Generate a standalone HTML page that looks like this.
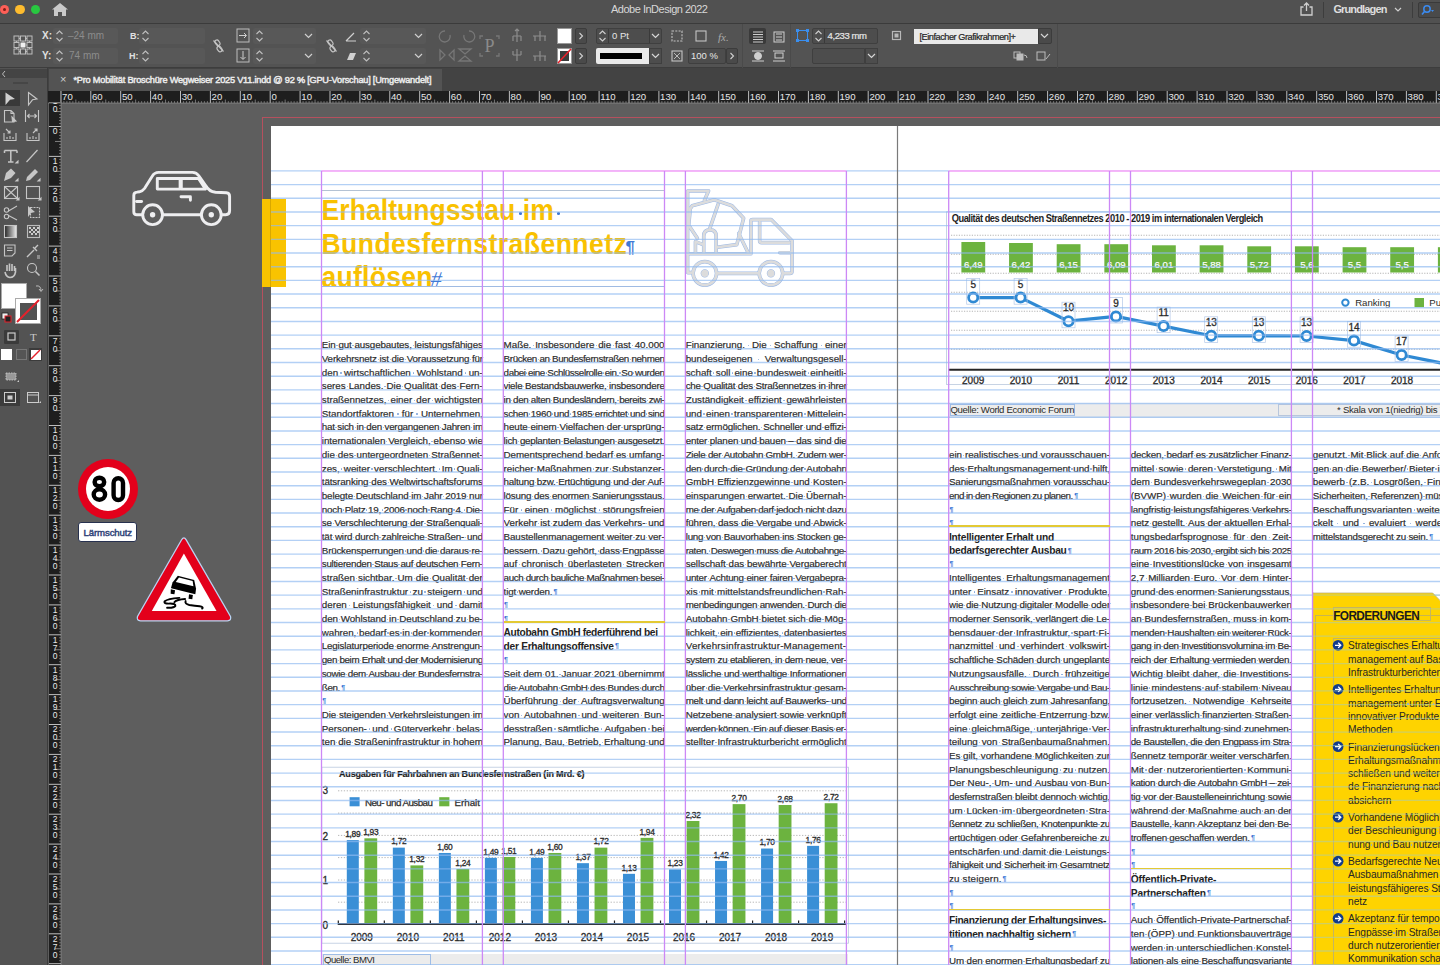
<!DOCTYPE html><html><head><meta charset="utf-8"><style>
*{margin:0;padding:0;box-sizing:border-box}
html,body{width:1440px;height:965px;overflow:hidden;background:#5e5e5e;font-family:"Liberation Sans",sans-serif}
.a{position:absolute}
#title{left:0;top:0;width:1440px;height:24px;background:#515151;border-bottom:1px solid #3b3b3b}
#ctrl{left:0;top:24px;width:1440px;height:44px;background:#535353;border-bottom:1px solid #3d3d3d}
#tabbar{left:48px;top:68px;width:1392px;height:23px;background:#434343}
#tab{left:49px;top:69px;width:393px;height:22px;background:#535353}
#tools{left:0;top:68px;width:48px;height:897px;background:#535353;border-right:1px solid #3c3c3c}
#hrul{left:48px;top:91px;width:1392px;height:12px;background:#1e1e1e}
#vrul{left:49px;top:91px;width:12px;height:874px;background:#1e1e1e}
.rn{position:absolute;color:#e8e8e8;font-size:9px;line-height:10px}
.ui{color:#dcdcdc;font-size:10px}
.page{background:#fff}
.l{position:absolute;white-space:nowrap;text-align:justify;text-align-last:justify;font-size:9.8px;line-height:10px;color:#2a2a2a;-webkit-text-stroke:0.18px #2a2a2a}
.l i,.fd i{position:relative;font-style:normal}.l i::after,.fd i::after{content:"";position:absolute;left:50%;top:5.8px;width:1.3px;height:1.3px;margin-left:-0.65px;background:#86a9dc;border-radius:50%}
.b{font-weight:bold;text-align:left;text-align-last:left;color:#222;font-size:10.2px;-webkit-text-stroke:0}
</style></head><body>
<div class="a page" style="left:271px;top:126px;width:1169px;height:839px"></div>
<div class="a" style="left:262px;top:117px;width:1178px;height:1px;background:#b5505e"></div>
<div class="a" style="left:262px;top:117px;width:1px;height:848px;background:#b5505e"></div>
<div class="l fitj" style="letter-spacing:-0.125px;left:321.8px;top:340.3px;width:161.0px">Ein<i> </i>gut<i> </i>ausgebautes,<i> </i>leistungsfähiges</div>
<div class="l fitj" style="letter-spacing:-0.178px;left:321.8px;top:354.0px;width:161.0px">Verkehrsnetz<i> </i>ist<i> </i>die<i> </i>Voraussetzung<i> </i>für</div>
<div class="l fitj" style="letter-spacing:-0.014px;left:321.8px;top:367.7px;width:161.0px">den<i> </i>wirtschaftlichen<i> </i>Wohlstand<i> </i>un-</div>
<div class="l fitj" style="letter-spacing:-0.013px;left:321.8px;top:381.4px;width:161.0px">seres<i> </i>Landes.<i> </i>Die<i> </i>Qualität<i> </i>des<i> </i>Fern-</div>
<div class="l fitj" style="letter-spacing:-0.013px;left:321.8px;top:395.1px;width:161.0px">straßennetzes,<i> </i>einer<i> </i>der<i> </i>wichtigsten</div>
<div class="l fitj" style="letter-spacing:-0.015px;left:321.8px;top:408.7px;width:161.0px">Standortfaktoren<i> </i>für<i> </i>Unternehmen,</div>
<div class="l fitj" style="letter-spacing:-0.229px;left:321.8px;top:422.4px;width:161.0px">hat<i> </i>sich<i> </i>in<i> </i>den<i> </i>vergangenen<i> </i>Jahren<i> </i>im</div>
<div class="l fitj" style="letter-spacing:-0.051px;left:321.8px;top:436.1px;width:161.0px">internationalen<i> </i>Vergleich,<i> </i>ebenso<i> </i>wie</div>
<div class="l fitj" style="letter-spacing:-0.014px;left:321.8px;top:449.8px;width:161.0px">die<i> </i>des<i> </i>untergeordneten<i> </i>Straßennet-</div>
<div class="l fitj" style="letter-spacing:-0.013px;left:321.8px;top:463.5px;width:161.0px">zes,<i> </i>weiter<i> </i>verschlechtert.<i> </i>Im<i> </i>Quali-</div>
<div class="l fitj" style="letter-spacing:-0.117px;left:321.8px;top:477.2px;width:161.0px">tätsranking<i> </i>des<i> </i>Weltwirtschaftsforums</div>
<div class="l fitj" style="letter-spacing:-0.144px;left:321.8px;top:490.9px;width:161.0px">belegte<i> </i>Deutschland<i> </i>im<i> </i>Jahr<i> </i>2019<i> </i>nur</div>
<div class="l fitj" style="letter-spacing:-0.214px;left:321.8px;top:504.5px;width:161.0px">noch<i> </i>Platz<i> </i>19,<i> </i>2006<i> </i>noch<i> </i>Rang<i> </i>4.<i> </i>Die-</div>
<div class="l fitj" style="letter-spacing:-0.182px;left:321.8px;top:518.2px;width:161.0px">se<i> </i>Verschlechterung<i> </i>der<i> </i>Straßenquali-</div>
<div class="l fitj" style="letter-spacing:-0.150px;left:321.8px;top:531.9px;width:161.0px">tät<i> </i>wird<i> </i>durch<i> </i>zahlreiche<i> </i>Straßen-<i> </i>und</div>
<div class="l fitj" style="letter-spacing:-0.204px;left:321.8px;top:545.6px;width:161.0px">Brückensperrungen<i> </i>und<i> </i>die<i> </i>daraus<i> </i>re-</div>
<div class="l fitj" style="letter-spacing:-0.294px;left:321.8px;top:559.3px;width:161.0px">sultierenden<i> </i>Staus<i> </i>auf<i> </i>deutschen<i> </i>Fern-</div>
<div class="l fitj" style="letter-spacing:-0.013px;left:321.8px;top:573.0px;width:161.0px">straßen<i> </i>sichtbar.<i> </i>Um<i> </i>die<i> </i>Qualität<i> </i>der</div>
<div class="l fitj" style="letter-spacing:-0.014px;left:321.8px;top:586.7px;width:161.0px">Straßeninfrastruktur<i> </i>zu<i> </i>steigern<i> </i>und</div>
<div class="l fitj" style="letter-spacing:-0.014px;left:321.8px;top:600.4px;width:161.0px">deren<i> </i>Leistungsfähigkeit<i> </i>und<i> </i>damit</div>
<div class="l fitj" style="letter-spacing:-0.066px;left:321.8px;top:614.0px;width:161.0px">den<i> </i>Wohlstand<i> </i>in<i> </i>Deutschland<i> </i>zu<i> </i>be-</div>
<div class="l fitj" style="letter-spacing:-0.056px;left:321.8px;top:627.7px;width:161.0px">wahren,<i> </i>bedarf<i> </i>es<i> </i>in<i> </i>der<i> </i>kommenden</div>
<div class="l fitj" style="letter-spacing:-0.187px;left:321.8px;top:641.4px;width:161.0px">Legislaturperiode<i> </i>enorme<i> </i>Anstrengun-</div>
<div class="l fitj" style="letter-spacing:-0.380px;left:321.8px;top:655.1px;width:161.0px">gen<i> </i>beim<i> </i>Erhalt<i> </i>und<i> </i>der<i> </i>Modernisierung</div>
<div class="l fitj" style="letter-spacing:-0.324px;left:321.8px;top:668.8px;width:161.0px">sowie<i> </i>dem<i> </i>Ausbau<i> </i>der<i> </i>Bundesfernstra-</div>
<div class="l fit" style="letter-spacing:-0.370px;left:321.8px;top:682.5px;text-align:left;text-align-last:left">ßen.</div>
<div class="a" style="left:341.3px;top:683.5px;font-size:7px;line-height:7px;color:#3f79d6;font-weight:bold">&#182;</div>
<div class="a" style="left:322.3px;top:697.2px;font-size:7px;line-height:7px;color:#3f79d6;font-weight:bold">&#182;</div>
<div class="l fitj" style="letter-spacing:-0.112px;left:321.8px;top:709.8px;width:161.0px">Die<i> </i>steigenden<i> </i>Verkehrsleistungen<i> </i>im</div>
<div class="l fitj" style="letter-spacing:-0.015px;left:321.8px;top:723.5px;width:161.0px">Personen-<i> </i>und<i> </i>Güterverkehr<i> </i>belas-</div>
<div class="l fitj" style="letter-spacing:-0.036px;left:321.8px;top:737.2px;width:161.0px">ten<i> </i>die<i> </i>Straßeninfrastruktur<i> </i>in<i> </i>hohem</div>
<div class="l fitj" style="letter-spacing:-0.014px;left:503.6px;top:340.3px;width:161.0px">Maße.<i> </i>Insbesondere<i> </i>die<i> </i>fast<i> </i>40.000</div>
<div class="l fitj" style="letter-spacing:-0.380px;left:503.6px;top:354.0px;width:161.0px">Brücken<i> </i>an<i> </i>Bundesfernstraßen<i> </i>nehmen</div>
<div class="l fitj" style="letter-spacing:-0.402px;left:503.6px;top:367.7px;width:161.0px">dabei<i> </i>eine<i> </i>Schlüsselrolle<i> </i>ein.<i> </i>So<i> </i>wurden</div>
<div class="l fitj" style="letter-spacing:-0.278px;left:503.6px;top:381.4px;width:161.0px">viele<i> </i>Bestandsbauwerke,<i> </i>insbesondere</div>
<div class="l fitj" style="letter-spacing:-0.347px;left:503.6px;top:395.1px;width:161.0px">in<i> </i>den<i> </i>alten<i> </i>Bundesländern,<i> </i>bereits<i> </i>zwi-</div>
<div class="l fitj" style="letter-spacing:-0.309px;left:503.6px;top:408.7px;width:161.0px">schen<i> </i>1960<i> </i>und<i> </i>1985<i> </i>errichtet<i> </i>und<i> </i>sind</div>
<div class="l fitj" style="letter-spacing:-0.093px;left:503.6px;top:422.4px;width:161.0px">heute<i> </i>einem<i> </i>Vielfachen<i> </i>der<i> </i>ursprüng-</div>
<div class="l fitj" style="letter-spacing:-0.264px;left:503.6px;top:436.1px;width:161.0px">lich<i> </i>geplanten<i> </i>Belastungen<i> </i>ausgesetzt.</div>
<div class="l fitj" style="letter-spacing:-0.056px;left:503.6px;top:449.8px;width:161.0px">Dementsprechend<i> </i>bedarf<i> </i>es<i> </i>umfang-</div>
<div class="l fitj" style="letter-spacing:-0.014px;left:503.6px;top:463.5px;width:161.0px">reicher<i> </i>Maßnahmen<i> </i>zur<i> </i>Substanzer-</div>
<div class="l fitj" style="letter-spacing:-0.222px;left:503.6px;top:477.2px;width:161.0px">haltung<i> </i>bzw.<i> </i>Ertüchtigung<i> </i>und<i> </i>der<i> </i>Auf-</div>
<div class="l fitj" style="letter-spacing:-0.193px;left:503.6px;top:490.9px;width:161.0px">lösung<i> </i>des<i> </i>enormen<i> </i>Sanierungsstaus.</div>
<div class="l fitj" style="letter-spacing:-0.014px;left:503.6px;top:504.5px;width:161.0px">Für<i> </i>einen<i> </i>möglichst<i> </i>störungsfreien</div>
<div class="l fitj" style="letter-spacing:-0.014px;left:503.6px;top:518.2px;width:161.0px">Verkehr<i> </i>ist<i> </i>zudem<i> </i>das<i> </i>Verkehrs-<i> </i>und</div>
<div class="l fitj" style="letter-spacing:-0.115px;left:503.6px;top:531.9px;width:161.0px">Baustellenmanagement<i> </i>weiter<i> </i>zu<i> </i>ver-</div>
<div class="l fitj" style="letter-spacing:-0.163px;left:503.6px;top:545.6px;width:161.0px">bessern.<i> </i>Dazu<i> </i>gehört,<i> </i>dass<i> </i>Engpässe</div>
<div class="l fitj" style="letter-spacing:-0.014px;left:503.6px;top:559.3px;width:161.0px">auf<i> </i>chronisch<i> </i>überlasteten<i> </i>Strecken</div>
<div class="l fitj" style="letter-spacing:-0.400px;left:503.6px;top:573.0px;width:161.0px">auch<i> </i>durch<i> </i>bauliche<i> </i>Maßnahmen<i> </i>besei-</div>
<div class="l fit" style="letter-spacing:-0.152px;left:503.6px;top:586.7px;text-align:left;text-align-last:left">tigt<i> </i>werden.</div>
<div class="a" style="left:553.6px;top:587.7px;font-size:7px;line-height:7px;color:#3f79d6;font-weight:bold">&#182;</div>
<div class="a" style="left:504.1px;top:601.4px;font-size:7px;line-height:7px;color:#3f79d6;font-weight:bold">&#182;</div>
<div class="a" style="left:504.1px;top:615.0px;font-size:7px;line-height:7px;color:#3f79d6;font-weight:bold">&#182;</div>
<div class="l b fit" style="letter-spacing:-0.336px;left:503.6px;top:628.4px">Autobahn GmbH federführend bei</div>
<div class="l b fit" style="letter-spacing:-0.288px;left:503.6px;top:642.1px">der Erhaltungsoffensive</div>
<div class="a" style="left:614.9px;top:642.4px;font-size:7px;line-height:7px;color:#3f79d6;font-weight:bold">&#182;</div>
<div class="a" style="left:504.1px;top:656.1px;font-size:7px;line-height:7px;color:#3f79d6;font-weight:bold">&#182;</div>
<div class="l fitj" style="letter-spacing:-0.023px;left:503.6px;top:668.8px;width:161.0px">Seit<i> </i>dem<i> </i>01.<i> </i>Januar<i> </i>2021<i> </i>übernimmt</div>
<div class="l fitj" style="letter-spacing:-0.296px;left:503.6px;top:682.5px;width:161.0px">die<i> </i>Autobahn<i> </i>GmbH<i> </i>des<i> </i>Bundes<i> </i>durch</div>
<div class="l fitj" style="letter-spacing:-0.014px;left:503.6px;top:696.2px;width:161.0px">Überführung<i> </i>der<i> </i>Auftragsverwaltung</div>
<div class="l fitj" style="letter-spacing:-0.016px;left:503.6px;top:709.8px;width:161.0px">von<i> </i>Autobahnen<i> </i>und<i> </i>weiteren<i> </i>Bun-</div>
<div class="l fitj" style="letter-spacing:-0.015px;left:503.6px;top:723.5px;width:161.0px">desstraßen<i> </i>sämtliche<i> </i>Aufgaben<i> </i>bei</div>
<div class="l fitj" style="letter-spacing:-0.038px;left:503.6px;top:737.2px;width:161.0px">Planung,<i> </i>Bau,<i> </i>Betrieb,<i> </i>Erhaltung<i> </i>und</div>
<div class="l fitj" style="letter-spacing:-0.014px;left:685.7px;top:340.3px;width:161.0px">Finanzierung.<i> </i>Die<i> </i>Schaffung<i> </i>einer</div>
<div class="l fitj" style="letter-spacing:-0.016px;left:685.7px;top:354.0px;width:161.0px">bundeseigenen<i> </i>Verwaltungsgesell-</div>
<div class="l fitj" style="letter-spacing:-0.012px;left:685.7px;top:367.7px;width:161.0px">schaft<i> </i>soll<i> </i>eine<i> </i>bundesweit<i> </i>einheitli-</div>
<div class="l fitj" style="letter-spacing:-0.244px;left:685.7px;top:381.4px;width:161.0px">che<i> </i>Qualität<i> </i>des<i> </i>Straßennetzes<i> </i>in<i> </i>ihrer</div>
<div class="l fitj" style="letter-spacing:-0.013px;left:685.7px;top:395.1px;width:161.0px">Zuständigkeit<i> </i>effizient<i> </i>gewährleisten</div>
<div class="l fitj" style="letter-spacing:-0.013px;left:685.7px;top:408.7px;width:161.0px">und<i> </i>einen<i> </i>transparenteren<i> </i>Mittelein-</div>
<div class="l fitj" style="letter-spacing:-0.127px;left:685.7px;top:422.4px;width:161.0px">satz<i> </i>ermöglichen.<i> </i>Schneller<i> </i>und<i> </i>effizi-</div>
<div class="l fitj" style="letter-spacing:-0.171px;left:685.7px;top:436.1px;width:161.0px">enter<i> </i>planen<i> </i>und<i> </i>bauen<i> </i>–<i> </i>das<i> </i>sind<i> </i>die</div>
<div class="l fitj" style="letter-spacing:-0.318px;left:685.7px;top:449.8px;width:161.0px">Ziele<i> </i>der<i> </i>Autobahn<i> </i>GmbH.<i> </i>Zudem<i> </i>wer-</div>
<div class="l fitj" style="letter-spacing:-0.195px;left:685.7px;top:463.5px;width:161.0px">den<i> </i>durch<i> </i>die<i> </i>Gründung<i> </i>der<i> </i>Autobahn</div>
<div class="l fitj" style="letter-spacing:-0.014px;left:685.7px;top:477.2px;width:161.0px">GmbH<i> </i>Effizienzgewinne<i> </i>und<i> </i>Kosten-</div>
<div class="l fitj" style="letter-spacing:-0.021px;left:685.7px;top:490.9px;width:161.0px">einsparungen<i> </i>erwartet.<i> </i>Die<i> </i>Übernah-</div>
<div class="l fitj" style="letter-spacing:-0.352px;left:685.7px;top:504.5px;width:161.0px">me<i> </i>der<i> </i>Aufgaben<i> </i>darf<i> </i>jedoch<i> </i>nicht<i> </i>dazu</div>
<div class="l fitj" style="letter-spacing:-0.128px;left:685.7px;top:518.2px;width:161.0px">führen,<i> </i>dass<i> </i>die<i> </i>Vergabe<i> </i>und<i> </i>Abwick-</div>
<div class="l fitj" style="letter-spacing:-0.220px;left:685.7px;top:531.9px;width:161.0px">lung<i> </i>von<i> </i>Bauvorhaben<i> </i>ins<i> </i>Stocken<i> </i>ge-</div>
<div class="l fitj" style="letter-spacing:-0.400px;left:685.7px;top:545.6px;width:161.0px">raten.<i> </i>Deswegen<i> </i>muss<i> </i>die<i> </i>Autobahnge-</div>
<div class="l fitj" style="letter-spacing:-0.082px;left:685.7px;top:559.3px;width:161.0px">sellschaft<i> </i>das<i> </i>bewährte<i> </i>Vergaberecht</div>
<div class="l fitj" style="letter-spacing:-0.236px;left:685.7px;top:573.0px;width:161.0px">unter<i> </i>Achtung<i> </i>einer<i> </i>fairen<i> </i>Vergabepra-</div>
<div class="l fitj" style="letter-spacing:-0.014px;left:685.7px;top:586.7px;width:161.0px">xis<i> </i>mit<i> </i>mittelstandsfreundlichen<i> </i>Rah-</div>
<div class="l fitj" style="letter-spacing:-0.312px;left:685.7px;top:600.4px;width:161.0px">menbedingungen<i> </i>anwenden.<i> </i>Durch<i> </i>die</div>
<div class="l fitj" style="letter-spacing:-0.014px;left:685.7px;top:614.0px;width:161.0px">Autobahn<i> </i>GmbH<i> </i>bietet<i> </i>sich<i> </i>die<i> </i>Mög-</div>
<div class="l fitj" style="letter-spacing:-0.107px;left:685.7px;top:627.7px;width:161.0px">lichkeit,<i> </i>ein<i> </i>effizientes,<i> </i>datenbasiertes</div>
<div class="l fitj" style="letter-spacing:0.194px;left:685.7px;top:641.4px;width:161.0px">Verkehrsinfrastruktur-Management-</div>
<div class="l fitj" style="letter-spacing:-0.286px;left:685.7px;top:655.1px;width:161.0px">system<i> </i>zu<i> </i>etablieren,<i> </i>in<i> </i>dem<i> </i>neue,<i> </i>ver-</div>
<div class="l fitj" style="letter-spacing:-0.229px;left:685.7px;top:668.8px;width:161.0px">lässliche<i> </i>und<i> </i>werthaltige<i> </i>Informationen</div>
<div class="l fitj" style="letter-spacing:-0.093px;left:685.7px;top:682.5px;width:161.0px">über<i> </i>die<i> </i>Verkehrsinfrastruktur<i> </i>gesam-</div>
<div class="l fitj" style="letter-spacing:-0.308px;left:685.7px;top:696.2px;width:161.0px">melt<i> </i>und<i> </i>dann<i> </i>leicht<i> </i>auf<i> </i>Bauwerks-<i> </i>und</div>
<div class="l fitj" style="letter-spacing:-0.067px;left:685.7px;top:709.8px;width:161.0px">Netzebene<i> </i>analysiert<i> </i>sowie<i> </i>verknüpft</div>
<div class="l fitj" style="letter-spacing:-0.343px;left:685.7px;top:723.5px;width:161.0px">werden<i> </i>können.<i> </i>Ein<i> </i>auf<i> </i>dieser<i> </i>Basis<i> </i>er-</div>
<div class="l fitj" style="letter-spacing:-0.018px;left:685.7px;top:737.2px;width:161.0px">stellter<i> </i>Infrastrukturbericht<i> </i>ermöglicht</div>
<div class="l fitj" style="letter-spacing:-0.021px;left:949.0px;top:449.8px;width:161.0px">ein<i> </i>realistisches<i> </i>und<i> </i>vorausschauen-</div>
<div class="l fitj" style="letter-spacing:-0.053px;left:949.0px;top:463.5px;width:161.0px">des<i> </i>Erhaltungsmanagement<i> </i>und<i> </i>hilft,</div>
<div class="l fitj" style="letter-spacing:-0.175px;left:949.0px;top:477.2px;width:161.0px">Sanierungsmaßnahmen<i> </i>vorausschau-</div>
<div class="l fit" style="letter-spacing:-0.493px;left:949.0px;top:490.9px;text-align:left;text-align-last:left">end<i> </i>in<i> </i>den<i> </i>Regionen<i> </i>zu<i> </i>planen.</div>
<div class="a" style="left:1074.2px;top:491.9px;font-size:7px;line-height:7px;color:#3f79d6;font-weight:bold">&#182;</div>
<div class="a" style="left:949.5px;top:505.5px;font-size:7px;line-height:7px;color:#3f79d6;font-weight:bold">&#182;</div>
<div class="a" style="left:949.5px;top:519.2px;font-size:7px;line-height:7px;color:#3f79d6;font-weight:bold">&#182;</div>
<div class="l b fit" style="letter-spacing:-0.246px;left:949.0px;top:532.6px">Intelligenter Erhalt und</div>
<div class="l b fit" style="letter-spacing:-0.238px;left:949.0px;top:546.3px">bedarfsgerechter Ausbau</div>
<div class="a" style="left:1067.8px;top:546.6px;font-size:7px;line-height:7px;color:#3f79d6;font-weight:bold">&#182;</div>
<div class="a" style="left:949.5px;top:560.3px;font-size:7px;line-height:7px;color:#3f79d6;font-weight:bold">&#182;</div>
<div class="l fitj" style="letter-spacing:-0.015px;left:949.0px;top:573.0px;width:161.0px">Intelligentes<i> </i>Erhaltungsmanagement</div>
<div class="l fitj" style="letter-spacing:-0.013px;left:949.0px;top:586.7px;width:161.0px">unter<i> </i>Einsatz<i> </i>innovativer<i> </i>Produkte,</div>
<div class="l fitj" style="letter-spacing:-0.150px;left:949.0px;top:600.4px;width:161.0px">wie<i> </i>die<i> </i>Nutzung<i> </i>digitaler<i> </i>Modelle<i> </i>oder</div>
<div class="l fitj" style="letter-spacing:-0.109px;left:949.0px;top:614.0px;width:161.0px">moderner<i> </i>Sensorik,<i> </i>verlängert<i> </i>die<i> </i>Le-</div>
<div class="l fitj" style="letter-spacing:-0.012px;left:949.0px;top:627.7px;width:161.0px">bensdauer<i> </i>der<i> </i>Infrastruktur,<i> </i>spart<i> </i>Fi-</div>
<div class="l fitj" style="letter-spacing:-0.013px;left:949.0px;top:641.4px;width:161.0px">nanzmittel<i> </i>und<i> </i>verhindert<i> </i>volkswirt-</div>
<div class="l fitj" style="letter-spacing:-0.158px;left:949.0px;top:655.1px;width:161.0px">schaftliche<i> </i>Schäden<i> </i>durch<i> </i>ungeplante</div>
<div class="l fitj" style="letter-spacing:-0.014px;left:949.0px;top:668.8px;width:161.0px">Nutzungsausfälle.<i> </i>Durch<i> </i>frühzeitige</div>
<div class="l fitj" style="letter-spacing:-0.385px;left:949.0px;top:682.5px;width:161.0px">Ausschreibung<i> </i>sowie<i> </i>Vergabe<i> </i>und<i> </i>Bau-</div>
<div class="l fitj" style="letter-spacing:-0.204px;left:949.0px;top:696.2px;width:161.0px">beginn<i> </i>auch<i> </i>gleich<i> </i>zum<i> </i>Jahresanfang,</div>
<div class="l fitj" style="letter-spacing:-0.012px;left:949.0px;top:709.8px;width:161.0px">erfolgt<i> </i>eine<i> </i>zeitliche<i> </i>Entzerrung<i> </i>bzw.</div>
<div class="l fitj" style="letter-spacing:-0.013px;left:949.0px;top:723.5px;width:161.0px">eine<i> </i>gleichmäßige,<i> </i>unterjährige<i> </i>Ver-</div>
<div class="l fitj" style="letter-spacing:-0.016px;left:949.0px;top:737.2px;width:161.0px">teilung<i> </i>von<i> </i>Straßenbaumaßnahmen.</div>
<div class="l fitj" style="letter-spacing:-0.065px;left:949.0px;top:750.9px;width:161.0px">Es<i> </i>gilt,<i> </i>vorhandene<i> </i>Möglichkeiten<i> </i>zur</div>
<div class="l fitj" style="letter-spacing:-0.015px;left:949.0px;top:764.6px;width:161.0px">Planungsbeschleunigung<i> </i>zu<i> </i>nutzen.</div>
<div class="l fitj" style="letter-spacing:-0.014px;left:949.0px;top:778.3px;width:161.0px">Der<i> </i>Neu-,<i> </i>Um-<i> </i>und<i> </i>Ausbau<i> </i>von<i> </i>Bun-</div>
<div class="l fitj" style="letter-spacing:-0.192px;left:949.0px;top:792.0px;width:161.0px">desfernstraßen<i> </i>bleibt<i> </i>dennoch<i> </i>wichtig,</div>
<div class="l fitj" style="letter-spacing:-0.015px;left:949.0px;top:805.6px;width:161.0px">um<i> </i>Lücken<i> </i>im<i> </i>übergeordneten<i> </i>Stra-</div>
<div class="l fitj" style="letter-spacing:-0.316px;left:949.0px;top:819.3px;width:161.0px">ßennetz<i> </i>zu<i> </i>schließen,<i> </i>Knotenpunkte<i> </i>zu</div>
<div class="l fitj" style="letter-spacing:-0.128px;left:949.0px;top:833.0px;width:161.0px">ertüchtigen<i> </i>oder<i> </i>Gefahrenbereiche<i> </i>zu</div>
<div class="l fitj" style="letter-spacing:-0.014px;left:949.0px;top:846.7px;width:161.0px">entschärfen<i> </i>und<i> </i>damit<i> </i>die<i> </i>Leistungs-</div>
<div class="l fitj" style="letter-spacing:-0.264px;left:949.0px;top:860.4px;width:161.0px">fähigkeit<i> </i>und<i> </i>Sicherheit<i> </i>im<i> </i>Gesamtnetz</div>
<div class="l fit" style="letter-spacing:0.175px;left:949.0px;top:874.1px;text-align:left;text-align-last:left">zu<i> </i>steigern.</div>
<div class="a" style="left:1002.6px;top:875.1px;font-size:7px;line-height:7px;color:#3f79d6;font-weight:bold">&#182;</div>
<div class="a" style="left:949.5px;top:888.8px;font-size:7px;line-height:7px;color:#3f79d6;font-weight:bold">&#182;</div>
<div class="a" style="left:949.5px;top:902.4px;font-size:7px;line-height:7px;color:#3f79d6;font-weight:bold">&#182;</div>
<div class="l b fit" style="letter-spacing:-0.321px;left:949.0px;top:915.8px">Finanzierung der Erhaltungsinves-</div>
<div class="l b fit" style="letter-spacing:-0.282px;left:949.0px;top:929.5px">titionen nachhaltig sichern</div>
<div class="a" style="left:1072.3px;top:929.8px;font-size:7px;line-height:7px;color:#3f79d6;font-weight:bold">&#182;</div>
<div class="a" style="left:949.5px;top:943.5px;font-size:7px;line-height:7px;color:#3f79d6;font-weight:bold">&#182;</div>
<div class="l fitj" style="letter-spacing:-0.168px;left:949.0px;top:956.2px;width:161.0px">Um<i> </i>den<i> </i>enormen<i> </i>Erhaltungsbedarf<i> </i>zu</div>
<div class="l fitj" style="letter-spacing:-0.192px;left:1130.8px;top:449.8px;width:161.0px">decken,<i> </i>bedarf<i> </i>es<i> </i>zusätzlicher<i> </i>Finanz-</div>
<div class="l fitj" style="letter-spacing:-0.014px;left:1130.8px;top:463.5px;width:161.0px">mittel<i> </i>sowie<i> </i>deren<i> </i>Verstetigung.<i> </i>Mit</div>
<div class="l fitj" style="letter-spacing:-0.016px;left:1130.8px;top:477.2px;width:161.0px">dem<i> </i>Bundesverkehrswegeplan<i> </i>2030</div>
<div class="l fitj" style="letter-spacing:-0.014px;left:1130.8px;top:490.9px;width:161.0px">(BVWP)<i> </i>wurden<i> </i>die<i> </i>Weichen<i> </i>für<i> </i>ein</div>
<div class="l fitj" style="letter-spacing:-0.195px;left:1130.8px;top:504.5px;width:161.0px">langfristig<i> </i>leistungsfähigeres<i> </i>Verkehrs-</div>
<div class="l fitj" style="letter-spacing:-0.048px;left:1130.8px;top:518.2px;width:161.0px">netz<i> </i>gestellt.<i> </i>Aus<i> </i>der<i> </i>aktuellen<i> </i>Erhal-</div>
<div class="l fitj" style="letter-spacing:-0.014px;left:1130.8px;top:531.9px;width:161.0px">tungsbedarfsprognose<i> </i>für<i> </i>den<i> </i>Zeit-</div>
<div class="l fitj" style="letter-spacing:-0.403px;left:1130.8px;top:545.6px;width:161.0px">raum<i> </i>2016<i> </i>bis<i> </i>2030,<i> </i>ergibt<i> </i>sich<i> </i>bis<i> </i>2025</div>
<div class="l fitj" style="letter-spacing:-0.014px;left:1130.8px;top:559.3px;width:161.0px">eine<i> </i>Investitionslücke<i> </i>von<i> </i>insgesamt</div>
<div class="l fitj" style="letter-spacing:-0.014px;left:1130.8px;top:573.0px;width:161.0px">2,7<i> </i>Milliarden<i> </i>Euro.<i> </i>Vor<i> </i>dem<i> </i>Hinter-</div>
<div class="l fitj" style="letter-spacing:-0.086px;left:1130.8px;top:586.7px;width:161.0px">grund<i> </i>des<i> </i>enormen<i> </i>Sanierungsstaus,</div>
<div class="l fitj" style="letter-spacing:-0.023px;left:1130.8px;top:600.4px;width:161.0px">insbesondere<i> </i>bei<i> </i>Brückenbauwerken</div>
<div class="l fitj" style="letter-spacing:-0.014px;left:1130.8px;top:614.0px;width:161.0px">an<i> </i>Bundesfernstraßen,<i> </i>muss<i> </i>in<i> </i>kom-</div>
<div class="l fitj" style="letter-spacing:-0.249px;left:1130.8px;top:627.7px;width:161.0px">menden<i> </i>Haushalten<i> </i>ein<i> </i>weiterer<i> </i>Rück-</div>
<div class="l fitj" style="letter-spacing:-0.328px;left:1130.8px;top:641.4px;width:161.0px">gang<i> </i>in<i> </i>den<i> </i>Investitionsvolumina<i> </i>im<i> </i>Be-</div>
<div class="l fitj" style="letter-spacing:-0.228px;left:1130.8px;top:655.1px;width:161.0px">reich<i> </i>der<i> </i>Erhaltung<i> </i>vermieden<i> </i>werden.</div>
<div class="l fitj" style="letter-spacing:-0.012px;left:1130.8px;top:668.8px;width:161.0px">Wichtig<i> </i>bleibt<i> </i>daher,<i> </i>die<i> </i>Investitions-</div>
<div class="l fitj" style="letter-spacing:-0.013px;left:1130.8px;top:682.5px;width:161.0px">linie<i> </i>mindestens<i> </i>auf<i> </i>stabilem<i> </i>Niveau</div>
<div class="l fitj" style="letter-spacing:-0.014px;left:1130.8px;top:696.2px;width:161.0px">fortzusetzen.<i> </i>Notwendige<i> </i>Kehrseite</div>
<div class="l fitj" style="letter-spacing:-0.103px;left:1130.8px;top:709.8px;width:161.0px">einer<i> </i>verlässlich<i> </i>finanzierten<i> </i>Straßen-</div>
<div class="l fitj" style="letter-spacing:-0.123px;left:1130.8px;top:723.5px;width:161.0px">infrastrukturerhaltung<i> </i>sind<i> </i>zunehmen-</div>
<div class="l fitj" style="letter-spacing:-0.371px;left:1130.8px;top:737.2px;width:161.0px">de<i> </i>Baustellen,<i> </i>die<i> </i>den<i> </i>Engpass<i> </i>im<i> </i>Stra-</div>
<div class="l fitj" style="letter-spacing:-0.066px;left:1130.8px;top:750.9px;width:161.0px">ßennetz<i> </i>temporär<i> </i>weiter<i> </i>verschärfen.</div>
<div class="l fitj" style="letter-spacing:-0.014px;left:1130.8px;top:764.6px;width:161.0px">Mit<i> </i>der<i> </i>nutzerorientierten<i> </i>Kommuni-</div>
<div class="l fitj" style="letter-spacing:-0.302px;left:1130.8px;top:778.3px;width:161.0px">kation<i> </i>durch<i> </i>die<i> </i>Autobahn<i> </i>GmbH<i> </i>–<i> </i>zei-</div>
<div class="l fitj" style="letter-spacing:-0.188px;left:1130.8px;top:792.0px;width:161.0px">tig<i> </i>vor<i> </i>der<i> </i>Baustelleneinrichtung<i> </i>sowie</div>
<div class="l fitj" style="letter-spacing:-0.026px;left:1130.8px;top:805.6px;width:161.0px">während<i> </i>der<i> </i>Maßnahme<i> </i>auch<i> </i>an<i> </i>der</div>
<div class="l fitj" style="letter-spacing:-0.213px;left:1130.8px;top:819.3px;width:161.0px">Baustelle,<i> </i>kann<i> </i>Akzeptanz<i> </i>bei<i> </i>den<i> </i>Be-</div>
<div class="l fit" style="letter-spacing:-0.274px;left:1130.8px;top:833.0px;text-align:left;text-align-last:left">troffenen<i> </i>geschaffen<i> </i>werden.</div>
<div class="a" style="left:1251.0px;top:834.0px;font-size:7px;line-height:7px;color:#3f79d6;font-weight:bold">&#182;</div>
<div class="a" style="left:1131.3px;top:847.7px;font-size:7px;line-height:7px;color:#3f79d6;font-weight:bold">&#182;</div>
<div class="a" style="left:1131.3px;top:861.4px;font-size:7px;line-height:7px;color:#3f79d6;font-weight:bold">&#182;</div>
<div class="l b fit" style="letter-spacing:-0.156px;left:1130.8px;top:874.8px">Öffentlich-Private-</div>
<div class="l b fit" style="letter-spacing:-0.177px;left:1130.8px;top:888.5px">Partnerschaften</div>
<div class="a" style="left:1206.9px;top:888.8px;font-size:7px;line-height:7px;color:#3f79d6;font-weight:bold">&#182;</div>
<div class="a" style="left:1131.3px;top:902.4px;font-size:7px;line-height:7px;color:#3f79d6;font-weight:bold">&#182;</div>
<div class="l fitj" style="letter-spacing:-0.043px;left:1130.8px;top:915.1px;width:161.0px">Auch<i> </i>Öffentlich-Private-Partnerschaf-</div>
<div class="l fitj" style="letter-spacing:-0.014px;left:1130.8px;top:928.8px;width:161.0px">ten<i> </i>(ÖPP)<i> </i>und<i> </i>Funktionsbauverträge</div>
<div class="l fitj" style="letter-spacing:-0.013px;left:1130.8px;top:942.5px;width:161.0px">werden<i> </i>in<i> </i>unterschiedlichen<i> </i>Konstel-</div>
<div class="l fitj" style="letter-spacing:-0.188px;left:1130.8px;top:956.2px;width:161.0px">lationen<i> </i>als<i> </i>eine<i> </i>Beschaffungsvariante</div>
<div class="l fitj" style="letter-spacing:-0.012px;left:1312.8px;top:449.8px;width:161px">genutzt.<i> </i>Mit<i> </i>Blick<i> </i>auf<i> </i>die<i> </i>Anforderun-</div>
<div class="l fitj" style="letter-spacing:-0.013px;left:1312.8px;top:463.5px;width:161px">gen<i> </i>an<i> </i>die<i> </i>Bewerber/<i> </i>Bieter<i> </i>im<i> </i>Wett-</div>
<div class="l fitj" style="letter-spacing:-0.013px;left:1312.8px;top:477.2px;width:161px">bewerb<i> </i>(z.B.<i> </i>Losgrößen,<i> </i>Finanzielle</div>
<div class="l fitj" style="letter-spacing:-0.172px;left:1312.8px;top:490.9px;width:161px">Sicherheiten,<i> </i>Referenzen)<i> </i>müssen<i> </i>die</div>
<div class="l fitj" style="letter-spacing:-0.014px;left:1312.8px;top:504.5px;width:161px">Beschaffungsvarianten<i> </i>weiter<i> </i>entwi-</div>
<div class="l fitj" style="letter-spacing:-0.016px;left:1312.8px;top:518.2px;width:161px">ckelt<i> </i>und<i> </i>evaluiert<i> </i>werden,<i> </i>um</div>
<div class="l fit" style="letter-spacing:-0.222px;left:1312.8px;top:531.9px;text-align:left;text-align-last:left">mittelstandsgerecht<i> </i>zu<i> </i>sein.</div>
<div class="a" style="left:1429.3px;top:532.9px;font-size:7px;line-height:7px;color:#3f79d6;font-weight:bold">&#182;</div>
<div class="a" style="left:262px;top:198.5px;width:23.5px;height:88px;background:#f9c300"></div>
<div class="a" style="left:270px;top:198.5px;width:1px;height:88px;background:#d9a800"></div>
<div class="a fit" style="letter-spacing:0.070px;left:321.5px;top:195.9px;font-size:26.5px;line-height:30px;font-weight:bold;color:#f9c100;white-space:nowrap;transform-origin:0 24.2px;transform:scaleY(1.1)">Erhaltungsstau im</div>
<div class="a fit" style="letter-spacing:0.462px;left:321.5px;top:229.5px;font-size:26.5px;line-height:30px;font-weight:bold;color:#f9c100;white-space:nowrap;transform-origin:0 24.2px;transform:scaleY(1.1)">Bundesfernstraßennetz</div>
<div class="a fit" style="letter-spacing:0.290px;left:321.5px;top:263.2px;font-size:26.5px;line-height:30px;font-weight:bold;color:#f9c100;white-space:nowrap;transform-origin:0 24.2px;transform:scaleY(1.1)">auflösen</div>
<div class="a" style="left:625.5px;top:238.5px;font-size:17px;line-height:17px;color:#3f79d6;font-weight:bold">&#182;</div>
<div class="a" style="left:430.5px;top:268.5px;font-size:20px;line-height:20px;color:#3f79d6;transform:skewX(-8deg)">#</div>
<div class="a" style="left:519px;top:212px;width:2.5px;height:2.5px;border-radius:50%;background:#3f79d6"></div>
<div class="a" style="left:557px;top:212px;width:2.5px;height:2.5px;border-radius:50%;background:#3f79d6"></div>
<div class="a" style="left:321.8px;top:189.6px;width:343px;height:0.8px;background:#b4c2d4"></div>
<div class="a" style="left:321.8px;top:285.9px;width:343px;height:0.8px;background:#9fbbe3"></div>
<svg class="a" style="left:128px;top:166px" width="108" height="66" viewBox="128 166 108 66"><g fill="none" stroke="#eeeef0" stroke-width="2.9" stroke-linecap="round" stroke-linejoin="round">
<path d="M142.4 214.7 H136.8 Q133.8 214.7 133.8 211.7 V195.5 Q133.8 192.3 137 192.1 L139.5 191.8 Q142.5 191.2 144.5 188.5 L152.2 176.2 Q154.4 172.4 158.6 172.4 H192.5 Q196.5 172.4 199 176 L206 186 Q209 191.5 215.5 192.3 L226.4 192.7 Q229.6 193 229.6 196.2 V210.8 Q229.6 214.7 225.8 214.7 H221.2"/>
<path d="M162.8 214.7 H201.2"/>
<circle cx="152.6" cy="214.7" r="9.9"/><circle cx="211.3" cy="214.7" r="9.9"/>
<path d="M157.3 178.5 H180.1 V189.1 H157.3 Z"/><path d="M181.3 178.5 H198.5 L205.5 189.1 H181.3 Z"/>
<path d="M181 196.8 H190.4 V200.2"/><path d="M136.5 201.5 H141.6"/>
</g><circle cx="152.6" cy="214.7" r="2.7" fill="#eeeef0"/><circle cx="211.3" cy="214.7" r="2.7" fill="#eeeef0"/></svg>
<div class="a" style="left:78px;top:459px;width:60px;height:60px;border-radius:50%;background:#e3001b"></div>
<div class="a" style="left:85.7px;top:466.7px;width:44.6px;height:44.6px;border-radius:50%;background:#fff"></div>
<svg class="a" style="left:86px;top:470px" width="44" height="38"><g fill="none" stroke="#000" stroke-width="4.4"><ellipse cx="13.4" cy="12" rx="4.8" ry="4.3"/><ellipse cx="13.4" cy="24.5" rx="5.7" ry="5.2"/><rect x="27.6" y="8.2" width="9.4" height="21.8" rx="4.7"/></g></svg>
<div class="a" style="left:78.2px;top:522.2px;width:59px;height:20px;background:#fff;border:1.9px solid #27314f;border-radius:3px"></div>
<div class="a fit" style="letter-spacing:-0.122px;left:83.6px;top:526.8px;font-size:9.6px;line-height:11px;color:#2f4277;-webkit-text-stroke:0.45px #2f4277;white-space:nowrap">Lärmschutz</div>
<svg class="a" style="left:134px;top:534px" width="100" height="92" viewBox="134 534 100 92">
<path d="M183.9 537.8 Q185 537.8 186.2 539.8 L230.5 616.5 Q231.6 620.8 227.5 620.8 H140.5 Q136.3 620.8 137.5 616.5 L181.6 539.8 Q182.8 537.8 183.9 537.8 Z" fill="#e3001b" stroke="#b9d3f2" stroke-width="1.3"/>
<path d="M183.9 553.5 L216.5 611 H151.8 Z" fill="#fff"/>
</svg>
<svg class="a" style="left:150px;top:560px" width="70" height="55" viewBox="0 0 1228 965">
<path d="M372 480 L395 395 L488 275 L775 350 L808 505 L795 600 L372 495 Z" fill="#000"/>
<path d="M452 385 L508 305 L748 368 L762 462 Z" fill="#fff"/>
<path d="M365 515 L440 530 L428 600 L362 590 Z" fill="#000"/>
<path d="M685 600 L752 612 L742 690 L676 678 Z" fill="#000"/>
<g fill="none" stroke="#000" stroke-width="34" stroke-linecap="round">
<path d="M515 665 Q310 680 258 725 Q235 765 330 765 Q455 760 445 805 Q420 845 300 838"/>
<path d="M615 685 Q470 695 428 738"/>
<path d="M625 720 Q605 770 690 790 Q790 805 870 812 Q945 825 915 852"/>
</g></svg>
<svg class="a" style="left:680px;top:185px" width="120" height="105" viewBox="0 0 1103 965"><g fill="none" stroke-linecap="round" stroke-linejoin="round">
<g stroke="#9bb8e6" stroke-width="33">
<path d="M225 140 L262 55 H70 V805 H105"/>
<path d="M95 215 L112 190 L315 135 L478 190 L585 305 L522 548 L342 572"/>
<path d="M95 215 L80 370 L160 490"/>
<path d="M350 178 L272 405"/>
<path d="M540 445 L625 620"/>
<path d="M218 625 V470 Q218 412 277 412 Q332 412 332 470 V625"/>
<path d="M142 625 V520 L205 545"/>
<path d="M70 632 H652 V332 Q652 318 668 318 H838 L1030 512 V792 Q1030 812 1010 812 H952"/>
<path d="M732 340 V515 Q732 530 750 530 H1005"/>
<path d="M918 622 H1028"/>
<path d="M342 812 H722"/>
<circle cx="228" cy="812" r="108"/><circle cx="836" cy="812" r="108"/>
<circle cx="228" cy="812" r="22" fill="#dcdcdc"/><circle cx="836" cy="812" r="22" fill="#dcdcdc"/>
</g><g stroke="#dcdcdc" stroke-width="24">
<path d="M225 140 L262 55 H70 V805 H105"/>
<path d="M95 215 L112 190 L315 135 L478 190 L585 305 L522 548 L342 572"/>
<path d="M95 215 L80 370 L160 490"/>
<path d="M350 178 L272 405"/>
<path d="M540 445 L625 620"/>
<path d="M218 625 V470 Q218 412 277 412 Q332 412 332 470 V625"/>
<path d="M142 625 V520 L205 545"/>
<path d="M70 632 H652 V332 Q652 318 668 318 H838 L1030 512 V792 Q1030 812 1010 812 H952"/>
<path d="M732 340 V515 Q732 530 750 530 H1005"/>
<path d="M918 622 H1028"/>
<path d="M342 812 H722"/>
<circle cx="228" cy="812" r="108"/><circle cx="836" cy="812" r="108"/>
<circle cx="228" cy="812" r="22" fill="#dcdcdc"/><circle cx="836" cy="812" r="22" fill="#dcdcdc"/>
</g></g></svg>
<svg class="a" style="left:0;top:0" width="1440" height="965">
<rect x="321.8" y="767.2" width="526.6" height="176" fill="none" stroke="#b9c9de" stroke-width="0.8"/>
<line x1="338" x2="846" y1="790.8" y2="790.8" stroke="#b8b8b8" stroke-width="1" stroke-dasharray="1.3 1.6"/>
<line x1="338" x2="846" y1="813.1" y2="813.1" stroke="#b8b8b8" stroke-width="1" stroke-dasharray="1.3 1.6"/>
<line x1="338" x2="846" y1="835.4" y2="835.4" stroke="#b8b8b8" stroke-width="1" stroke-dasharray="1.3 1.6"/>
<line x1="338" x2="846" y1="857.6" y2="857.6" stroke="#b8b8b8" stroke-width="1" stroke-dasharray="1.3 1.6"/>
<line x1="338" x2="846" y1="880.0" y2="880.0" stroke="#b8b8b8" stroke-width="1" stroke-dasharray="1.3 1.6"/>
<line x1="338" x2="846" y1="902.2" y2="902.2" stroke="#b8b8b8" stroke-width="1" stroke-dasharray="1.3 1.6"/>
<rect x="346.80" y="840.08" width="12" height="83.92" fill="#3a8fd6"/>
<rect x="364.40" y="838.31" width="12.8" height="85.69" fill="#6cb33f"/>
<text x="352.80" y="836.88" font-family=""Liberation Sans", sans-serif" font-size="8.4" letter-spacing="-0.3" fill="#2a2a2a" stroke="#2a2a2a" stroke-width="0.3" text-anchor="middle">1,89</text>
<text x="370.80" y="835.11" font-family=""Liberation Sans", sans-serif" font-size="8.4" letter-spacing="-0.3" fill="#2a2a2a" stroke="#2a2a2a" stroke-width="0.3" text-anchor="middle">1,93</text>
<text x="361.80" y="940.6" font-family=""Liberation Sans", sans-serif" font-size="10" fill="#2a2a2a" stroke="#2a2a2a" stroke-width="0.3" text-anchor="middle">2009</text>
<rect x="392.83" y="847.63" width="12" height="76.37" fill="#3a8fd6"/>
<rect x="410.43" y="865.39" width="12.8" height="58.61" fill="#6cb33f"/>
<text x="398.83" y="844.43" font-family=""Liberation Sans", sans-serif" font-size="8.4" letter-spacing="-0.3" fill="#2a2a2a" stroke="#2a2a2a" stroke-width="0.3" text-anchor="middle">1,72</text>
<text x="416.83" y="862.19" font-family=""Liberation Sans", sans-serif" font-size="8.4" letter-spacing="-0.3" fill="#2a2a2a" stroke="#2a2a2a" stroke-width="0.3" text-anchor="middle">1,32</text>
<text x="407.83" y="940.6" font-family=""Liberation Sans", sans-serif" font-size="10" fill="#2a2a2a" stroke="#2a2a2a" stroke-width="0.3" text-anchor="middle">2010</text>
<rect x="438.86" y="852.96" width="12" height="71.04" fill="#3a8fd6"/>
<rect x="456.46" y="868.94" width="12.8" height="55.06" fill="#6cb33f"/>
<text x="444.86" y="849.76" font-family=""Liberation Sans", sans-serif" font-size="8.4" letter-spacing="-0.3" fill="#2a2a2a" stroke="#2a2a2a" stroke-width="0.3" text-anchor="middle">1,60</text>
<text x="462.86" y="865.74" font-family=""Liberation Sans", sans-serif" font-size="8.4" letter-spacing="-0.3" fill="#2a2a2a" stroke="#2a2a2a" stroke-width="0.3" text-anchor="middle">1,24</text>
<text x="453.86" y="940.6" font-family=""Liberation Sans", sans-serif" font-size="10" fill="#2a2a2a" stroke="#2a2a2a" stroke-width="0.3" text-anchor="middle">2011</text>
<rect x="484.89" y="857.84" width="12" height="66.16" fill="#3a8fd6"/>
<rect x="502.49" y="856.96" width="12.8" height="67.04" fill="#6cb33f"/>
<text x="490.89" y="854.64" font-family=""Liberation Sans", sans-serif" font-size="8.4" letter-spacing="-0.3" fill="#2a2a2a" stroke="#2a2a2a" stroke-width="0.3" text-anchor="middle">1,49</text>
<text x="508.89" y="853.76" font-family=""Liberation Sans", sans-serif" font-size="8.4" letter-spacing="-0.3" fill="#2a2a2a" stroke="#2a2a2a" stroke-width="0.3" text-anchor="middle">1,51</text>
<text x="499.89" y="940.6" font-family=""Liberation Sans", sans-serif" font-size="10" fill="#2a2a2a" stroke="#2a2a2a" stroke-width="0.3" text-anchor="middle">2012</text>
<rect x="530.92" y="857.84" width="12" height="66.16" fill="#3a8fd6"/>
<rect x="548.52" y="852.96" width="12.8" height="71.04" fill="#6cb33f"/>
<text x="536.92" y="854.64" font-family=""Liberation Sans", sans-serif" font-size="8.4" letter-spacing="-0.3" fill="#2a2a2a" stroke="#2a2a2a" stroke-width="0.3" text-anchor="middle">1,49</text>
<text x="554.92" y="849.76" font-family=""Liberation Sans", sans-serif" font-size="8.4" letter-spacing="-0.3" fill="#2a2a2a" stroke="#2a2a2a" stroke-width="0.3" text-anchor="middle">1,60</text>
<text x="545.92" y="940.6" font-family=""Liberation Sans", sans-serif" font-size="10" fill="#2a2a2a" stroke="#2a2a2a" stroke-width="0.3" text-anchor="middle">2013</text>
<rect x="576.95" y="863.17" width="12" height="60.83" fill="#3a8fd6"/>
<rect x="594.55" y="847.63" width="12.8" height="76.37" fill="#6cb33f"/>
<text x="582.95" y="859.97" font-family=""Liberation Sans", sans-serif" font-size="8.4" letter-spacing="-0.3" fill="#2a2a2a" stroke="#2a2a2a" stroke-width="0.3" text-anchor="middle">1,37</text>
<text x="600.95" y="844.43" font-family=""Liberation Sans", sans-serif" font-size="8.4" letter-spacing="-0.3" fill="#2a2a2a" stroke="#2a2a2a" stroke-width="0.3" text-anchor="middle">1,72</text>
<text x="591.95" y="940.6" font-family=""Liberation Sans", sans-serif" font-size="10" fill="#2a2a2a" stroke="#2a2a2a" stroke-width="0.3" text-anchor="middle">2014</text>
<rect x="622.98" y="873.83" width="12" height="50.17" fill="#3a8fd6"/>
<rect x="640.58" y="837.86" width="12.8" height="86.14" fill="#6cb33f"/>
<text x="628.98" y="870.63" font-family=""Liberation Sans", sans-serif" font-size="8.4" letter-spacing="-0.3" fill="#2a2a2a" stroke="#2a2a2a" stroke-width="0.3" text-anchor="middle">1,13</text>
<text x="646.98" y="834.66" font-family=""Liberation Sans", sans-serif" font-size="8.4" letter-spacing="-0.3" fill="#2a2a2a" stroke="#2a2a2a" stroke-width="0.3" text-anchor="middle">1,94</text>
<text x="637.98" y="940.6" font-family=""Liberation Sans", sans-serif" font-size="10" fill="#2a2a2a" stroke="#2a2a2a" stroke-width="0.3" text-anchor="middle">2015</text>
<rect x="669.01" y="869.39" width="12" height="54.61" fill="#3a8fd6"/>
<rect x="686.61" y="820.99" width="12.8" height="103.01" fill="#6cb33f"/>
<text x="675.01" y="866.19" font-family=""Liberation Sans", sans-serif" font-size="8.4" letter-spacing="-0.3" fill="#2a2a2a" stroke="#2a2a2a" stroke-width="0.3" text-anchor="middle">1,23</text>
<text x="693.01" y="817.79" font-family=""Liberation Sans", sans-serif" font-size="8.4" letter-spacing="-0.3" fill="#2a2a2a" stroke="#2a2a2a" stroke-width="0.3" text-anchor="middle">2,32</text>
<text x="684.01" y="940.6" font-family=""Liberation Sans", sans-serif" font-size="10" fill="#2a2a2a" stroke="#2a2a2a" stroke-width="0.3" text-anchor="middle">2016</text>
<rect x="715.04" y="860.95" width="12" height="63.05" fill="#3a8fd6"/>
<rect x="732.64" y="804.12" width="12.8" height="119.88" fill="#6cb33f"/>
<text x="721.04" y="857.75" font-family=""Liberation Sans", sans-serif" font-size="8.4" letter-spacing="-0.3" fill="#2a2a2a" stroke="#2a2a2a" stroke-width="0.3" text-anchor="middle">1,42</text>
<text x="739.04" y="800.92" font-family=""Liberation Sans", sans-serif" font-size="8.4" letter-spacing="-0.3" fill="#2a2a2a" stroke="#2a2a2a" stroke-width="0.3" text-anchor="middle">2,70</text>
<text x="730.04" y="940.6" font-family=""Liberation Sans", sans-serif" font-size="10" fill="#2a2a2a" stroke="#2a2a2a" stroke-width="0.3" text-anchor="middle">2017</text>
<rect x="761.07" y="848.52" width="12" height="75.48" fill="#3a8fd6"/>
<rect x="778.67" y="805.01" width="12.8" height="118.99" fill="#6cb33f"/>
<text x="767.07" y="845.32" font-family=""Liberation Sans", sans-serif" font-size="8.4" letter-spacing="-0.3" fill="#2a2a2a" stroke="#2a2a2a" stroke-width="0.3" text-anchor="middle">1,70</text>
<text x="785.07" y="801.81" font-family=""Liberation Sans", sans-serif" font-size="8.4" letter-spacing="-0.3" fill="#2a2a2a" stroke="#2a2a2a" stroke-width="0.3" text-anchor="middle">2,68</text>
<text x="776.07" y="940.6" font-family=""Liberation Sans", sans-serif" font-size="10" fill="#2a2a2a" stroke="#2a2a2a" stroke-width="0.3" text-anchor="middle">2018</text>
<rect x="807.10" y="845.86" width="12" height="78.14" fill="#3a8fd6"/>
<rect x="824.70" y="803.23" width="12.8" height="120.77" fill="#6cb33f"/>
<text x="813.10" y="842.66" font-family=""Liberation Sans", sans-serif" font-size="8.4" letter-spacing="-0.3" fill="#2a2a2a" stroke="#2a2a2a" stroke-width="0.3" text-anchor="middle">1,76</text>
<text x="831.10" y="800.03" font-family=""Liberation Sans", sans-serif" font-size="8.4" letter-spacing="-0.3" fill="#2a2a2a" stroke="#2a2a2a" stroke-width="0.3" text-anchor="middle">2,72</text>
<text x="822.10" y="940.6" font-family=""Liberation Sans", sans-serif" font-size="10" fill="#2a2a2a" stroke="#2a2a2a" stroke-width="0.3" text-anchor="middle">2019</text>
<line x1="338.3" x2="846.5" y1="924" y2="924" stroke="#1e1e1e" stroke-width="2"/>
<line x1="338.30" x2="338.30" y1="920.5" y2="925" stroke="#1e1e1e" stroke-width="1.2"/>
<line x1="384.33" x2="384.33" y1="920.5" y2="925" stroke="#1e1e1e" stroke-width="1.2"/>
<line x1="430.36" x2="430.36" y1="920.5" y2="925" stroke="#1e1e1e" stroke-width="1.2"/>
<line x1="476.39" x2="476.39" y1="920.5" y2="925" stroke="#1e1e1e" stroke-width="1.2"/>
<line x1="522.42" x2="522.42" y1="920.5" y2="925" stroke="#1e1e1e" stroke-width="1.2"/>
<line x1="568.45" x2="568.45" y1="920.5" y2="925" stroke="#1e1e1e" stroke-width="1.2"/>
<line x1="614.48" x2="614.48" y1="920.5" y2="925" stroke="#1e1e1e" stroke-width="1.2"/>
<line x1="660.51" x2="660.51" y1="920.5" y2="925" stroke="#1e1e1e" stroke-width="1.2"/>
<line x1="706.54" x2="706.54" y1="920.5" y2="925" stroke="#1e1e1e" stroke-width="1.2"/>
<line x1="752.57" x2="752.57" y1="920.5" y2="925" stroke="#1e1e1e" stroke-width="1.2"/>
<line x1="798.60" x2="798.60" y1="920.5" y2="925" stroke="#1e1e1e" stroke-width="1.2"/>
<line x1="844.63" x2="844.63" y1="920.5" y2="925" stroke="#1e1e1e" stroke-width="1.2"/>
<text x="322.4" y="794" font-family=""Liberation Sans", sans-serif" font-size="10" fill="#2a2a2a" stroke="#2a2a2a" stroke-width="0.3">3</text>
<text x="322.4" y="839.7" font-family=""Liberation Sans", sans-serif" font-size="10" fill="#2a2a2a" stroke="#2a2a2a" stroke-width="0.3">2</text>
<text x="322.4" y="884.3" font-family=""Liberation Sans", sans-serif" font-size="10" fill="#2a2a2a" stroke="#2a2a2a" stroke-width="0.3">1</text>
<text x="322.4" y="929" font-family=""Liberation Sans", sans-serif" font-size="10" fill="#2a2a2a" stroke="#2a2a2a" stroke-width="0.3">0</text>
<rect x="349.6" y="797.2" width="10" height="9.1" fill="#3a8fd6"/>
<rect x="439.2" y="797.2" width="10.2" height="9.1" fill="#6cb33f"/>
</svg>
<div class="a fit" style="letter-spacing:-0.551px;left:364.9px;top:797.5px;font-size:9.8px;line-height:10px;color:#2a2a2a;-webkit-text-stroke:0.25px #2a2a2a;white-space:nowrap">Neu- und Ausbau</div>
<div class="a fit" style="letter-spacing:-0.019px;left:454.5px;top:797.5px;font-size:9.8px;line-height:10px;color:#2a2a2a;-webkit-text-stroke:0.25px #2a2a2a;white-space:nowrap">Erhalt</div>
<div class="a fit" style="letter-spacing:-0.182px;left:339px;top:768.5px;font-size:9px;line-height:10px;font-weight:bold;color:#1e1e1e;-webkit-text-stroke:0.2px #1e1e1e;white-space:nowrap;transform-origin:0 8px;transform:scaleY(1.1)">Ausgaben für Fahrbahnen an Bundesfernstraßen (in Mrd. €)</div>
<div class="a" style="left:321.8px;top:953.6px;width:526.6px;height:12px;background:#ececec"></div>
<div class="a" style="left:323.4px;top:953.8px;width:107.3px;height:12px;border:0.8px solid #9fbde6"></div>
<div class="a fit" style="letter-spacing:-0.503px;left:324px;top:955px;font-size:9.6px;line-height:10px;color:#2a2a2a;white-space:nowrap">Quelle: BMVI</div>
<svg class="a" style="left:0;top:0" width="1440" height="965">
<rect x="946.5" y="211.8" width="520" height="172.6" fill="none" stroke="#b9c9de" stroke-width="0.8"/>
<line x1="951" x2="1440" y1="235.3" y2="235.3" stroke="#b5b5b5" stroke-width="1.1" stroke-dasharray="1.2 1.4"/>
<line x1="951" x2="1440" y1="254.3" y2="254.3" stroke="#b5b5b5" stroke-width="1.1" stroke-dasharray="1.2 1.4"/>
<line x1="951" x2="1440" y1="273.3" y2="273.3" stroke="#b5b5b5" stroke-width="1.1" stroke-dasharray="1.2 1.4"/>
<line x1="951" x2="1440" y1="292.3" y2="292.3" stroke="#b5b5b5" stroke-width="1.1" stroke-dasharray="1.2 1.4"/>
<line x1="951" x2="1440" y1="311.3" y2="311.3" stroke="#b5b5b5" stroke-width="1.1" stroke-dasharray="1.2 1.4"/>
<line x1="951" x2="1440" y1="330.3" y2="330.3" stroke="#b5b5b5" stroke-width="1.1" stroke-dasharray="1.2 1.4"/>
<line x1="951" x2="1440" y1="349.3" y2="349.3" stroke="#b5b5b5" stroke-width="1.1" stroke-dasharray="1.2 1.4"/>
<rect x="961.40" y="242.0" width="23.8" height="30.5" fill="#6cb33f"/>
<text x="973.30" y="268.4" font-family=""Liberation Sans", sans-serif" font-size="9.6" fill="#fff" stroke="#fff" stroke-width="0.2" text-anchor="middle">6,49</text>
<rect x="1009.05" y="243.0" width="23.8" height="29.5" fill="#6cb33f"/>
<text x="1020.95" y="268.4" font-family=""Liberation Sans", sans-serif" font-size="9.6" fill="#fff" stroke="#fff" stroke-width="0.2" text-anchor="middle">6,42</text>
<rect x="1056.70" y="244.2" width="23.8" height="28.3" fill="#6cb33f"/>
<text x="1068.60" y="268.4" font-family=""Liberation Sans", sans-serif" font-size="9.6" fill="#fff" stroke="#fff" stroke-width="0.2" text-anchor="middle">6,15</text>
<rect x="1104.35" y="244.2" width="23.8" height="28.3" fill="#6cb33f"/>
<text x="1116.25" y="268.4" font-family=""Liberation Sans", sans-serif" font-size="9.6" fill="#fff" stroke="#fff" stroke-width="0.2" text-anchor="middle">6,09</text>
<rect x="1152.00" y="245.3" width="23.8" height="27.2" fill="#6cb33f"/>
<text x="1163.90" y="268.4" font-family=""Liberation Sans", sans-serif" font-size="9.6" fill="#fff" stroke="#fff" stroke-width="0.2" text-anchor="middle">6,01</text>
<rect x="1199.65" y="245.3" width="23.8" height="27.2" fill="#6cb33f"/>
<text x="1211.55" y="268.4" font-family=""Liberation Sans", sans-serif" font-size="9.6" fill="#fff" stroke="#fff" stroke-width="0.2" text-anchor="middle">5,88</text>
<rect x="1247.30" y="246.3" width="23.8" height="26.2" fill="#6cb33f"/>
<text x="1259.20" y="268.4" font-family=""Liberation Sans", sans-serif" font-size="9.6" fill="#fff" stroke="#fff" stroke-width="0.2" text-anchor="middle">5,72</text>
<rect x="1294.95" y="246.3" width="23.8" height="26.2" fill="#6cb33f"/>
<text x="1306.85" y="268.4" font-family=""Liberation Sans", sans-serif" font-size="9.6" fill="#fff" stroke="#fff" stroke-width="0.2" text-anchor="middle">5,6</text>
<rect x="1342.60" y="247.2" width="23.8" height="25.3" fill="#6cb33f"/>
<text x="1354.50" y="268.4" font-family=""Liberation Sans", sans-serif" font-size="9.6" fill="#fff" stroke="#fff" stroke-width="0.2" text-anchor="middle">5,5</text>
<rect x="1390.25" y="247.2" width="23.8" height="25.3" fill="#6cb33f"/>
<text x="1402.15" y="268.4" font-family=""Liberation Sans", sans-serif" font-size="9.6" fill="#fff" stroke="#fff" stroke-width="0.2" text-anchor="middle">5,5</text>
<rect x="1437.90" y="247.2" width="23.8" height="25.3" fill="#6cb33f"/>
<text x="1449.80" y="268.4" font-family=""Liberation Sans", sans-serif" font-size="9.6" fill="#fff" stroke="#fff" stroke-width="0.2" text-anchor="middle">5,5</text>
<path d="M973.2 297.6 L1020.6 297.6 L1068.5 321.2 L1116.0 316.4 L1163.6 326.1 L1211.2 335.8 L1258.8 335.8 L1306.6 336.0 L1354.0 340.6 L1401.6 355.0 L1449.2 364.6" fill="none" stroke="#2f89d3" stroke-width="3.2" stroke-linejoin="round"/>
<circle cx="973.2" cy="297.6" r="4.6" fill="#fff" stroke="#2f89d3" stroke-width="2.8"/>
<rect x="966.7" y="278.6" width="13" height="25.6" fill="none" stroke="#b3c8e8" stroke-width="0.7"/>
<text x="973.2" y="287.7" font-family=""Liberation Sans", sans-serif" font-size="10" fill="#2a2a2a" stroke="#2a2a2a" stroke-width="0.3" text-anchor="middle">5</text>
<circle cx="1020.6" cy="297.6" r="4.6" fill="#fff" stroke="#2f89d3" stroke-width="2.8"/>
<rect x="1014.1" y="278.6" width="13" height="25.6" fill="none" stroke="#b3c8e8" stroke-width="0.7"/>
<text x="1020.6" y="287.7" font-family=""Liberation Sans", sans-serif" font-size="10" fill="#2a2a2a" stroke="#2a2a2a" stroke-width="0.3" text-anchor="middle">5</text>
<circle cx="1068.5" cy="321.2" r="4.6" fill="#fff" stroke="#2f89d3" stroke-width="2.8"/>
<rect x="1062.0" y="302.2" width="13" height="25.6" fill="none" stroke="#b3c8e8" stroke-width="0.7"/>
<text x="1068.5" y="311.3" font-family=""Liberation Sans", sans-serif" font-size="10" fill="#2a2a2a" stroke="#2a2a2a" stroke-width="0.3" text-anchor="middle">10</text>
<circle cx="1116.0" cy="316.4" r="4.6" fill="#fff" stroke="#2f89d3" stroke-width="2.8"/>
<rect x="1109.5" y="297.4" width="13" height="25.6" fill="none" stroke="#b3c8e8" stroke-width="0.7"/>
<text x="1116.0" y="306.5" font-family=""Liberation Sans", sans-serif" font-size="10" fill="#2a2a2a" stroke="#2a2a2a" stroke-width="0.3" text-anchor="middle">9</text>
<circle cx="1163.6" cy="326.1" r="4.6" fill="#fff" stroke="#2f89d3" stroke-width="2.8"/>
<rect x="1157.1" y="307.1" width="13" height="25.6" fill="none" stroke="#b3c8e8" stroke-width="0.7"/>
<text x="1163.6" y="316.2" font-family=""Liberation Sans", sans-serif" font-size="10" fill="#2a2a2a" stroke="#2a2a2a" stroke-width="0.3" text-anchor="middle">11</text>
<circle cx="1211.2" cy="335.8" r="4.6" fill="#fff" stroke="#2f89d3" stroke-width="2.8"/>
<rect x="1204.7" y="316.8" width="13" height="25.6" fill="none" stroke="#b3c8e8" stroke-width="0.7"/>
<text x="1211.2" y="325.9" font-family=""Liberation Sans", sans-serif" font-size="10" fill="#2a2a2a" stroke="#2a2a2a" stroke-width="0.3" text-anchor="middle">13</text>
<circle cx="1258.8" cy="335.8" r="4.6" fill="#fff" stroke="#2f89d3" stroke-width="2.8"/>
<rect x="1252.3" y="316.8" width="13" height="25.6" fill="none" stroke="#b3c8e8" stroke-width="0.7"/>
<text x="1258.8" y="325.9" font-family=""Liberation Sans", sans-serif" font-size="10" fill="#2a2a2a" stroke="#2a2a2a" stroke-width="0.3" text-anchor="middle">13</text>
<circle cx="1306.6" cy="336.0" r="4.6" fill="#fff" stroke="#2f89d3" stroke-width="2.8"/>
<rect x="1300.1" y="317.0" width="13" height="25.6" fill="none" stroke="#b3c8e8" stroke-width="0.7"/>
<text x="1306.6" y="326.1" font-family=""Liberation Sans", sans-serif" font-size="10" fill="#2a2a2a" stroke="#2a2a2a" stroke-width="0.3" text-anchor="middle">13</text>
<circle cx="1354.0" cy="340.6" r="4.6" fill="#fff" stroke="#2f89d3" stroke-width="2.8"/>
<rect x="1347.5" y="321.6" width="13" height="25.6" fill="none" stroke="#b3c8e8" stroke-width="0.7"/>
<text x="1354.0" y="330.7" font-family=""Liberation Sans", sans-serif" font-size="10" fill="#2a2a2a" stroke="#2a2a2a" stroke-width="0.3" text-anchor="middle">14</text>
<circle cx="1401.6" cy="355.0" r="4.6" fill="#fff" stroke="#2f89d3" stroke-width="2.8"/>
<rect x="1395.1" y="336.0" width="13" height="25.6" fill="none" stroke="#b3c8e8" stroke-width="0.7"/>
<text x="1401.6" y="345.1" font-family=""Liberation Sans", sans-serif" font-size="10" fill="#2a2a2a" stroke="#2a2a2a" stroke-width="0.3" text-anchor="middle">17</text>
<circle cx="1449.2" cy="364.6" r="4.6" fill="#fff" stroke="#2f89d3" stroke-width="2.8"/>
<rect x="1442.7" y="345.6" width="13" height="25.6" fill="none" stroke="#b3c8e8" stroke-width="0.7"/>
<text x="1449.2" y="354.7" font-family=""Liberation Sans", sans-serif" font-size="10" fill="#2a2a2a" stroke="#2a2a2a" stroke-width="0.3" text-anchor="middle">19</text>
<line x1="948" x2="1440" y1="369.8" y2="369.8" stroke="#262626" stroke-width="2"/>
<text x="973.2" y="383.5" font-family=""Liberation Sans", sans-serif" font-size="10" fill="#2a2a2a" stroke="#2a2a2a" stroke-width="0.3" text-anchor="middle">2009</text>
<text x="1020.9" y="383.5" font-family=""Liberation Sans", sans-serif" font-size="10" fill="#2a2a2a" stroke="#2a2a2a" stroke-width="0.3" text-anchor="middle">2010</text>
<text x="1068.5" y="383.5" font-family=""Liberation Sans", sans-serif" font-size="10" fill="#2a2a2a" stroke="#2a2a2a" stroke-width="0.3" text-anchor="middle">2011</text>
<text x="1116.2" y="383.5" font-family=""Liberation Sans", sans-serif" font-size="10" fill="#2a2a2a" stroke="#2a2a2a" stroke-width="0.3" text-anchor="middle">2012</text>
<text x="1163.8" y="383.5" font-family=""Liberation Sans", sans-serif" font-size="10" fill="#2a2a2a" stroke="#2a2a2a" stroke-width="0.3" text-anchor="middle">2013</text>
<text x="1211.5" y="383.5" font-family=""Liberation Sans", sans-serif" font-size="10" fill="#2a2a2a" stroke="#2a2a2a" stroke-width="0.3" text-anchor="middle">2014</text>
<text x="1259.1" y="383.5" font-family=""Liberation Sans", sans-serif" font-size="10" fill="#2a2a2a" stroke="#2a2a2a" stroke-width="0.3" text-anchor="middle">2015</text>
<text x="1306.8" y="383.5" font-family=""Liberation Sans", sans-serif" font-size="10" fill="#2a2a2a" stroke="#2a2a2a" stroke-width="0.3" text-anchor="middle">2016</text>
<text x="1354.4" y="383.5" font-family=""Liberation Sans", sans-serif" font-size="10" fill="#2a2a2a" stroke="#2a2a2a" stroke-width="0.3" text-anchor="middle">2017</text>
<text x="1402.0" y="383.5" font-family=""Liberation Sans", sans-serif" font-size="10" fill="#2a2a2a" stroke="#2a2a2a" stroke-width="0.3" text-anchor="middle">2018</text>
<circle cx="1345.4" cy="302.6" r="3.2" fill="#fff" stroke="#2f89d3" stroke-width="2"/>
<rect x="1414.5" y="298" width="9.5" height="9.1" fill="#6cb33f"/>
</svg>
<div class="a" style="left:1355.2px;top:298px;font-size:9.6px;line-height:10px;color:#2a2a2a;white-space:nowrap">Ranking</div>
<div class="a" style="left:1429.3px;top:298px;font-size:9.6px;line-height:10px;color:#2a2a2a;white-space:nowrap">Pu</div>
<div class="a fit" style="letter-spacing:-0.470px;left:951.7px;top:213.5px;font-size:9.3px;line-height:11px;font-weight:bold;color:#1e1e1e;white-space:nowrap;transform-origin:0 8.6px;transform:scaleY(1.12)">Qualität des deutschen Straßennetzes 2010 - 2019 im internationalen Vergleich</div>
<div class="a" style="left:948.7px;top:403.3px;width:491.3px;height:14.5px;background:#ececec"></div>
<div class="a" style="left:949.7px;top:403.5px;width:125.5px;height:12.5px;border:0.8px solid #9fbde6"></div>
<div class="a" style="left:1277.5px;top:403.5px;width:170px;height:12.5px;border:0.8px solid #b7c6dc"></div>
<div class="a fit" style="letter-spacing:-0.338px;left:950.5px;top:404.5px;font-size:9.6px;line-height:10px;color:#2a2a2a;white-space:nowrap">Quelle: World Economic Forum</div>
<div class="a fit" style="letter-spacing:-0.247px;left:1337px;top:404.5px;font-size:9.6px;line-height:10px;color:#2a2a2a;white-space:nowrap">* Skala von 1(niedrig) bis 7</div>
<svg class="a" style="left:0;top:0" width="1440" height="965"><line x1="271" x2="1440" y1="170.90" y2="170.90" stroke="#8fbaf0" stroke-width="1.4" stroke-opacity="0.68"/><line x1="271" x2="1440" y1="184.59" y2="184.59" stroke="#8fbaf0" stroke-width="1.4" stroke-opacity="0.68"/><line x1="271" x2="1440" y1="198.27" y2="198.27" stroke="#8fbaf0" stroke-width="1.4" stroke-opacity="0.68"/><line x1="271" x2="1440" y1="211.96" y2="211.96" stroke="#8fbaf0" stroke-width="1.4" stroke-opacity="0.68"/><line x1="271" x2="1440" y1="225.64" y2="225.64" stroke="#8fbaf0" stroke-width="1.4" stroke-opacity="0.68"/><line x1="271" x2="1440" y1="239.33" y2="239.33" stroke="#8fbaf0" stroke-width="1.4" stroke-opacity="0.68"/><line x1="271" x2="1440" y1="253.02" y2="253.02" stroke="#8fbaf0" stroke-width="1.4" stroke-opacity="0.68"/><line x1="271" x2="1440" y1="266.70" y2="266.70" stroke="#8fbaf0" stroke-width="1.4" stroke-opacity="0.68"/><line x1="271" x2="1440" y1="280.39" y2="280.39" stroke="#8fbaf0" stroke-width="1.4" stroke-opacity="0.68"/><line x1="271" x2="1440" y1="294.07" y2="294.07" stroke="#8fbaf0" stroke-width="1.4" stroke-opacity="0.68"/><line x1="271" x2="1440" y1="307.76" y2="307.76" stroke="#8fbaf0" stroke-width="1.4" stroke-opacity="0.68"/><line x1="271" x2="1440" y1="321.45" y2="321.45" stroke="#8fbaf0" stroke-width="1.4" stroke-opacity="0.68"/><line x1="271" x2="1440" y1="335.13" y2="335.13" stroke="#8fbaf0" stroke-width="1.4" stroke-opacity="0.68"/><line x1="271" x2="1440" y1="348.82" y2="348.82" stroke="#8fbaf0" stroke-width="1.4" stroke-opacity="0.68"/><line x1="271" x2="1440" y1="362.50" y2="362.50" stroke="#8fbaf0" stroke-width="1.4" stroke-opacity="0.68"/><line x1="271" x2="1440" y1="376.19" y2="376.19" stroke="#8fbaf0" stroke-width="1.4" stroke-opacity="0.68"/><line x1="271" x2="1440" y1="389.88" y2="389.88" stroke="#8fbaf0" stroke-width="1.4" stroke-opacity="0.68"/><line x1="271" x2="1440" y1="403.56" y2="403.56" stroke="#8fbaf0" stroke-width="1.4" stroke-opacity="0.68"/><line x1="271" x2="1440" y1="417.25" y2="417.25" stroke="#8fbaf0" stroke-width="1.4" stroke-opacity="0.68"/><line x1="271" x2="1440" y1="430.93" y2="430.93" stroke="#8fbaf0" stroke-width="1.4" stroke-opacity="0.68"/><line x1="271" x2="1440" y1="444.62" y2="444.62" stroke="#8fbaf0" stroke-width="1.4" stroke-opacity="0.68"/><line x1="271" x2="1440" y1="458.31" y2="458.31" stroke="#8fbaf0" stroke-width="1.4" stroke-opacity="0.68"/><line x1="271" x2="1440" y1="471.99" y2="471.99" stroke="#8fbaf0" stroke-width="1.4" stroke-opacity="0.68"/><line x1="271" x2="1440" y1="485.68" y2="485.68" stroke="#8fbaf0" stroke-width="1.4" stroke-opacity="0.68"/><line x1="271" x2="1440" y1="499.36" y2="499.36" stroke="#8fbaf0" stroke-width="1.4" stroke-opacity="0.68"/><line x1="271" x2="1440" y1="513.05" y2="513.05" stroke="#8fbaf0" stroke-width="1.4" stroke-opacity="0.68"/><line x1="271" x2="1440" y1="526.74" y2="526.74" stroke="#8fbaf0" stroke-width="1.4" stroke-opacity="0.68"/><line x1="271" x2="1440" y1="540.42" y2="540.42" stroke="#8fbaf0" stroke-width="1.4" stroke-opacity="0.68"/><line x1="271" x2="1440" y1="554.11" y2="554.11" stroke="#8fbaf0" stroke-width="1.4" stroke-opacity="0.68"/><line x1="271" x2="1440" y1="567.79" y2="567.79" stroke="#8fbaf0" stroke-width="1.4" stroke-opacity="0.68"/><line x1="271" x2="1440" y1="581.48" y2="581.48" stroke="#8fbaf0" stroke-width="1.4" stroke-opacity="0.68"/><line x1="271" x2="1440" y1="595.17" y2="595.17" stroke="#8fbaf0" stroke-width="1.4" stroke-opacity="0.68"/><line x1="271" x2="1440" y1="608.85" y2="608.85" stroke="#8fbaf0" stroke-width="1.4" stroke-opacity="0.68"/><line x1="271" x2="1440" y1="622.54" y2="622.54" stroke="#8fbaf0" stroke-width="1.4" stroke-opacity="0.68"/><line x1="271" x2="1440" y1="636.22" y2="636.22" stroke="#8fbaf0" stroke-width="1.4" stroke-opacity="0.68"/><line x1="271" x2="1440" y1="649.91" y2="649.91" stroke="#8fbaf0" stroke-width="1.4" stroke-opacity="0.68"/><line x1="271" x2="1440" y1="663.60" y2="663.60" stroke="#8fbaf0" stroke-width="1.4" stroke-opacity="0.68"/><line x1="271" x2="1440" y1="677.28" y2="677.28" stroke="#8fbaf0" stroke-width="1.4" stroke-opacity="0.68"/><line x1="271" x2="1440" y1="690.97" y2="690.97" stroke="#8fbaf0" stroke-width="1.4" stroke-opacity="0.68"/><line x1="271" x2="1440" y1="704.65" y2="704.65" stroke="#8fbaf0" stroke-width="1.4" stroke-opacity="0.68"/><line x1="271" x2="1440" y1="718.34" y2="718.34" stroke="#8fbaf0" stroke-width="1.4" stroke-opacity="0.68"/><line x1="271" x2="1440" y1="732.03" y2="732.03" stroke="#8fbaf0" stroke-width="1.4" stroke-opacity="0.68"/><line x1="271" x2="1440" y1="745.71" y2="745.71" stroke="#8fbaf0" stroke-width="1.4" stroke-opacity="0.68"/><line x1="271" x2="1440" y1="759.40" y2="759.40" stroke="#8fbaf0" stroke-width="1.4" stroke-opacity="0.68"/><line x1="271" x2="1440" y1="773.08" y2="773.08" stroke="#8fbaf0" stroke-width="1.4" stroke-opacity="0.68"/><line x1="271" x2="1440" y1="786.77" y2="786.77" stroke="#8fbaf0" stroke-width="1.4" stroke-opacity="0.68"/><line x1="271" x2="1440" y1="800.46" y2="800.46" stroke="#8fbaf0" stroke-width="1.4" stroke-opacity="0.68"/><line x1="271" x2="1440" y1="814.14" y2="814.14" stroke="#8fbaf0" stroke-width="1.4" stroke-opacity="0.68"/><line x1="271" x2="1440" y1="827.83" y2="827.83" stroke="#8fbaf0" stroke-width="1.4" stroke-opacity="0.68"/><line x1="271" x2="1440" y1="841.51" y2="841.51" stroke="#8fbaf0" stroke-width="1.4" stroke-opacity="0.68"/><line x1="271" x2="1440" y1="855.20" y2="855.20" stroke="#8fbaf0" stroke-width="1.4" stroke-opacity="0.68"/><line x1="271" x2="1440" y1="868.89" y2="868.89" stroke="#8fbaf0" stroke-width="1.4" stroke-opacity="0.68"/><line x1="271" x2="1440" y1="882.57" y2="882.57" stroke="#8fbaf0" stroke-width="1.4" stroke-opacity="0.68"/><line x1="271" x2="1440" y1="896.26" y2="896.26" stroke="#8fbaf0" stroke-width="1.4" stroke-opacity="0.68"/><line x1="271" x2="1440" y1="909.94" y2="909.94" stroke="#8fbaf0" stroke-width="1.4" stroke-opacity="0.68"/><line x1="271" x2="1440" y1="923.63" y2="923.63" stroke="#8fbaf0" stroke-width="1.4" stroke-opacity="0.68"/><line x1="271" x2="1440" y1="937.32" y2="937.32" stroke="#8fbaf0" stroke-width="1.4" stroke-opacity="0.68"/><line x1="271" x2="1440" y1="951.00" y2="951.00" stroke="#8fbaf0" stroke-width="1.4" stroke-opacity="0.68"/><line x1="271" x2="1440" y1="964.69" y2="964.69" stroke="#8fbaf0" stroke-width="1.4" stroke-opacity="0.68"/><line x1="321.5" x2="846.4" y1="170.90" y2="170.90" stroke="#ffa6f8" stroke-width="1.5"/><line x1="948.7" x2="1440" y1="170.90" y2="170.90" stroke="#ffa6f8" stroke-width="1.5"/><line x1="321.5" x2="321.5" y1="170.90" y2="965" stroke="#cc88f6" stroke-width="1.3"/><line x1="482.4" x2="482.4" y1="170.90" y2="965" stroke="#cc88f6" stroke-width="1.3"/><line x1="503.3" x2="503.3" y1="170.90" y2="965" stroke="#cc88f6" stroke-width="1.3"/><line x1="664.5" x2="664.5" y1="170.90" y2="965" stroke="#cc88f6" stroke-width="1.3"/><line x1="685.4" x2="685.4" y1="170.90" y2="965" stroke="#cc88f6" stroke-width="1.3"/><line x1="846.4" x2="846.4" y1="170.90" y2="965" stroke="#cc88f6" stroke-width="1.3"/><line x1="948.7" x2="948.7" y1="170.90" y2="965" stroke="#cc88f6" stroke-width="1.3"/><line x1="1109.5" x2="1109.5" y1="170.90" y2="965" stroke="#cc88f6" stroke-width="1.3"/><line x1="1130.5" x2="1130.5" y1="170.90" y2="965" stroke="#cc88f6" stroke-width="1.3"/><line x1="1291.4" x2="1291.4" y1="170.90" y2="965" stroke="#cc88f6" stroke-width="1.3"/><line x1="1312.5" x2="1312.5" y1="170.90" y2="965" stroke="#cc88f6" stroke-width="1.3"/><line x1="897.5" x2="897.5" y1="126" y2="965" stroke="#7a7a7a" stroke-width="1.2"/></svg>
<div class="a" style="left:503.6px;top:621.1px;width:161.0px;height:1.8px;background:#e3c934"></div><div class="a" style="left:949.0px;top:525.3px;width:161.0px;height:1.8px;background:#e3c934"></div><div class="a" style="left:949.0px;top:908.5px;width:161.0px;height:1.8px;background:#e3c934"></div><div class="a" style="left:1130.8px;top:867.5px;width:161.0px;height:1.8px;background:#e3c934"></div>
<svg class="a" style="left:1312px;top:592px" width="128" height="373"><path d="M0.4 1 H120.7 L128 8.5 V373 H0.4 Z" fill="#fed300"/><path d="M0.4 1 H120.7 L128 8.5" fill="none" stroke="#b8b18a" stroke-width="0.8"/></svg>
<div class="a" style="left:1315px;top:615px;width:130px;height:350px;border:0.8px solid #c9b550"></div>
<div class="a fit" style="letter-spacing:-0.592px;left:1333.2px;top:610px;font-size:11.8px;line-height:13px;font-weight:bold;color:#1a1a1a;white-space:nowrap;transform-origin:0 10.5px;transform:scaleY(1.1)">FORDERUNGEN</div>
<div class="a" style="left:1333px;top:607px;width:98px;height:14px;border:0.8px solid #c4b560"></div>
<div class="a" style="left:1333px;top:638px;width:120px;height:330px;border:0.8px solid #c4b560"></div>
<div class="a fd" style="left:1348.1px;top:640.2px;font-size:10.2px;line-height:11px;color:#262626;white-space:nowrap;letter-spacing:-0.1px">Strategisches<i> </i>Erhaltungs-</div>
<div class="a fd" style="left:1348.1px;top:653.5px;font-size:10.2px;line-height:11px;color:#262626;white-space:nowrap;letter-spacing:-0.1px">management<i> </i>auf<i> </i>Basis<i> </i>von</div>
<div class="a fd" style="left:1348.1px;top:666.8px;font-size:10.2px;line-height:11px;color:#262626;white-space:nowrap;letter-spacing:-0.1px">Infrastrukturberichten</div>
<div class="a fd" style="left:1348.1px;top:684.2px;font-size:10.2px;line-height:11px;color:#262626;white-space:nowrap;letter-spacing:-0.1px">Intelligentes<i> </i>Erhaltungs-</div>
<div class="a fd" style="left:1348.1px;top:697.5px;font-size:10.2px;line-height:11px;color:#262626;white-space:nowrap;letter-spacing:-0.1px">management<i> </i>unter<i> </i>Einsatz</div>
<div class="a fd" style="left:1348.1px;top:710.8px;font-size:10.2px;line-height:11px;color:#262626;white-space:nowrap;letter-spacing:-0.1px">innovativer<i> </i>Produkte<i> </i>und</div>
<div class="a fd" style="left:1348.1px;top:724.1px;font-size:10.2px;line-height:11px;color:#262626;white-space:nowrap;letter-spacing:-0.1px">Methoden</div>
<div class="a fd" style="left:1348.1px;top:741.5px;font-size:10.2px;line-height:11px;color:#262626;white-space:nowrap;letter-spacing:-0.1px">Finanzierungslücken<i> </i>bei</div>
<div class="a fd" style="left:1348.1px;top:754.8px;font-size:10.2px;line-height:11px;color:#262626;white-space:nowrap;letter-spacing:-0.1px">Erhaltungsmaßnahmen</div>
<div class="a fd" style="left:1348.1px;top:768.1px;font-size:10.2px;line-height:11px;color:#262626;white-space:nowrap;letter-spacing:-0.1px">schließen<i> </i>und<i> </i>weitere</div>
<div class="a fd" style="left:1348.1px;top:781.4px;font-size:10.2px;line-height:11px;color:#262626;white-space:nowrap;letter-spacing:-0.1px">de<i> </i>Finanzierung<i> </i>nachhaltig</div>
<div class="a fd" style="left:1348.1px;top:794.7px;font-size:10.2px;line-height:11px;color:#262626;white-space:nowrap;letter-spacing:-0.1px">absichern</div>
<div class="a fd" style="left:1348.1px;top:812.1px;font-size:10.2px;line-height:11px;color:#262626;white-space:nowrap;letter-spacing:-0.1px">Vorhandene<i> </i>Möglichkeiten</div>
<div class="a fd" style="left:1348.1px;top:825.4px;font-size:10.2px;line-height:11px;color:#262626;white-space:nowrap;letter-spacing:-0.1px">der<i> </i>Beschleunigung<i> </i>bei<i> </i>Pla-</div>
<div class="a fd" style="left:1348.1px;top:838.7px;font-size:10.2px;line-height:11px;color:#262626;white-space:nowrap;letter-spacing:-0.1px">nung<i> </i>und<i> </i>Bau<i> </i>nutzen</div>
<div class="a fd" style="left:1348.1px;top:856.1px;font-size:10.2px;line-height:11px;color:#262626;white-space:nowrap;letter-spacing:-0.1px">Bedarfsgerechte<i> </i>Neu-<i> </i>und</div>
<div class="a fd" style="left:1348.1px;top:869.4px;font-size:10.2px;line-height:11px;color:#262626;white-space:nowrap;letter-spacing:-0.1px">Ausbaumaßnahmen<i> </i>für<i> </i>ein</div>
<div class="a fd" style="left:1348.1px;top:882.7px;font-size:10.2px;line-height:11px;color:#262626;white-space:nowrap;letter-spacing:-0.1px">leistungsfähigeres<i> </i>Straßen-</div>
<div class="a fd" style="left:1348.1px;top:896.0px;font-size:10.2px;line-height:11px;color:#262626;white-space:nowrap;letter-spacing:-0.1px">netz</div>
<div class="a fd" style="left:1348.1px;top:913.4px;font-size:10.2px;line-height:11px;color:#262626;white-space:nowrap;letter-spacing:-0.1px">Akzeptanz<i> </i>für<i> </i>temporäre</div>
<div class="a fd" style="left:1348.1px;top:926.7px;font-size:10.2px;line-height:11px;color:#262626;white-space:nowrap;letter-spacing:-0.1px">Engpässe<i> </i>im<i> </i>Straßennetz</div>
<div class="a fd" style="left:1348.1px;top:940.0px;font-size:10.2px;line-height:11px;color:#262626;white-space:nowrap;letter-spacing:-0.1px">durch<i> </i>nutzerorientierte</div>
<div class="a fd" style="left:1348.1px;top:953.3px;font-size:10.2px;line-height:11px;color:#262626;white-space:nowrap;letter-spacing:-0.1px">Kommunikation<i> </i>schaffen</div>
<svg class="a" style="left:1330px;top:630px" width="20" height="335"><circle cx="8.1" cy="15.3" r="5.4" fill="#123c8c"/><path d="M5 15.3 H10.5 M8.2 12.7 L10.8 15.3 L8.2 17.9" fill="none" stroke="#fff" stroke-width="1.3"/><circle cx="8.1" cy="59.3" r="5.4" fill="#123c8c"/><path d="M5 59.3 H10.5 M8.2 56.7 L10.8 59.3 L8.2 61.9" fill="none" stroke="#fff" stroke-width="1.3"/><circle cx="8.1" cy="116.6" r="5.4" fill="#123c8c"/><path d="M5 116.6 H10.5 M8.2 114.0 L10.8 116.6 L8.2 119.2" fill="none" stroke="#fff" stroke-width="1.3"/><circle cx="8.1" cy="187.2" r="5.4" fill="#123c8c"/><path d="M5 187.2 H10.5 M8.2 184.6 L10.8 187.2 L8.2 189.8" fill="none" stroke="#fff" stroke-width="1.3"/><circle cx="8.1" cy="231.2" r="5.4" fill="#123c8c"/><path d="M5 231.2 H10.5 M8.2 228.6 L10.8 231.2 L8.2 233.8" fill="none" stroke="#fff" stroke-width="1.3"/><circle cx="8.1" cy="288.5" r="5.4" fill="#123c8c"/><path d="M5 288.5 H10.5 M8.2 285.9 L10.8 288.5 L8.2 291.1" fill="none" stroke="#fff" stroke-width="1.3"/></svg>
<svg class="a" style="left:1312px;top:592px" width="128" height="373"><line x1="0" x2="128" y1="3.17" y2="3.17" stroke="#a9cdb5" stroke-width="1.3" opacity="0.55"/><line x1="0" x2="128" y1="16.85" y2="16.85" stroke="#a9cdb5" stroke-width="1.3" opacity="0.55"/><line x1="0" x2="128" y1="30.54" y2="30.54" stroke="#a9cdb5" stroke-width="1.3" opacity="0.55"/><line x1="0" x2="128" y1="44.22" y2="44.22" stroke="#a9cdb5" stroke-width="1.3" opacity="0.55"/><line x1="0" x2="128" y1="57.91" y2="57.91" stroke="#a9cdb5" stroke-width="1.3" opacity="0.55"/><line x1="0" x2="128" y1="71.60" y2="71.60" stroke="#a9cdb5" stroke-width="1.3" opacity="0.55"/><line x1="0" x2="128" y1="85.28" y2="85.28" stroke="#a9cdb5" stroke-width="1.3" opacity="0.55"/><line x1="0" x2="128" y1="98.97" y2="98.97" stroke="#a9cdb5" stroke-width="1.3" opacity="0.55"/><line x1="0" x2="128" y1="112.65" y2="112.65" stroke="#a9cdb5" stroke-width="1.3" opacity="0.55"/><line x1="0" x2="128" y1="126.34" y2="126.34" stroke="#a9cdb5" stroke-width="1.3" opacity="0.55"/><line x1="0" x2="128" y1="140.03" y2="140.03" stroke="#a9cdb5" stroke-width="1.3" opacity="0.55"/><line x1="0" x2="128" y1="153.71" y2="153.71" stroke="#a9cdb5" stroke-width="1.3" opacity="0.55"/><line x1="0" x2="128" y1="167.40" y2="167.40" stroke="#a9cdb5" stroke-width="1.3" opacity="0.55"/><line x1="0" x2="128" y1="181.08" y2="181.08" stroke="#a9cdb5" stroke-width="1.3" opacity="0.55"/><line x1="0" x2="128" y1="194.77" y2="194.77" stroke="#a9cdb5" stroke-width="1.3" opacity="0.55"/><line x1="0" x2="128" y1="208.46" y2="208.46" stroke="#a9cdb5" stroke-width="1.3" opacity="0.55"/><line x1="0" x2="128" y1="222.14" y2="222.14" stroke="#a9cdb5" stroke-width="1.3" opacity="0.55"/><line x1="0" x2="128" y1="235.83" y2="235.83" stroke="#a9cdb5" stroke-width="1.3" opacity="0.55"/><line x1="0" x2="128" y1="249.51" y2="249.51" stroke="#a9cdb5" stroke-width="1.3" opacity="0.55"/><line x1="0" x2="128" y1="263.20" y2="263.20" stroke="#a9cdb5" stroke-width="1.3" opacity="0.55"/><line x1="0" x2="128" y1="276.89" y2="276.89" stroke="#a9cdb5" stroke-width="1.3" opacity="0.55"/><line x1="0" x2="128" y1="290.57" y2="290.57" stroke="#a9cdb5" stroke-width="1.3" opacity="0.55"/><line x1="0" x2="128" y1="304.26" y2="304.26" stroke="#a9cdb5" stroke-width="1.3" opacity="0.55"/><line x1="0" x2="128" y1="317.94" y2="317.94" stroke="#a9cdb5" stroke-width="1.3" opacity="0.55"/><line x1="0" x2="128" y1="331.63" y2="331.63" stroke="#a9cdb5" stroke-width="1.3" opacity="0.55"/><line x1="0" x2="128" y1="345.32" y2="345.32" stroke="#a9cdb5" stroke-width="1.3" opacity="0.55"/><line x1="0" x2="128" y1="359.00" y2="359.00" stroke="#a9cdb5" stroke-width="1.3" opacity="0.55"/><line x1="0" x2="128" y1="372.69" y2="372.69" stroke="#a9cdb5" stroke-width="1.3" opacity="0.55"/><line x1="0.6" x2="0.6" y1="0" y2="373" stroke="#cc88f6" stroke-width="1.3"/></svg>
<div id="title" class="a"></div>
<div class="a" style="left:0;top:4.5px;width:9px;height:9px;border-radius:50%;background:#fe5f57"></div>
<div class="a" style="left:3px;top:7.5px;width:3px;height:3px;border-radius:50%;background:#7e1d17"></div>
<div class="a" style="left:15px;top:4.5px;width:9.5px;height:9.5px;border-radius:50%;background:#febc2e"></div>
<div class="a" style="left:30.5px;top:4.5px;width:9.5px;height:9.5px;border-radius:50%;background:#28c840"></div>
<svg class="a" style="left:52px;top:3px" width="16" height="13" viewBox="0 0 16 13"><path d="M8 0 L16 6.5 L14 6.5 L14 13 L10 13 L10 9 L6 9 L6 13 L2 13 L2 6.5 L0 6.5 Z" fill="#c9c9c9"/></svg>
<div class="a ui fit" style="letter-spacing:-0.490px;left:611px;top:1.5px;font-size:11px;line-height:14px;color:#d8d8d8;white-space:nowrap">Adobe InDesign 2022</div>
<svg class="a" style="left:1299px;top:2px" width="15" height="14" viewBox="0 0 15 14"><path d="M4.5 5 H2 V13 H13 V5 H10.5" fill="none" stroke="#cfcfcf" stroke-width="1.3"/><path d="M7.5 9 V1 M5 3.5 L7.5 1 L10 3.5" fill="none" stroke="#cfcfcf" stroke-width="1.3"/></svg>
<div class="a" style="left:1323px;top:2px;width:1px;height:16px;background:#3d3d3d"></div>
<div class="a ui fit" style="letter-spacing:-0.859px;left:1333.4px;top:2px;font-size:11px;line-height:14px;font-weight:bold;color:#dedede;white-space:nowrap">Grundlagen</div>
<svg class="a" style="left:1394px;top:7px" width="8" height="6"><path d="M1 1 L4 4 L7 1" fill="none" stroke="#cfcfcf" stroke-width="1.2"/></svg>
<div class="a" style="left:1412px;top:2px;width:1px;height:16px;background:#3d3d3d"></div>
<div class="a" style="left:1418px;top:2px;width:30px;height:16px;border:1px solid #3a3a3a;border-radius:2px;background:#4a4a4a"></div>
<svg class="a" style="left:1421px;top:4px" width="14" height="12"><circle cx="6" cy="5" r="3.2" fill="none" stroke="#3b8bf0" stroke-width="1.5"/><path d="M3.5 7.5 L1 10.5" stroke="#3b8bf0" stroke-width="1.6"/><path d="M10 6 L13 6 L11.5 8 Z" fill="#3b8bf0"/></svg>
<div id="ctrl" class="a"></div>
<svg class="a" style="left:13px;top:35px" width="21" height="21" viewBox="0 0 21 21"><rect x="1.0" y="1.0" width="5" height="5" fill="none" stroke="#bdbdbd" stroke-width="1"/><rect x="1.0" y="7.5" width="5" height="5" fill="none" stroke="#bdbdbd" stroke-width="1"/><rect x="1.0" y="14.0" width="5" height="5" fill="none" stroke="#bdbdbd" stroke-width="1"/><rect x="7.5" y="1.0" width="5" height="5" fill="none" stroke="#bdbdbd" stroke-width="1"/><rect x="7.5" y="7.5" width="5" height="5" fill="#f0f0f0"/><rect x="7.5" y="14.0" width="5" height="5" fill="none" stroke="#bdbdbd" stroke-width="1"/><rect x="14.0" y="1.0" width="5" height="5" fill="none" stroke="#bdbdbd" stroke-width="1"/><rect x="14.0" y="7.5" width="5" height="5" fill="none" stroke="#bdbdbd" stroke-width="1"/><rect x="14.0" y="14.0" width="5" height="5" fill="none" stroke="#bdbdbd" stroke-width="1"/><path d="M6 3.5 H7.5 M12.5 3.5 H14 M6 10 H7.5 M12.5 10 H14 M6 16.5 H7.5 M12.5 16.5 H14 M3.5 6 V7.5 M3.5 12.5 V14 M10 6 V7.5 M10 12.5 V14 M16.5 6 V7.5 M16.5 12.5 V14" stroke="#bdbdbd" stroke-width="1"/></svg>
<div class="a ui" style="left:42px;top:30px;font-size:10px;line-height:12px;font-weight:bold;color:#e0e0e0">X:</div>
<div class="a ui" style="left:42px;top:50px;font-size:10px;line-height:12px;font-weight:bold;color:#e0e0e0">Y:</div>
<div class="a" style="left:53px;top:28px;width:65px;height:16px;background:#585858;border-radius:2px"></div>
<svg class="a" style="left:55px;top:29px" width="9" height="14"><path d="M1.5 5 L4.5 2 L7.5 5 M1.5 9 L4.5 12 L7.5 9" fill="none" stroke="#bfbfbf" stroke-width="1.1"/></svg>
<div class="a ui" style="left:68px;top:30px;font-size:10px;line-height:12px;color:#8c8c8c">&#8211;24 mm</div>
<div class="a" style="left:53px;top:48px;width:65px;height:16px;background:#585858;border-radius:2px"></div>
<svg class="a" style="left:55px;top:49px" width="9" height="14"><path d="M1.5 5 L4.5 2 L7.5 5 M1.5 9 L4.5 12 L7.5 9" fill="none" stroke="#bfbfbf" stroke-width="1.1"/></svg>
<div class="a ui" style="left:69px;top:50px;font-size:10px;line-height:12px;color:#8c8c8c">74 mm</div>
<div class="a ui" style="left:130px;top:30px;font-size:9px;line-height:12px;font-weight:bold;color:#e0e0e0">B:</div>
<div class="a ui" style="left:129px;top:50px;font-size:9px;line-height:12px;font-weight:bold;color:#e0e0e0">H:</div>
<div class="a" style="left:139px;top:28px;width:66px;height:16px;background:#585858;border-radius:2px"></div>
<svg class="a" style="left:141px;top:29px" width="9" height="14"><path d="M1.5 5 L4.5 2 L7.5 5 M1.5 9 L4.5 12 L7.5 9" fill="none" stroke="#bfbfbf" stroke-width="1.1"/></svg>
<div class="a" style="left:139px;top:48px;width:66px;height:16px;background:#585858;border-radius:2px"></div>
<svg class="a" style="left:141px;top:49px" width="9" height="14"><path d="M1.5 5 L4.5 2 L7.5 5 M1.5 9 L4.5 12 L7.5 9" fill="none" stroke="#bfbfbf" stroke-width="1.1"/></svg>
<svg class="a" style="left:212px;top:39px" width="13" height="14"><g fill="none" stroke="#c4c4c4" stroke-width="1.2"><rect x="3.5" y="0.8" width="4" height="6" rx="2" transform="rotate(-35 5.5 3.8)"/><rect x="5.5" y="7" width="4" height="6" rx="2" transform="rotate(-35 7.5 10)"/><path d="M1.5 1.5 L11.5 12.5"/></g></svg>
<svg class="a" style="left:236px;top:28px" width="14" height="36"><rect x="1" y="1" width="12" height="13" fill="none" stroke="#bdbdbd"/><path d="M3 7.5 H10 M8 5 L10.5 7.5 L8 10" fill="none" stroke="#cfcfcf"/><rect x="1" y="21" width="12" height="13" fill="none" stroke="#bdbdbd"/><path d="M7 23 V31 M4.5 29 L7 31.5 L9.5 29" fill="none" stroke="#cfcfcf"/></svg>
<div class="a" style="left:253px;top:28px;width:63px;height:16px;background:#585858;border-radius:2px"></div>
<svg class="a" style="left:255px;top:29px" width="9" height="14"><path d="M1.5 5 L4.5 2 L7.5 5 M1.5 9 L4.5 12 L7.5 9" fill="none" stroke="#bfbfbf" stroke-width="1.1"/></svg>
<svg class="a" style="left:304px;top:33px" width="9" height="6"><path d="M1 1 L4.5 4.5 L8 1" fill="none" stroke="#cfcfcf" stroke-width="1.2"/></svg>
<div class="a" style="left:253px;top:48px;width:63px;height:16px;background:#585858;border-radius:2px"></div>
<svg class="a" style="left:255px;top:49px" width="9" height="14"><path d="M1.5 5 L4.5 2 L7.5 5 M1.5 9 L4.5 12 L7.5 9" fill="none" stroke="#bfbfbf" stroke-width="1.1"/></svg>
<svg class="a" style="left:304px;top:53px" width="9" height="6"><path d="M1 1 L4.5 4.5 L8 1" fill="none" stroke="#cfcfcf" stroke-width="1.2"/></svg>
<svg class="a" style="left:325px;top:39px" width="13" height="14"><g fill="none" stroke="#c4c4c4" stroke-width="1.2"><rect x="3.5" y="0.8" width="4" height="6" rx="2" transform="rotate(-35 5.5 3.8)"/><rect x="5.5" y="7" width="4" height="6" rx="2" transform="rotate(-35 7.5 10)"/><path d="M1.5 1.5 L11.5 12.5"/></g></svg>
<svg class="a" style="left:344px;top:30px" width="14" height="34"><path d="M2 11 H12 M2 11 L10 3" fill="none" stroke="#cfcfcf" stroke-width="1.2"/><path d="M3 30 L6 23 H12 L9 30 Z" fill="#cfcfcf"/></svg>
<div class="a" style="left:360px;top:28px;width:66px;height:16px;background:#585858;border-radius:2px"></div>
<svg class="a" style="left:362px;top:29px" width="9" height="14"><path d="M1.5 5 L4.5 2 L7.5 5 M1.5 9 L4.5 12 L7.5 9" fill="none" stroke="#bfbfbf" stroke-width="1.1"/></svg>
<svg class="a" style="left:414px;top:33px" width="9" height="6"><path d="M1 1 L4.5 4.5 L8 1" fill="none" stroke="#cfcfcf" stroke-width="1.2"/></svg>
<div class="a" style="left:360px;top:48px;width:66px;height:16px;background:#585858;border-radius:2px"></div>
<svg class="a" style="left:362px;top:49px" width="9" height="14"><path d="M1.5 5 L4.5 2 L7.5 5 M1.5 9 L4.5 12 L7.5 9" fill="none" stroke="#bfbfbf" stroke-width="1.1"/></svg>
<svg class="a" style="left:414px;top:53px" width="9" height="6"><path d="M1 1 L4.5 4.5 L8 1" fill="none" stroke="#cfcfcf" stroke-width="1.2"/></svg>
<svg class="a" style="left:437px;top:28px" width="70" height="36"><g fill="none" stroke="#777" stroke-width="1.3"><path d="M13 7 A5.5 5.5 0 1 1 8 3"/><path d="M27 7 A5.5 5.5 0 1 0 32 3"/><path d="M3 22 L3 32 L8 27 Z M17 22 L17 32 L12 27 Z"/><path d="M22 21 H34 L28 26 Z M22 33 H34 L28 28 Z"/><path d="M46 8 H43 V11 M43 25 V28 H46 M59 8 H62 V11 M62 25 V28 H59"/></g><text x="47.5" y="24" font-family="Liberation Serif" font-size="18" fill="#8a8a8a">P</text></svg>
<svg class="a" style="left:510px;top:28px" width="40" height="36"><g fill="none" stroke="#8d8d8d" stroke-width="1.2"><path d="M7 2 V14 M3 8 H11 M3 8 V13 M11 8 V13 M5 3 L7 1 L9 3"/><path d="M23 8 H36 M25 8 V13 M30 8 V13 M35 8 V13 M30 3 V8"/><path d="M7 21 V33 M3 27 H11 M3 27 V23 M11 27 V23"/><path d="M23 28 H36 M25 28 V33 M30 28 V33 M35 28 V33 M30 23 V28"/></g></svg>
<div class="a" style="left:557px;top:28px;width:15px;height:16px;background:#fff;border:1px solid #999"></div>
<div class="a" style="left:575px;top:28px;width:12px;height:16px;background:#4a4a4a;border:1px solid #3c3c3c;border-radius:2px"></div>
<svg class="a" style="left:578px;top:32px" width="6" height="8"><path d="M1.5 1 L4.5 4 L1.5 7" fill="none" stroke="#d0d0d0" stroke-width="1.1"/></svg>
<div class="a" style="left:557px;top:48px;width:15px;height:16px;background:#fff;border:1px solid #999"></div>
<div class="a" style="left:560px;top:51px;width:9px;height:10px;background:#3c3c3c"></div>
<svg class="a" style="left:557px;top:48px" width="15" height="16"><path d="M1 15 L14 1" stroke="#e8202a" stroke-width="1.6"/></svg>
<div class="a" style="left:575px;top:48px;width:12px;height:16px;background:#4a4a4a;border:1px solid #3c3c3c;border-radius:2px"></div>
<svg class="a" style="left:578px;top:52px" width="6" height="8"><path d="M1.5 1 L4.5 4 L1.5 7" fill="none" stroke="#d0d0d0" stroke-width="1.1"/></svg>
<div class="a" style="left:596px;top:28px;width:66px;height:16px;background:#4d4d4d;border:1px solid #3f3f3f;border-radius:2px"></div>
<svg class="a" style="left:598px;top:29px" width="9" height="14"><path d="M1.5 5 L4.5 2 L7.5 5 M1.5 9 L4.5 12 L7.5 9" fill="none" stroke="#cfcfcf" stroke-width="1.1"/></svg>
<div class="a" style="left:608px;top:29px;width:1px;height:14px;background:#3a3a3a"></div>
<div class="a ui" style="left:612px;top:30px;font-size:9.5px;line-height:12px;color:#e6e6e6">0 Pt</div>
<div class="a" style="left:649px;top:29px;width:1px;height:14px;background:#3a3a3a"></div>
<svg class="a" style="left:651px;top:33px" width="9" height="6"><path d="M1 1 L4.5 4.5 L8 1" fill="none" stroke="#d6d6d6" stroke-width="1.2"/></svg>
<div class="a" style="left:596px;top:48px;width:53px;height:16px;background:#eaeaea;border-radius:2px 0 0 2px"></div>
<div class="a" style="left:600px;top:53px;width:42px;height:6px;background:#000"></div>
<div class="a" style="left:649px;top:48px;width:13px;height:16px;background:#4d4d4d;border:1px solid #3f3f3f"></div>
<svg class="a" style="left:651px;top:53px" width="9" height="6"><path d="M1 1 L4.5 4.5 L8 1" fill="none" stroke="#d6d6d6" stroke-width="1.2"/></svg>
<svg class="a" style="left:670px;top:29px" width="62" height="34"><g fill="none" stroke="#c4c4c4" stroke-width="1.1"><rect x="2" y="2" width="10" height="10" stroke-dasharray="2 1.3"/><rect x="26" y="2" width="10" height="10"/><rect x="2" y="22" width="10" height="10"/><path d="M4 24 L10 30 M10 24 L4 30" stroke-width="0.9"/></g><text x="48" y="12" font-family="Liberation Serif" font-style="italic" font-size="11" fill="#aaa">fx.</text></svg>
<div class="a" style="left:688px;top:48px;width:38px;height:16px;background:#4d4d4d;border:1px solid #3f3f3f;border-radius:2px"></div>
<div class="a ui" style="left:691px;top:50px;font-size:9.5px;line-height:12px;color:#e6e6e6">100 %</div>
<div class="a" style="left:726px;top:48px;width:12px;height:16px;background:#4a4a4a;border:1px solid #3c3c3c;border-radius:2px"></div>
<svg class="a" style="left:729px;top:52px" width="6" height="8"><path d="M1.5 1 L4.5 4 L1.5 7" fill="none" stroke="#d0d0d0" stroke-width="1.1"/></svg>
<div class="a" style="left:742px;top:24px;width:1px;height:44px;background:#4a4a4a"></div>
<div class="a" style="left:749px;top:28px;width:17px;height:16px;background:#3a3a3a;border-radius:2px"></div>
<svg class="a" style="left:750px;top:29px" width="36" height="34"><g fill="none" stroke="#cfcfcf" stroke-width="1"><path d="M3 3 H13 M3 5.5 H13 M3 8 H13 M3 10.5 H13 M3 13 H13"/><rect x="24" y="3" width="10" height="10"/><path d="M26 5 H32 M26 8 H32 M26 11 H32"/><circle cx="8" cy="27" r="3.5" fill="#cfcfcf"/><path d="M2 22 H14 M2 32 H14 M23 22 H35 M23 32 H35"/><rect x="25" y="24" width="8" height="5"/></g></svg>
<div class="a" style="left:790px;top:24px;width:1px;height:44px;background:#4a4a4a"></div>
<svg class="a" style="left:796px;top:29px" width="14" height="14"><g fill="#3a8ff0"><rect x="0" y="0" width="3" height="3"/><rect x="10" y="0" width="3" height="3"/><rect x="0" y="10" width="3" height="3"/><rect x="10" y="10" width="3" height="3"/></g><path d="M1.5 3 V10 M11.5 3 V10 M3 1.5 H10 M3 11.5 H10" stroke="#3a8ff0" stroke-width="1"/></svg>
<div class="a" style="left:812px;top:28px;width:66px;height:16px;background:#4d4d4d;border:1px solid #3f3f3f;border-radius:2px"></div>
<svg class="a" style="left:814px;top:29px" width="9" height="14"><path d="M1.5 5 L4.5 2 L7.5 5 M1.5 9 L4.5 12 L7.5 9" fill="none" stroke="#cfcfcf" stroke-width="1.1"/></svg>
<div class="a" style="left:824px;top:29px;width:1px;height:14px;background:#3a3a3a"></div>
<div class="a ui fit" style="letter-spacing:-0.393px;left:827.5px;top:30px;font-size:9.5px;line-height:12px;color:#e6e6e6;-webkit-text-stroke:0.2px #e6e6e6;white-space:nowrap">4,233 mm</div>
<div class="a" style="left:812px;top:48px;width:53px;height:16px;background:#4d4d4d;border:1px solid #3f3f3f;border-radius:2px 0 0 2px"></div>
<div class="a" style="left:865px;top:48px;width:13px;height:16px;background:#4d4d4d;border:1px solid #3f3f3f"></div>
<svg class="a" style="left:867px;top:53px" width="9" height="6"><path d="M1 1 L4.5 4.5 L8 1" fill="none" stroke="#d6d6d6" stroke-width="1.2"/></svg>
<svg class="a" style="left:891px;top:30px" width="12" height="12"><rect x="1.5" y="1.5" width="8" height="8" fill="none" stroke="#b8b8b8" stroke-width="1.2"/><rect x="3.5" y="3.5" width="4" height="4" fill="#b8b8b8"/></svg>
<div class="a" style="left:914px;top:29px;width:124px;height:15px;background:#e9e9e9"></div>
<div class="a fit" style="letter-spacing:-0.458px;left:919.4px;top:30.5px;font-size:9.2px;line-height:12px;color:#1e1e1e;-webkit-text-stroke:0.2px #1e1e1e;white-space:nowrap">[Einfacher Grafikrahmen]+</div>
<div class="a" style="left:1038px;top:28px;width:14px;height:16px;background:#4a4a4a;border:1px solid #3c3c3c;border-radius:0 2px 2px 0"></div>
<svg class="a" style="left:1040px;top:33px" width="9" height="6"><path d="M1 1 L4.5 4.5 L8 1" fill="none" stroke="#d6d6d6" stroke-width="1.2"/></svg>
<svg class="a" style="left:1012px;top:50px" width="40" height="12"><g fill="none" stroke="#bdbdbd" stroke-width="1"><rect x="2" y="2" width="6" height="6"/><rect x="5" y="4" width="6" height="6" fill="#bdbdbd"/><path d="M12 5 Q15 5 15 8"/><rect x="25" y="2" width="8" height="8"/><path d="M34 9 L38 4"/></g></svg>
<div class="a" style="left:1057px;top:24px;width:1px;height:44px;background:#4a4a4a"></div>
<div id="tabbar" class="a"></div>
<div id="tab" class="a"></div>
<div class="a ui" style="left:60px;top:73px;font-size:11px;line-height:13px;color:#cfcfcf">&#215;</div>
<div class="a ui fit" style="letter-spacing:-0.219px;left:73.5px;top:73.5px;font-size:9.2px;line-height:12px;color:#ececec;-webkit-text-stroke:0.45px #ececec;white-space:nowrap">*Pro Mobilität Broschüre Wegweiser 2025 V11.indd @ 92 % [GPU-Vorschau] [Umgewandelt]</div>
<div id="tools" class="a"></div>
<div class="a" style="left:0;top:69px;width:47px;height:9px;background:#444"></div>
<svg class="a" style="left:1px;top:70px" width="6" height="8"><path d="M4 1 L1.5 4 L4 7" fill="none" stroke="#bbb" stroke-width="1"/></svg>
<div class="a" style="left:13px;top:82px;width:15px;height:2px;background:#464646"></div>
<div class="a" style="left:0;top:90px;width:20px;height:16px;background:#393939"></div>
<svg class="a" style="left:0;top:88px" width="48" height="330" viewBox="0 88 48 330"><g fill="none" stroke="#c6c6c6" stroke-width="1.1"><path d="M5.5 92.5 L15 99 L10 99.8 L5.5 105 Z" fill="#cfcfcf" stroke="none"/><path d="M28.5 92.5 L37 99 L32.5 99.8 L28.5 105 Z"/><path d="M4.5 110.5 H11 L14 113.5 V122 H4.5 Z M11 110.5 V113.5 H14"/><path d="M12 117 L16 121 L12.5 121.5 Z" fill="#c6c6c6"/><path d="M25.5 110 V122 M38.5 110 V122 M27.5 116 H36.5 M29.5 114 L27.5 116 L29.5 118 M34.5 114 L36.5 116 L34.5 118"/><path d="M4 133 V140.5 H16 V133 M7 137 V139 M10 136 V139 M13 137 V139 M6 129 L10 133 M10 130.5 V133 H7.5"/><path d="M27 133 V140.5 H39 V133 M30 137 V139 M33 136 V139 M36 137 V139 M33 133 L37 129 M34.5 129 H37 V131.5"/><path d="M4.5 150.5 H17 M10.8 150.5 V162 M8 162 H13.5 M4.5 150.5 V153 M17 150.5 V153" stroke-width="1.5"/><path d="M16 163 L18 161 V163 Z" fill="#c6c6c6"/><path d="M26.5 162 L37.5 150" stroke-width="1.2"/><path d="M4 181 L6 173 L11 168.5 L15.5 173 L11 178 Z" fill="#c6c6c6" stroke="none"/><path d="M16 181 L18 179 V181 Z" fill="#c6c6c6"/><path d="M26 181 L27 177 L35 169 L38 172 L30 180 Z" fill="#c6c6c6" stroke="none"/><path d="M38 181 L40 179 V181 Z" fill="#c6c6c6"/><rect x="4.5" y="186.5" width="13" height="12"/><path d="M4.5 186.5 L17.5 198.5 M17.5 186.5 L4.5 198.5"/><path d="M17 200 L19 198 V200 Z" fill="#c6c6c6"/><rect x="26.5" y="186.5" width="13" height="12"/><path d="M39 200 L41 198 V200 Z" fill="#c6c6c6"/><circle cx="6.5" cy="210" r="2.2"/><circle cx="6.5" cy="216.5" r="2.2"/><path d="M8.5 211 L17 206 M8.5 215.5 L17 220"/><path d="M28 206 L35 212 L31 213 L28 217 Z" fill="#c6c6c6" stroke="none"/><rect x="30.5" y="207.5" width="9" height="10" stroke-dasharray="2 1"/></g><defs><linearGradient id="gt"><stop offset="0" stop-color="#222"/><stop offset="1" stop-color="#eee"/></linearGradient></defs><g fill="none" stroke="#c6c6c6" stroke-width="1.1"><rect x="4.5" y="225.5" width="12" height="12" fill="url(#gt)"/><rect x="27.5" y="225.5" width="12" height="12" fill="#555" stroke="#bbb"/><path d="M29 227 h2 v2 h-2z M33 227 h2 v2 h-2z M37 227 h2 v2 h-2z M31 229 h2 v2 h-2z M35 229 h2 v2 h-2z M29 231 h2 v2 h-2z M33 231 h2 v2 h-2z M37 231 h2 v2 h-2z M31 233 h2 v2 h-2z M35 233 h2 v2 h-2z" fill="#ccc" stroke="none"/><path d="M4.5 245 H15 V253 L12 256 H4.5 Z M7 248 H12.5 M7 250.5 H12.5"/><path d="M27 257 L34 250 M33 247 L37 251 M35 248 L38 245" stroke-width="1.4"/><path d="M37 256 h3 M37 258 h3" /><path d="M7 271 V265 M9.5 271 V263.5 M12 271 V264 M14.5 271 V266 M5 272 Q6 277 10 277.5 Q14.5 277.5 15.5 272 V268" stroke-width="1.6"/><circle cx="32" cy="268" r="4.5"/><path d="M35.5 271.5 L39.5 275.5" stroke-width="1.6"/></g></svg>
<div class="a" style="left:1px;top:283px;width:26px;height:26px;background:#fff;border:1px solid #aaa"></div>
<div class="a" style="left:15px;top:298px;width:26px;height:26px;background:#fff;border:1px solid #aaa"></div>
<div class="a" style="left:19.5px;top:302.5px;width:17px;height:17px;background:#525252"></div>
<svg class="a" style="left:15px;top:298px" width="26" height="26"><path d="M2 24 L24 2" stroke="#e5212b" stroke-width="2"/></svg>
<svg class="a" style="left:34px;top:283px" width="10" height="10"><path d="M2 3 Q7 2 7 8 M5 6 L7 8.5 L9 6" fill="none" stroke="#bbb" stroke-width="1"/></svg>
<svg class="a" style="left:1px;top:312px" width="12" height="12"><rect x="1" y="1" width="6" height="6" fill="#eee" stroke="#222" stroke-width="0.8"/><rect x="4" y="4" width="6" height="6" fill="#222" stroke="#e5212b" stroke-width="1"/></svg>
<div class="a" style="left:4px;top:330px;width:15px;height:14px;background:#3b3b3b;border-radius:1px"></div>
<svg class="a" style="left:6px;top:332px" width="40" height="12"><rect x="2" y="1" width="7" height="7" fill="none" stroke="#ccc" stroke-width="1.2"/><text x="24" y="9" font-family="Liberation Serif" font-size="11" fill="#ccc">T</text></svg>
<div class="a" style="left:1px;top:349px;width:11px;height:11px;background:#fff"></div>
<div class="a" style="left:16px;top:349px;width:11px;height:11px;background:#555;border:1px solid #777"></div>
<div class="a" style="left:29px;top:348px;width:13px;height:13px;background:#3b3b3b"></div>
<div class="a" style="left:30.5px;top:349.5px;width:10px;height:10px;background:#fff"></div>
<svg class="a" style="left:30px;top:349px" width="11" height="11"><path d="M1 10 L10 1" stroke="#e5212b" stroke-width="1.5"/></svg>
<svg class="a" style="left:3px;top:370px" width="16" height="14"><rect x="3" y="3" width="10" height="7" fill="#999" stroke="#ccc" stroke-width="0.8" stroke-dasharray="1.5 1"/><path d="M14 12 L16 10 V12 Z" fill="#ccc"/></svg>
<div class="a" style="left:0;top:389px;width:20px;height:17px;background:#3b3b3b"></div>
<svg class="a" style="left:3px;top:391px" width="44" height="14"><rect x="1.5" y="1.5" width="11" height="10" fill="none" stroke="#ccc" stroke-width="1"/><rect x="4.5" y="4.5" width="5" height="4" fill="#ccc"/><rect x="24.5" y="1.5" width="11" height="10" fill="none" stroke="#ccc" stroke-width="1"/><path d="M24.5 4 H35.5" stroke="#ccc"/><path d="M36 12 L38 10 V12 Z" fill="#ccc"/></svg>
<div id="hrul" class="a"></div>
<div id="vrul" class="a"></div>
<svg class="a" style="left:0;top:0" width="1440" height="965"><line x1="60.90" x2="60.90" y1="91" y2="103" stroke="#cfcfcf" stroke-width="0.9"/><line x1="63.89" x2="63.89" y1="101" y2="103" stroke="#8a8a8a" stroke-width="0.7"/><line x1="66.88" x2="66.88" y1="101" y2="103" stroke="#8a8a8a" stroke-width="0.7"/><line x1="69.87" x2="69.87" y1="101" y2="103" stroke="#8a8a8a" stroke-width="0.7"/><line x1="72.86" x2="72.86" y1="101" y2="103" stroke="#8a8a8a" stroke-width="0.7"/><line x1="75.85" x2="75.85" y1="99.5" y2="103" stroke="#8a8a8a" stroke-width="0.8"/><line x1="78.84" x2="78.84" y1="101" y2="103" stroke="#8a8a8a" stroke-width="0.7"/><line x1="81.83" x2="81.83" y1="101" y2="103" stroke="#8a8a8a" stroke-width="0.7"/><line x1="84.82" x2="84.82" y1="101" y2="103" stroke="#8a8a8a" stroke-width="0.7"/><line x1="87.81" x2="87.81" y1="101" y2="103" stroke="#8a8a8a" stroke-width="0.7"/><line x1="90.80" x2="90.80" y1="91" y2="103" stroke="#cfcfcf" stroke-width="0.9"/><line x1="93.79" x2="93.79" y1="101" y2="103" stroke="#8a8a8a" stroke-width="0.7"/><line x1="96.78" x2="96.78" y1="101" y2="103" stroke="#8a8a8a" stroke-width="0.7"/><line x1="99.77" x2="99.77" y1="101" y2="103" stroke="#8a8a8a" stroke-width="0.7"/><line x1="102.76" x2="102.76" y1="101" y2="103" stroke="#8a8a8a" stroke-width="0.7"/><line x1="105.75" x2="105.75" y1="99.5" y2="103" stroke="#8a8a8a" stroke-width="0.8"/><line x1="108.74" x2="108.74" y1="101" y2="103" stroke="#8a8a8a" stroke-width="0.7"/><line x1="111.73" x2="111.73" y1="101" y2="103" stroke="#8a8a8a" stroke-width="0.7"/><line x1="114.72" x2="114.72" y1="101" y2="103" stroke="#8a8a8a" stroke-width="0.7"/><line x1="117.71" x2="117.71" y1="101" y2="103" stroke="#8a8a8a" stroke-width="0.7"/><line x1="120.70" x2="120.70" y1="91" y2="103" stroke="#cfcfcf" stroke-width="0.9"/><line x1="123.69" x2="123.69" y1="101" y2="103" stroke="#8a8a8a" stroke-width="0.7"/><line x1="126.68" x2="126.68" y1="101" y2="103" stroke="#8a8a8a" stroke-width="0.7"/><line x1="129.67" x2="129.67" y1="101" y2="103" stroke="#8a8a8a" stroke-width="0.7"/><line x1="132.66" x2="132.66" y1="101" y2="103" stroke="#8a8a8a" stroke-width="0.7"/><line x1="135.65" x2="135.65" y1="99.5" y2="103" stroke="#8a8a8a" stroke-width="0.8"/><line x1="138.64" x2="138.64" y1="101" y2="103" stroke="#8a8a8a" stroke-width="0.7"/><line x1="141.63" x2="141.63" y1="101" y2="103" stroke="#8a8a8a" stroke-width="0.7"/><line x1="144.62" x2="144.62" y1="101" y2="103" stroke="#8a8a8a" stroke-width="0.7"/><line x1="147.61" x2="147.61" y1="101" y2="103" stroke="#8a8a8a" stroke-width="0.7"/><line x1="150.60" x2="150.60" y1="91" y2="103" stroke="#cfcfcf" stroke-width="0.9"/><line x1="153.59" x2="153.59" y1="101" y2="103" stroke="#8a8a8a" stroke-width="0.7"/><line x1="156.58" x2="156.58" y1="101" y2="103" stroke="#8a8a8a" stroke-width="0.7"/><line x1="159.57" x2="159.57" y1="101" y2="103" stroke="#8a8a8a" stroke-width="0.7"/><line x1="162.56" x2="162.56" y1="101" y2="103" stroke="#8a8a8a" stroke-width="0.7"/><line x1="165.55" x2="165.55" y1="99.5" y2="103" stroke="#8a8a8a" stroke-width="0.8"/><line x1="168.54" x2="168.54" y1="101" y2="103" stroke="#8a8a8a" stroke-width="0.7"/><line x1="171.53" x2="171.53" y1="101" y2="103" stroke="#8a8a8a" stroke-width="0.7"/><line x1="174.52" x2="174.52" y1="101" y2="103" stroke="#8a8a8a" stroke-width="0.7"/><line x1="177.51" x2="177.51" y1="101" y2="103" stroke="#8a8a8a" stroke-width="0.7"/><line x1="180.50" x2="180.50" y1="91" y2="103" stroke="#cfcfcf" stroke-width="0.9"/><line x1="183.49" x2="183.49" y1="101" y2="103" stroke="#8a8a8a" stroke-width="0.7"/><line x1="186.48" x2="186.48" y1="101" y2="103" stroke="#8a8a8a" stroke-width="0.7"/><line x1="189.47" x2="189.47" y1="101" y2="103" stroke="#8a8a8a" stroke-width="0.7"/><line x1="192.46" x2="192.46" y1="101" y2="103" stroke="#8a8a8a" stroke-width="0.7"/><line x1="195.45" x2="195.45" y1="99.5" y2="103" stroke="#8a8a8a" stroke-width="0.8"/><line x1="198.44" x2="198.44" y1="101" y2="103" stroke="#8a8a8a" stroke-width="0.7"/><line x1="201.43" x2="201.43" y1="101" y2="103" stroke="#8a8a8a" stroke-width="0.7"/><line x1="204.42" x2="204.42" y1="101" y2="103" stroke="#8a8a8a" stroke-width="0.7"/><line x1="207.41" x2="207.41" y1="101" y2="103" stroke="#8a8a8a" stroke-width="0.7"/><line x1="210.40" x2="210.40" y1="91" y2="103" stroke="#cfcfcf" stroke-width="0.9"/><line x1="213.39" x2="213.39" y1="101" y2="103" stroke="#8a8a8a" stroke-width="0.7"/><line x1="216.38" x2="216.38" y1="101" y2="103" stroke="#8a8a8a" stroke-width="0.7"/><line x1="219.37" x2="219.37" y1="101" y2="103" stroke="#8a8a8a" stroke-width="0.7"/><line x1="222.36" x2="222.36" y1="101" y2="103" stroke="#8a8a8a" stroke-width="0.7"/><line x1="225.35" x2="225.35" y1="99.5" y2="103" stroke="#8a8a8a" stroke-width="0.8"/><line x1="228.34" x2="228.34" y1="101" y2="103" stroke="#8a8a8a" stroke-width="0.7"/><line x1="231.33" x2="231.33" y1="101" y2="103" stroke="#8a8a8a" stroke-width="0.7"/><line x1="234.32" x2="234.32" y1="101" y2="103" stroke="#8a8a8a" stroke-width="0.7"/><line x1="237.31" x2="237.31" y1="101" y2="103" stroke="#8a8a8a" stroke-width="0.7"/><line x1="240.30" x2="240.30" y1="91" y2="103" stroke="#cfcfcf" stroke-width="0.9"/><line x1="243.29" x2="243.29" y1="101" y2="103" stroke="#8a8a8a" stroke-width="0.7"/><line x1="246.28" x2="246.28" y1="101" y2="103" stroke="#8a8a8a" stroke-width="0.7"/><line x1="249.27" x2="249.27" y1="101" y2="103" stroke="#8a8a8a" stroke-width="0.7"/><line x1="252.26" x2="252.26" y1="101" y2="103" stroke="#8a8a8a" stroke-width="0.7"/><line x1="255.25" x2="255.25" y1="99.5" y2="103" stroke="#8a8a8a" stroke-width="0.8"/><line x1="258.24" x2="258.24" y1="101" y2="103" stroke="#8a8a8a" stroke-width="0.7"/><line x1="261.23" x2="261.23" y1="101" y2="103" stroke="#8a8a8a" stroke-width="0.7"/><line x1="264.22" x2="264.22" y1="101" y2="103" stroke="#8a8a8a" stroke-width="0.7"/><line x1="267.21" x2="267.21" y1="101" y2="103" stroke="#8a8a8a" stroke-width="0.7"/><line x1="270.20" x2="270.20" y1="91" y2="103" stroke="#cfcfcf" stroke-width="0.9"/><line x1="273.19" x2="273.19" y1="101" y2="103" stroke="#8a8a8a" stroke-width="0.7"/><line x1="276.18" x2="276.18" y1="101" y2="103" stroke="#8a8a8a" stroke-width="0.7"/><line x1="279.17" x2="279.17" y1="101" y2="103" stroke="#8a8a8a" stroke-width="0.7"/><line x1="282.16" x2="282.16" y1="101" y2="103" stroke="#8a8a8a" stroke-width="0.7"/><line x1="285.15" x2="285.15" y1="99.5" y2="103" stroke="#8a8a8a" stroke-width="0.8"/><line x1="288.14" x2="288.14" y1="101" y2="103" stroke="#8a8a8a" stroke-width="0.7"/><line x1="291.13" x2="291.13" y1="101" y2="103" stroke="#8a8a8a" stroke-width="0.7"/><line x1="294.12" x2="294.12" y1="101" y2="103" stroke="#8a8a8a" stroke-width="0.7"/><line x1="297.11" x2="297.11" y1="101" y2="103" stroke="#8a8a8a" stroke-width="0.7"/><line x1="300.10" x2="300.10" y1="91" y2="103" stroke="#cfcfcf" stroke-width="0.9"/><line x1="303.09" x2="303.09" y1="101" y2="103" stroke="#8a8a8a" stroke-width="0.7"/><line x1="306.08" x2="306.08" y1="101" y2="103" stroke="#8a8a8a" stroke-width="0.7"/><line x1="309.07" x2="309.07" y1="101" y2="103" stroke="#8a8a8a" stroke-width="0.7"/><line x1="312.06" x2="312.06" y1="101" y2="103" stroke="#8a8a8a" stroke-width="0.7"/><line x1="315.05" x2="315.05" y1="99.5" y2="103" stroke="#8a8a8a" stroke-width="0.8"/><line x1="318.04" x2="318.04" y1="101" y2="103" stroke="#8a8a8a" stroke-width="0.7"/><line x1="321.03" x2="321.03" y1="101" y2="103" stroke="#8a8a8a" stroke-width="0.7"/><line x1="324.02" x2="324.02" y1="101" y2="103" stroke="#8a8a8a" stroke-width="0.7"/><line x1="327.01" x2="327.01" y1="101" y2="103" stroke="#8a8a8a" stroke-width="0.7"/><line x1="330.00" x2="330.00" y1="91" y2="103" stroke="#cfcfcf" stroke-width="0.9"/><line x1="332.99" x2="332.99" y1="101" y2="103" stroke="#8a8a8a" stroke-width="0.7"/><line x1="335.98" x2="335.98" y1="101" y2="103" stroke="#8a8a8a" stroke-width="0.7"/><line x1="338.97" x2="338.97" y1="101" y2="103" stroke="#8a8a8a" stroke-width="0.7"/><line x1="341.96" x2="341.96" y1="101" y2="103" stroke="#8a8a8a" stroke-width="0.7"/><line x1="344.95" x2="344.95" y1="99.5" y2="103" stroke="#8a8a8a" stroke-width="0.8"/><line x1="347.94" x2="347.94" y1="101" y2="103" stroke="#8a8a8a" stroke-width="0.7"/><line x1="350.93" x2="350.93" y1="101" y2="103" stroke="#8a8a8a" stroke-width="0.7"/><line x1="353.92" x2="353.92" y1="101" y2="103" stroke="#8a8a8a" stroke-width="0.7"/><line x1="356.91" x2="356.91" y1="101" y2="103" stroke="#8a8a8a" stroke-width="0.7"/><line x1="359.90" x2="359.90" y1="91" y2="103" stroke="#cfcfcf" stroke-width="0.9"/><line x1="362.89" x2="362.89" y1="101" y2="103" stroke="#8a8a8a" stroke-width="0.7"/><line x1="365.88" x2="365.88" y1="101" y2="103" stroke="#8a8a8a" stroke-width="0.7"/><line x1="368.87" x2="368.87" y1="101" y2="103" stroke="#8a8a8a" stroke-width="0.7"/><line x1="371.86" x2="371.86" y1="101" y2="103" stroke="#8a8a8a" stroke-width="0.7"/><line x1="374.85" x2="374.85" y1="99.5" y2="103" stroke="#8a8a8a" stroke-width="0.8"/><line x1="377.84" x2="377.84" y1="101" y2="103" stroke="#8a8a8a" stroke-width="0.7"/><line x1="380.83" x2="380.83" y1="101" y2="103" stroke="#8a8a8a" stroke-width="0.7"/><line x1="383.82" x2="383.82" y1="101" y2="103" stroke="#8a8a8a" stroke-width="0.7"/><line x1="386.81" x2="386.81" y1="101" y2="103" stroke="#8a8a8a" stroke-width="0.7"/><line x1="389.80" x2="389.80" y1="91" y2="103" stroke="#cfcfcf" stroke-width="0.9"/><line x1="392.79" x2="392.79" y1="101" y2="103" stroke="#8a8a8a" stroke-width="0.7"/><line x1="395.78" x2="395.78" y1="101" y2="103" stroke="#8a8a8a" stroke-width="0.7"/><line x1="398.77" x2="398.77" y1="101" y2="103" stroke="#8a8a8a" stroke-width="0.7"/><line x1="401.76" x2="401.76" y1="101" y2="103" stroke="#8a8a8a" stroke-width="0.7"/><line x1="404.75" x2="404.75" y1="99.5" y2="103" stroke="#8a8a8a" stroke-width="0.8"/><line x1="407.74" x2="407.74" y1="101" y2="103" stroke="#8a8a8a" stroke-width="0.7"/><line x1="410.73" x2="410.73" y1="101" y2="103" stroke="#8a8a8a" stroke-width="0.7"/><line x1="413.72" x2="413.72" y1="101" y2="103" stroke="#8a8a8a" stroke-width="0.7"/><line x1="416.71" x2="416.71" y1="101" y2="103" stroke="#8a8a8a" stroke-width="0.7"/><line x1="419.70" x2="419.70" y1="91" y2="103" stroke="#cfcfcf" stroke-width="0.9"/><line x1="422.69" x2="422.69" y1="101" y2="103" stroke="#8a8a8a" stroke-width="0.7"/><line x1="425.68" x2="425.68" y1="101" y2="103" stroke="#8a8a8a" stroke-width="0.7"/><line x1="428.67" x2="428.67" y1="101" y2="103" stroke="#8a8a8a" stroke-width="0.7"/><line x1="431.66" x2="431.66" y1="101" y2="103" stroke="#8a8a8a" stroke-width="0.7"/><line x1="434.65" x2="434.65" y1="99.5" y2="103" stroke="#8a8a8a" stroke-width="0.8"/><line x1="437.64" x2="437.64" y1="101" y2="103" stroke="#8a8a8a" stroke-width="0.7"/><line x1="440.63" x2="440.63" y1="101" y2="103" stroke="#8a8a8a" stroke-width="0.7"/><line x1="443.62" x2="443.62" y1="101" y2="103" stroke="#8a8a8a" stroke-width="0.7"/><line x1="446.61" x2="446.61" y1="101" y2="103" stroke="#8a8a8a" stroke-width="0.7"/><line x1="449.60" x2="449.60" y1="91" y2="103" stroke="#cfcfcf" stroke-width="0.9"/><line x1="452.59" x2="452.59" y1="101" y2="103" stroke="#8a8a8a" stroke-width="0.7"/><line x1="455.58" x2="455.58" y1="101" y2="103" stroke="#8a8a8a" stroke-width="0.7"/><line x1="458.57" x2="458.57" y1="101" y2="103" stroke="#8a8a8a" stroke-width="0.7"/><line x1="461.56" x2="461.56" y1="101" y2="103" stroke="#8a8a8a" stroke-width="0.7"/><line x1="464.55" x2="464.55" y1="99.5" y2="103" stroke="#8a8a8a" stroke-width="0.8"/><line x1="467.54" x2="467.54" y1="101" y2="103" stroke="#8a8a8a" stroke-width="0.7"/><line x1="470.53" x2="470.53" y1="101" y2="103" stroke="#8a8a8a" stroke-width="0.7"/><line x1="473.52" x2="473.52" y1="101" y2="103" stroke="#8a8a8a" stroke-width="0.7"/><line x1="476.51" x2="476.51" y1="101" y2="103" stroke="#8a8a8a" stroke-width="0.7"/><line x1="479.50" x2="479.50" y1="91" y2="103" stroke="#cfcfcf" stroke-width="0.9"/><line x1="482.49" x2="482.49" y1="101" y2="103" stroke="#8a8a8a" stroke-width="0.7"/><line x1="485.48" x2="485.48" y1="101" y2="103" stroke="#8a8a8a" stroke-width="0.7"/><line x1="488.47" x2="488.47" y1="101" y2="103" stroke="#8a8a8a" stroke-width="0.7"/><line x1="491.46" x2="491.46" y1="101" y2="103" stroke="#8a8a8a" stroke-width="0.7"/><line x1="494.45" x2="494.45" y1="99.5" y2="103" stroke="#8a8a8a" stroke-width="0.8"/><line x1="497.44" x2="497.44" y1="101" y2="103" stroke="#8a8a8a" stroke-width="0.7"/><line x1="500.43" x2="500.43" y1="101" y2="103" stroke="#8a8a8a" stroke-width="0.7"/><line x1="503.42" x2="503.42" y1="101" y2="103" stroke="#8a8a8a" stroke-width="0.7"/><line x1="506.41" x2="506.41" y1="101" y2="103" stroke="#8a8a8a" stroke-width="0.7"/><line x1="509.40" x2="509.40" y1="91" y2="103" stroke="#cfcfcf" stroke-width="0.9"/><line x1="512.39" x2="512.39" y1="101" y2="103" stroke="#8a8a8a" stroke-width="0.7"/><line x1="515.38" x2="515.38" y1="101" y2="103" stroke="#8a8a8a" stroke-width="0.7"/><line x1="518.37" x2="518.37" y1="101" y2="103" stroke="#8a8a8a" stroke-width="0.7"/><line x1="521.36" x2="521.36" y1="101" y2="103" stroke="#8a8a8a" stroke-width="0.7"/><line x1="524.35" x2="524.35" y1="99.5" y2="103" stroke="#8a8a8a" stroke-width="0.8"/><line x1="527.34" x2="527.34" y1="101" y2="103" stroke="#8a8a8a" stroke-width="0.7"/><line x1="530.33" x2="530.33" y1="101" y2="103" stroke="#8a8a8a" stroke-width="0.7"/><line x1="533.32" x2="533.32" y1="101" y2="103" stroke="#8a8a8a" stroke-width="0.7"/><line x1="536.31" x2="536.31" y1="101" y2="103" stroke="#8a8a8a" stroke-width="0.7"/><line x1="539.30" x2="539.30" y1="91" y2="103" stroke="#cfcfcf" stroke-width="0.9"/><line x1="542.29" x2="542.29" y1="101" y2="103" stroke="#8a8a8a" stroke-width="0.7"/><line x1="545.28" x2="545.28" y1="101" y2="103" stroke="#8a8a8a" stroke-width="0.7"/><line x1="548.27" x2="548.27" y1="101" y2="103" stroke="#8a8a8a" stroke-width="0.7"/><line x1="551.26" x2="551.26" y1="101" y2="103" stroke="#8a8a8a" stroke-width="0.7"/><line x1="554.25" x2="554.25" y1="99.5" y2="103" stroke="#8a8a8a" stroke-width="0.8"/><line x1="557.24" x2="557.24" y1="101" y2="103" stroke="#8a8a8a" stroke-width="0.7"/><line x1="560.23" x2="560.23" y1="101" y2="103" stroke="#8a8a8a" stroke-width="0.7"/><line x1="563.22" x2="563.22" y1="101" y2="103" stroke="#8a8a8a" stroke-width="0.7"/><line x1="566.21" x2="566.21" y1="101" y2="103" stroke="#8a8a8a" stroke-width="0.7"/><line x1="569.20" x2="569.20" y1="91" y2="103" stroke="#cfcfcf" stroke-width="0.9"/><line x1="572.19" x2="572.19" y1="101" y2="103" stroke="#8a8a8a" stroke-width="0.7"/><line x1="575.18" x2="575.18" y1="101" y2="103" stroke="#8a8a8a" stroke-width="0.7"/><line x1="578.17" x2="578.17" y1="101" y2="103" stroke="#8a8a8a" stroke-width="0.7"/><line x1="581.16" x2="581.16" y1="101" y2="103" stroke="#8a8a8a" stroke-width="0.7"/><line x1="584.15" x2="584.15" y1="99.5" y2="103" stroke="#8a8a8a" stroke-width="0.8"/><line x1="587.14" x2="587.14" y1="101" y2="103" stroke="#8a8a8a" stroke-width="0.7"/><line x1="590.13" x2="590.13" y1="101" y2="103" stroke="#8a8a8a" stroke-width="0.7"/><line x1="593.12" x2="593.12" y1="101" y2="103" stroke="#8a8a8a" stroke-width="0.7"/><line x1="596.11" x2="596.11" y1="101" y2="103" stroke="#8a8a8a" stroke-width="0.7"/><line x1="599.10" x2="599.10" y1="91" y2="103" stroke="#cfcfcf" stroke-width="0.9"/><line x1="602.09" x2="602.09" y1="101" y2="103" stroke="#8a8a8a" stroke-width="0.7"/><line x1="605.08" x2="605.08" y1="101" y2="103" stroke="#8a8a8a" stroke-width="0.7"/><line x1="608.07" x2="608.07" y1="101" y2="103" stroke="#8a8a8a" stroke-width="0.7"/><line x1="611.06" x2="611.06" y1="101" y2="103" stroke="#8a8a8a" stroke-width="0.7"/><line x1="614.05" x2="614.05" y1="99.5" y2="103" stroke="#8a8a8a" stroke-width="0.8"/><line x1="617.04" x2="617.04" y1="101" y2="103" stroke="#8a8a8a" stroke-width="0.7"/><line x1="620.03" x2="620.03" y1="101" y2="103" stroke="#8a8a8a" stroke-width="0.7"/><line x1="623.02" x2="623.02" y1="101" y2="103" stroke="#8a8a8a" stroke-width="0.7"/><line x1="626.01" x2="626.01" y1="101" y2="103" stroke="#8a8a8a" stroke-width="0.7"/><line x1="629.00" x2="629.00" y1="91" y2="103" stroke="#cfcfcf" stroke-width="0.9"/><line x1="631.99" x2="631.99" y1="101" y2="103" stroke="#8a8a8a" stroke-width="0.7"/><line x1="634.98" x2="634.98" y1="101" y2="103" stroke="#8a8a8a" stroke-width="0.7"/><line x1="637.97" x2="637.97" y1="101" y2="103" stroke="#8a8a8a" stroke-width="0.7"/><line x1="640.96" x2="640.96" y1="101" y2="103" stroke="#8a8a8a" stroke-width="0.7"/><line x1="643.95" x2="643.95" y1="99.5" y2="103" stroke="#8a8a8a" stroke-width="0.8"/><line x1="646.94" x2="646.94" y1="101" y2="103" stroke="#8a8a8a" stroke-width="0.7"/><line x1="649.93" x2="649.93" y1="101" y2="103" stroke="#8a8a8a" stroke-width="0.7"/><line x1="652.92" x2="652.92" y1="101" y2="103" stroke="#8a8a8a" stroke-width="0.7"/><line x1="655.91" x2="655.91" y1="101" y2="103" stroke="#8a8a8a" stroke-width="0.7"/><line x1="658.90" x2="658.90" y1="91" y2="103" stroke="#cfcfcf" stroke-width="0.9"/><line x1="661.89" x2="661.89" y1="101" y2="103" stroke="#8a8a8a" stroke-width="0.7"/><line x1="664.88" x2="664.88" y1="101" y2="103" stroke="#8a8a8a" stroke-width="0.7"/><line x1="667.87" x2="667.87" y1="101" y2="103" stroke="#8a8a8a" stroke-width="0.7"/><line x1="670.86" x2="670.86" y1="101" y2="103" stroke="#8a8a8a" stroke-width="0.7"/><line x1="673.85" x2="673.85" y1="99.5" y2="103" stroke="#8a8a8a" stroke-width="0.8"/><line x1="676.84" x2="676.84" y1="101" y2="103" stroke="#8a8a8a" stroke-width="0.7"/><line x1="679.83" x2="679.83" y1="101" y2="103" stroke="#8a8a8a" stroke-width="0.7"/><line x1="682.82" x2="682.82" y1="101" y2="103" stroke="#8a8a8a" stroke-width="0.7"/><line x1="685.81" x2="685.81" y1="101" y2="103" stroke="#8a8a8a" stroke-width="0.7"/><line x1="688.80" x2="688.80" y1="91" y2="103" stroke="#cfcfcf" stroke-width="0.9"/><line x1="691.79" x2="691.79" y1="101" y2="103" stroke="#8a8a8a" stroke-width="0.7"/><line x1="694.78" x2="694.78" y1="101" y2="103" stroke="#8a8a8a" stroke-width="0.7"/><line x1="697.77" x2="697.77" y1="101" y2="103" stroke="#8a8a8a" stroke-width="0.7"/><line x1="700.76" x2="700.76" y1="101" y2="103" stroke="#8a8a8a" stroke-width="0.7"/><line x1="703.75" x2="703.75" y1="99.5" y2="103" stroke="#8a8a8a" stroke-width="0.8"/><line x1="706.74" x2="706.74" y1="101" y2="103" stroke="#8a8a8a" stroke-width="0.7"/><line x1="709.73" x2="709.73" y1="101" y2="103" stroke="#8a8a8a" stroke-width="0.7"/><line x1="712.72" x2="712.72" y1="101" y2="103" stroke="#8a8a8a" stroke-width="0.7"/><line x1="715.71" x2="715.71" y1="101" y2="103" stroke="#8a8a8a" stroke-width="0.7"/><line x1="718.70" x2="718.70" y1="91" y2="103" stroke="#cfcfcf" stroke-width="0.9"/><line x1="721.69" x2="721.69" y1="101" y2="103" stroke="#8a8a8a" stroke-width="0.7"/><line x1="724.68" x2="724.68" y1="101" y2="103" stroke="#8a8a8a" stroke-width="0.7"/><line x1="727.67" x2="727.67" y1="101" y2="103" stroke="#8a8a8a" stroke-width="0.7"/><line x1="730.66" x2="730.66" y1="101" y2="103" stroke="#8a8a8a" stroke-width="0.7"/><line x1="733.65" x2="733.65" y1="99.5" y2="103" stroke="#8a8a8a" stroke-width="0.8"/><line x1="736.64" x2="736.64" y1="101" y2="103" stroke="#8a8a8a" stroke-width="0.7"/><line x1="739.63" x2="739.63" y1="101" y2="103" stroke="#8a8a8a" stroke-width="0.7"/><line x1="742.62" x2="742.62" y1="101" y2="103" stroke="#8a8a8a" stroke-width="0.7"/><line x1="745.61" x2="745.61" y1="101" y2="103" stroke="#8a8a8a" stroke-width="0.7"/><line x1="748.60" x2="748.60" y1="91" y2="103" stroke="#cfcfcf" stroke-width="0.9"/><line x1="751.59" x2="751.59" y1="101" y2="103" stroke="#8a8a8a" stroke-width="0.7"/><line x1="754.58" x2="754.58" y1="101" y2="103" stroke="#8a8a8a" stroke-width="0.7"/><line x1="757.57" x2="757.57" y1="101" y2="103" stroke="#8a8a8a" stroke-width="0.7"/><line x1="760.56" x2="760.56" y1="101" y2="103" stroke="#8a8a8a" stroke-width="0.7"/><line x1="763.55" x2="763.55" y1="99.5" y2="103" stroke="#8a8a8a" stroke-width="0.8"/><line x1="766.54" x2="766.54" y1="101" y2="103" stroke="#8a8a8a" stroke-width="0.7"/><line x1="769.53" x2="769.53" y1="101" y2="103" stroke="#8a8a8a" stroke-width="0.7"/><line x1="772.52" x2="772.52" y1="101" y2="103" stroke="#8a8a8a" stroke-width="0.7"/><line x1="775.51" x2="775.51" y1="101" y2="103" stroke="#8a8a8a" stroke-width="0.7"/><line x1="778.50" x2="778.50" y1="91" y2="103" stroke="#cfcfcf" stroke-width="0.9"/><line x1="781.49" x2="781.49" y1="101" y2="103" stroke="#8a8a8a" stroke-width="0.7"/><line x1="784.48" x2="784.48" y1="101" y2="103" stroke="#8a8a8a" stroke-width="0.7"/><line x1="787.47" x2="787.47" y1="101" y2="103" stroke="#8a8a8a" stroke-width="0.7"/><line x1="790.46" x2="790.46" y1="101" y2="103" stroke="#8a8a8a" stroke-width="0.7"/><line x1="793.45" x2="793.45" y1="99.5" y2="103" stroke="#8a8a8a" stroke-width="0.8"/><line x1="796.44" x2="796.44" y1="101" y2="103" stroke="#8a8a8a" stroke-width="0.7"/><line x1="799.43" x2="799.43" y1="101" y2="103" stroke="#8a8a8a" stroke-width="0.7"/><line x1="802.42" x2="802.42" y1="101" y2="103" stroke="#8a8a8a" stroke-width="0.7"/><line x1="805.41" x2="805.41" y1="101" y2="103" stroke="#8a8a8a" stroke-width="0.7"/><line x1="808.40" x2="808.40" y1="91" y2="103" stroke="#cfcfcf" stroke-width="0.9"/><line x1="811.39" x2="811.39" y1="101" y2="103" stroke="#8a8a8a" stroke-width="0.7"/><line x1="814.38" x2="814.38" y1="101" y2="103" stroke="#8a8a8a" stroke-width="0.7"/><line x1="817.37" x2="817.37" y1="101" y2="103" stroke="#8a8a8a" stroke-width="0.7"/><line x1="820.36" x2="820.36" y1="101" y2="103" stroke="#8a8a8a" stroke-width="0.7"/><line x1="823.35" x2="823.35" y1="99.5" y2="103" stroke="#8a8a8a" stroke-width="0.8"/><line x1="826.34" x2="826.34" y1="101" y2="103" stroke="#8a8a8a" stroke-width="0.7"/><line x1="829.33" x2="829.33" y1="101" y2="103" stroke="#8a8a8a" stroke-width="0.7"/><line x1="832.32" x2="832.32" y1="101" y2="103" stroke="#8a8a8a" stroke-width="0.7"/><line x1="835.31" x2="835.31" y1="101" y2="103" stroke="#8a8a8a" stroke-width="0.7"/><line x1="838.30" x2="838.30" y1="91" y2="103" stroke="#cfcfcf" stroke-width="0.9"/><line x1="841.29" x2="841.29" y1="101" y2="103" stroke="#8a8a8a" stroke-width="0.7"/><line x1="844.28" x2="844.28" y1="101" y2="103" stroke="#8a8a8a" stroke-width="0.7"/><line x1="847.27" x2="847.27" y1="101" y2="103" stroke="#8a8a8a" stroke-width="0.7"/><line x1="850.26" x2="850.26" y1="101" y2="103" stroke="#8a8a8a" stroke-width="0.7"/><line x1="853.25" x2="853.25" y1="99.5" y2="103" stroke="#8a8a8a" stroke-width="0.8"/><line x1="856.24" x2="856.24" y1="101" y2="103" stroke="#8a8a8a" stroke-width="0.7"/><line x1="859.23" x2="859.23" y1="101" y2="103" stroke="#8a8a8a" stroke-width="0.7"/><line x1="862.22" x2="862.22" y1="101" y2="103" stroke="#8a8a8a" stroke-width="0.7"/><line x1="865.21" x2="865.21" y1="101" y2="103" stroke="#8a8a8a" stroke-width="0.7"/><line x1="868.20" x2="868.20" y1="91" y2="103" stroke="#cfcfcf" stroke-width="0.9"/><line x1="871.19" x2="871.19" y1="101" y2="103" stroke="#8a8a8a" stroke-width="0.7"/><line x1="874.18" x2="874.18" y1="101" y2="103" stroke="#8a8a8a" stroke-width="0.7"/><line x1="877.17" x2="877.17" y1="101" y2="103" stroke="#8a8a8a" stroke-width="0.7"/><line x1="880.16" x2="880.16" y1="101" y2="103" stroke="#8a8a8a" stroke-width="0.7"/><line x1="883.15" x2="883.15" y1="99.5" y2="103" stroke="#8a8a8a" stroke-width="0.8"/><line x1="886.14" x2="886.14" y1="101" y2="103" stroke="#8a8a8a" stroke-width="0.7"/><line x1="889.13" x2="889.13" y1="101" y2="103" stroke="#8a8a8a" stroke-width="0.7"/><line x1="892.12" x2="892.12" y1="101" y2="103" stroke="#8a8a8a" stroke-width="0.7"/><line x1="895.11" x2="895.11" y1="101" y2="103" stroke="#8a8a8a" stroke-width="0.7"/><line x1="898.10" x2="898.10" y1="91" y2="103" stroke="#cfcfcf" stroke-width="0.9"/><line x1="901.09" x2="901.09" y1="101" y2="103" stroke="#8a8a8a" stroke-width="0.7"/><line x1="904.08" x2="904.08" y1="101" y2="103" stroke="#8a8a8a" stroke-width="0.7"/><line x1="907.07" x2="907.07" y1="101" y2="103" stroke="#8a8a8a" stroke-width="0.7"/><line x1="910.06" x2="910.06" y1="101" y2="103" stroke="#8a8a8a" stroke-width="0.7"/><line x1="913.05" x2="913.05" y1="99.5" y2="103" stroke="#8a8a8a" stroke-width="0.8"/><line x1="916.04" x2="916.04" y1="101" y2="103" stroke="#8a8a8a" stroke-width="0.7"/><line x1="919.03" x2="919.03" y1="101" y2="103" stroke="#8a8a8a" stroke-width="0.7"/><line x1="922.02" x2="922.02" y1="101" y2="103" stroke="#8a8a8a" stroke-width="0.7"/><line x1="925.01" x2="925.01" y1="101" y2="103" stroke="#8a8a8a" stroke-width="0.7"/><line x1="928.00" x2="928.00" y1="91" y2="103" stroke="#cfcfcf" stroke-width="0.9"/><line x1="930.99" x2="930.99" y1="101" y2="103" stroke="#8a8a8a" stroke-width="0.7"/><line x1="933.98" x2="933.98" y1="101" y2="103" stroke="#8a8a8a" stroke-width="0.7"/><line x1="936.97" x2="936.97" y1="101" y2="103" stroke="#8a8a8a" stroke-width="0.7"/><line x1="939.96" x2="939.96" y1="101" y2="103" stroke="#8a8a8a" stroke-width="0.7"/><line x1="942.95" x2="942.95" y1="99.5" y2="103" stroke="#8a8a8a" stroke-width="0.8"/><line x1="945.94" x2="945.94" y1="101" y2="103" stroke="#8a8a8a" stroke-width="0.7"/><line x1="948.93" x2="948.93" y1="101" y2="103" stroke="#8a8a8a" stroke-width="0.7"/><line x1="951.92" x2="951.92" y1="101" y2="103" stroke="#8a8a8a" stroke-width="0.7"/><line x1="954.91" x2="954.91" y1="101" y2="103" stroke="#8a8a8a" stroke-width="0.7"/><line x1="957.90" x2="957.90" y1="91" y2="103" stroke="#cfcfcf" stroke-width="0.9"/><line x1="960.89" x2="960.89" y1="101" y2="103" stroke="#8a8a8a" stroke-width="0.7"/><line x1="963.88" x2="963.88" y1="101" y2="103" stroke="#8a8a8a" stroke-width="0.7"/><line x1="966.87" x2="966.87" y1="101" y2="103" stroke="#8a8a8a" stroke-width="0.7"/><line x1="969.86" x2="969.86" y1="101" y2="103" stroke="#8a8a8a" stroke-width="0.7"/><line x1="972.85" x2="972.85" y1="99.5" y2="103" stroke="#8a8a8a" stroke-width="0.8"/><line x1="975.84" x2="975.84" y1="101" y2="103" stroke="#8a8a8a" stroke-width="0.7"/><line x1="978.83" x2="978.83" y1="101" y2="103" stroke="#8a8a8a" stroke-width="0.7"/><line x1="981.82" x2="981.82" y1="101" y2="103" stroke="#8a8a8a" stroke-width="0.7"/><line x1="984.81" x2="984.81" y1="101" y2="103" stroke="#8a8a8a" stroke-width="0.7"/><line x1="987.80" x2="987.80" y1="91" y2="103" stroke="#cfcfcf" stroke-width="0.9"/><line x1="990.79" x2="990.79" y1="101" y2="103" stroke="#8a8a8a" stroke-width="0.7"/><line x1="993.78" x2="993.78" y1="101" y2="103" stroke="#8a8a8a" stroke-width="0.7"/><line x1="996.77" x2="996.77" y1="101" y2="103" stroke="#8a8a8a" stroke-width="0.7"/><line x1="999.76" x2="999.76" y1="101" y2="103" stroke="#8a8a8a" stroke-width="0.7"/><line x1="1002.75" x2="1002.75" y1="99.5" y2="103" stroke="#8a8a8a" stroke-width="0.8"/><line x1="1005.74" x2="1005.74" y1="101" y2="103" stroke="#8a8a8a" stroke-width="0.7"/><line x1="1008.73" x2="1008.73" y1="101" y2="103" stroke="#8a8a8a" stroke-width="0.7"/><line x1="1011.72" x2="1011.72" y1="101" y2="103" stroke="#8a8a8a" stroke-width="0.7"/><line x1="1014.71" x2="1014.71" y1="101" y2="103" stroke="#8a8a8a" stroke-width="0.7"/><line x1="1017.70" x2="1017.70" y1="91" y2="103" stroke="#cfcfcf" stroke-width="0.9"/><line x1="1020.69" x2="1020.69" y1="101" y2="103" stroke="#8a8a8a" stroke-width="0.7"/><line x1="1023.68" x2="1023.68" y1="101" y2="103" stroke="#8a8a8a" stroke-width="0.7"/><line x1="1026.67" x2="1026.67" y1="101" y2="103" stroke="#8a8a8a" stroke-width="0.7"/><line x1="1029.66" x2="1029.66" y1="101" y2="103" stroke="#8a8a8a" stroke-width="0.7"/><line x1="1032.65" x2="1032.65" y1="99.5" y2="103" stroke="#8a8a8a" stroke-width="0.8"/><line x1="1035.64" x2="1035.64" y1="101" y2="103" stroke="#8a8a8a" stroke-width="0.7"/><line x1="1038.63" x2="1038.63" y1="101" y2="103" stroke="#8a8a8a" stroke-width="0.7"/><line x1="1041.62" x2="1041.62" y1="101" y2="103" stroke="#8a8a8a" stroke-width="0.7"/><line x1="1044.61" x2="1044.61" y1="101" y2="103" stroke="#8a8a8a" stroke-width="0.7"/><line x1="1047.60" x2="1047.60" y1="91" y2="103" stroke="#cfcfcf" stroke-width="0.9"/><line x1="1050.59" x2="1050.59" y1="101" y2="103" stroke="#8a8a8a" stroke-width="0.7"/><line x1="1053.58" x2="1053.58" y1="101" y2="103" stroke="#8a8a8a" stroke-width="0.7"/><line x1="1056.57" x2="1056.57" y1="101" y2="103" stroke="#8a8a8a" stroke-width="0.7"/><line x1="1059.56" x2="1059.56" y1="101" y2="103" stroke="#8a8a8a" stroke-width="0.7"/><line x1="1062.55" x2="1062.55" y1="99.5" y2="103" stroke="#8a8a8a" stroke-width="0.8"/><line x1="1065.54" x2="1065.54" y1="101" y2="103" stroke="#8a8a8a" stroke-width="0.7"/><line x1="1068.53" x2="1068.53" y1="101" y2="103" stroke="#8a8a8a" stroke-width="0.7"/><line x1="1071.52" x2="1071.52" y1="101" y2="103" stroke="#8a8a8a" stroke-width="0.7"/><line x1="1074.51" x2="1074.51" y1="101" y2="103" stroke="#8a8a8a" stroke-width="0.7"/><line x1="1077.50" x2="1077.50" y1="91" y2="103" stroke="#cfcfcf" stroke-width="0.9"/><line x1="1080.49" x2="1080.49" y1="101" y2="103" stroke="#8a8a8a" stroke-width="0.7"/><line x1="1083.48" x2="1083.48" y1="101" y2="103" stroke="#8a8a8a" stroke-width="0.7"/><line x1="1086.47" x2="1086.47" y1="101" y2="103" stroke="#8a8a8a" stroke-width="0.7"/><line x1="1089.46" x2="1089.46" y1="101" y2="103" stroke="#8a8a8a" stroke-width="0.7"/><line x1="1092.45" x2="1092.45" y1="99.5" y2="103" stroke="#8a8a8a" stroke-width="0.8"/><line x1="1095.44" x2="1095.44" y1="101" y2="103" stroke="#8a8a8a" stroke-width="0.7"/><line x1="1098.43" x2="1098.43" y1="101" y2="103" stroke="#8a8a8a" stroke-width="0.7"/><line x1="1101.42" x2="1101.42" y1="101" y2="103" stroke="#8a8a8a" stroke-width="0.7"/><line x1="1104.41" x2="1104.41" y1="101" y2="103" stroke="#8a8a8a" stroke-width="0.7"/><line x1="1107.40" x2="1107.40" y1="91" y2="103" stroke="#cfcfcf" stroke-width="0.9"/><line x1="1110.39" x2="1110.39" y1="101" y2="103" stroke="#8a8a8a" stroke-width="0.7"/><line x1="1113.38" x2="1113.38" y1="101" y2="103" stroke="#8a8a8a" stroke-width="0.7"/><line x1="1116.37" x2="1116.37" y1="101" y2="103" stroke="#8a8a8a" stroke-width="0.7"/><line x1="1119.36" x2="1119.36" y1="101" y2="103" stroke="#8a8a8a" stroke-width="0.7"/><line x1="1122.35" x2="1122.35" y1="99.5" y2="103" stroke="#8a8a8a" stroke-width="0.8"/><line x1="1125.34" x2="1125.34" y1="101" y2="103" stroke="#8a8a8a" stroke-width="0.7"/><line x1="1128.33" x2="1128.33" y1="101" y2="103" stroke="#8a8a8a" stroke-width="0.7"/><line x1="1131.32" x2="1131.32" y1="101" y2="103" stroke="#8a8a8a" stroke-width="0.7"/><line x1="1134.31" x2="1134.31" y1="101" y2="103" stroke="#8a8a8a" stroke-width="0.7"/><line x1="1137.30" x2="1137.30" y1="91" y2="103" stroke="#cfcfcf" stroke-width="0.9"/><line x1="1140.29" x2="1140.29" y1="101" y2="103" stroke="#8a8a8a" stroke-width="0.7"/><line x1="1143.28" x2="1143.28" y1="101" y2="103" stroke="#8a8a8a" stroke-width="0.7"/><line x1="1146.27" x2="1146.27" y1="101" y2="103" stroke="#8a8a8a" stroke-width="0.7"/><line x1="1149.26" x2="1149.26" y1="101" y2="103" stroke="#8a8a8a" stroke-width="0.7"/><line x1="1152.25" x2="1152.25" y1="99.5" y2="103" stroke="#8a8a8a" stroke-width="0.8"/><line x1="1155.24" x2="1155.24" y1="101" y2="103" stroke="#8a8a8a" stroke-width="0.7"/><line x1="1158.23" x2="1158.23" y1="101" y2="103" stroke="#8a8a8a" stroke-width="0.7"/><line x1="1161.22" x2="1161.22" y1="101" y2="103" stroke="#8a8a8a" stroke-width="0.7"/><line x1="1164.21" x2="1164.21" y1="101" y2="103" stroke="#8a8a8a" stroke-width="0.7"/><line x1="1167.20" x2="1167.20" y1="91" y2="103" stroke="#cfcfcf" stroke-width="0.9"/><line x1="1170.19" x2="1170.19" y1="101" y2="103" stroke="#8a8a8a" stroke-width="0.7"/><line x1="1173.18" x2="1173.18" y1="101" y2="103" stroke="#8a8a8a" stroke-width="0.7"/><line x1="1176.17" x2="1176.17" y1="101" y2="103" stroke="#8a8a8a" stroke-width="0.7"/><line x1="1179.16" x2="1179.16" y1="101" y2="103" stroke="#8a8a8a" stroke-width="0.7"/><line x1="1182.15" x2="1182.15" y1="99.5" y2="103" stroke="#8a8a8a" stroke-width="0.8"/><line x1="1185.14" x2="1185.14" y1="101" y2="103" stroke="#8a8a8a" stroke-width="0.7"/><line x1="1188.13" x2="1188.13" y1="101" y2="103" stroke="#8a8a8a" stroke-width="0.7"/><line x1="1191.12" x2="1191.12" y1="101" y2="103" stroke="#8a8a8a" stroke-width="0.7"/><line x1="1194.11" x2="1194.11" y1="101" y2="103" stroke="#8a8a8a" stroke-width="0.7"/><line x1="1197.10" x2="1197.10" y1="91" y2="103" stroke="#cfcfcf" stroke-width="0.9"/><line x1="1200.09" x2="1200.09" y1="101" y2="103" stroke="#8a8a8a" stroke-width="0.7"/><line x1="1203.08" x2="1203.08" y1="101" y2="103" stroke="#8a8a8a" stroke-width="0.7"/><line x1="1206.07" x2="1206.07" y1="101" y2="103" stroke="#8a8a8a" stroke-width="0.7"/><line x1="1209.06" x2="1209.06" y1="101" y2="103" stroke="#8a8a8a" stroke-width="0.7"/><line x1="1212.05" x2="1212.05" y1="99.5" y2="103" stroke="#8a8a8a" stroke-width="0.8"/><line x1="1215.04" x2="1215.04" y1="101" y2="103" stroke="#8a8a8a" stroke-width="0.7"/><line x1="1218.03" x2="1218.03" y1="101" y2="103" stroke="#8a8a8a" stroke-width="0.7"/><line x1="1221.02" x2="1221.02" y1="101" y2="103" stroke="#8a8a8a" stroke-width="0.7"/><line x1="1224.01" x2="1224.01" y1="101" y2="103" stroke="#8a8a8a" stroke-width="0.7"/><line x1="1227.00" x2="1227.00" y1="91" y2="103" stroke="#cfcfcf" stroke-width="0.9"/><line x1="1229.99" x2="1229.99" y1="101" y2="103" stroke="#8a8a8a" stroke-width="0.7"/><line x1="1232.98" x2="1232.98" y1="101" y2="103" stroke="#8a8a8a" stroke-width="0.7"/><line x1="1235.97" x2="1235.97" y1="101" y2="103" stroke="#8a8a8a" stroke-width="0.7"/><line x1="1238.96" x2="1238.96" y1="101" y2="103" stroke="#8a8a8a" stroke-width="0.7"/><line x1="1241.95" x2="1241.95" y1="99.5" y2="103" stroke="#8a8a8a" stroke-width="0.8"/><line x1="1244.94" x2="1244.94" y1="101" y2="103" stroke="#8a8a8a" stroke-width="0.7"/><line x1="1247.93" x2="1247.93" y1="101" y2="103" stroke="#8a8a8a" stroke-width="0.7"/><line x1="1250.92" x2="1250.92" y1="101" y2="103" stroke="#8a8a8a" stroke-width="0.7"/><line x1="1253.91" x2="1253.91" y1="101" y2="103" stroke="#8a8a8a" stroke-width="0.7"/><line x1="1256.90" x2="1256.90" y1="91" y2="103" stroke="#cfcfcf" stroke-width="0.9"/><line x1="1259.89" x2="1259.89" y1="101" y2="103" stroke="#8a8a8a" stroke-width="0.7"/><line x1="1262.88" x2="1262.88" y1="101" y2="103" stroke="#8a8a8a" stroke-width="0.7"/><line x1="1265.87" x2="1265.87" y1="101" y2="103" stroke="#8a8a8a" stroke-width="0.7"/><line x1="1268.86" x2="1268.86" y1="101" y2="103" stroke="#8a8a8a" stroke-width="0.7"/><line x1="1271.85" x2="1271.85" y1="99.5" y2="103" stroke="#8a8a8a" stroke-width="0.8"/><line x1="1274.84" x2="1274.84" y1="101" y2="103" stroke="#8a8a8a" stroke-width="0.7"/><line x1="1277.83" x2="1277.83" y1="101" y2="103" stroke="#8a8a8a" stroke-width="0.7"/><line x1="1280.82" x2="1280.82" y1="101" y2="103" stroke="#8a8a8a" stroke-width="0.7"/><line x1="1283.81" x2="1283.81" y1="101" y2="103" stroke="#8a8a8a" stroke-width="0.7"/><line x1="1286.80" x2="1286.80" y1="91" y2="103" stroke="#cfcfcf" stroke-width="0.9"/><line x1="1289.79" x2="1289.79" y1="101" y2="103" stroke="#8a8a8a" stroke-width="0.7"/><line x1="1292.78" x2="1292.78" y1="101" y2="103" stroke="#8a8a8a" stroke-width="0.7"/><line x1="1295.77" x2="1295.77" y1="101" y2="103" stroke="#8a8a8a" stroke-width="0.7"/><line x1="1298.76" x2="1298.76" y1="101" y2="103" stroke="#8a8a8a" stroke-width="0.7"/><line x1="1301.75" x2="1301.75" y1="99.5" y2="103" stroke="#8a8a8a" stroke-width="0.8"/><line x1="1304.74" x2="1304.74" y1="101" y2="103" stroke="#8a8a8a" stroke-width="0.7"/><line x1="1307.73" x2="1307.73" y1="101" y2="103" stroke="#8a8a8a" stroke-width="0.7"/><line x1="1310.72" x2="1310.72" y1="101" y2="103" stroke="#8a8a8a" stroke-width="0.7"/><line x1="1313.71" x2="1313.71" y1="101" y2="103" stroke="#8a8a8a" stroke-width="0.7"/><line x1="1316.70" x2="1316.70" y1="91" y2="103" stroke="#cfcfcf" stroke-width="0.9"/><line x1="1319.69" x2="1319.69" y1="101" y2="103" stroke="#8a8a8a" stroke-width="0.7"/><line x1="1322.68" x2="1322.68" y1="101" y2="103" stroke="#8a8a8a" stroke-width="0.7"/><line x1="1325.67" x2="1325.67" y1="101" y2="103" stroke="#8a8a8a" stroke-width="0.7"/><line x1="1328.66" x2="1328.66" y1="101" y2="103" stroke="#8a8a8a" stroke-width="0.7"/><line x1="1331.65" x2="1331.65" y1="99.5" y2="103" stroke="#8a8a8a" stroke-width="0.8"/><line x1="1334.64" x2="1334.64" y1="101" y2="103" stroke="#8a8a8a" stroke-width="0.7"/><line x1="1337.63" x2="1337.63" y1="101" y2="103" stroke="#8a8a8a" stroke-width="0.7"/><line x1="1340.62" x2="1340.62" y1="101" y2="103" stroke="#8a8a8a" stroke-width="0.7"/><line x1="1343.61" x2="1343.61" y1="101" y2="103" stroke="#8a8a8a" stroke-width="0.7"/><line x1="1346.60" x2="1346.60" y1="91" y2="103" stroke="#cfcfcf" stroke-width="0.9"/><line x1="1349.59" x2="1349.59" y1="101" y2="103" stroke="#8a8a8a" stroke-width="0.7"/><line x1="1352.58" x2="1352.58" y1="101" y2="103" stroke="#8a8a8a" stroke-width="0.7"/><line x1="1355.57" x2="1355.57" y1="101" y2="103" stroke="#8a8a8a" stroke-width="0.7"/><line x1="1358.56" x2="1358.56" y1="101" y2="103" stroke="#8a8a8a" stroke-width="0.7"/><line x1="1361.55" x2="1361.55" y1="99.5" y2="103" stroke="#8a8a8a" stroke-width="0.8"/><line x1="1364.54" x2="1364.54" y1="101" y2="103" stroke="#8a8a8a" stroke-width="0.7"/><line x1="1367.53" x2="1367.53" y1="101" y2="103" stroke="#8a8a8a" stroke-width="0.7"/><line x1="1370.52" x2="1370.52" y1="101" y2="103" stroke="#8a8a8a" stroke-width="0.7"/><line x1="1373.51" x2="1373.51" y1="101" y2="103" stroke="#8a8a8a" stroke-width="0.7"/><line x1="1376.50" x2="1376.50" y1="91" y2="103" stroke="#cfcfcf" stroke-width="0.9"/><line x1="1379.49" x2="1379.49" y1="101" y2="103" stroke="#8a8a8a" stroke-width="0.7"/><line x1="1382.48" x2="1382.48" y1="101" y2="103" stroke="#8a8a8a" stroke-width="0.7"/><line x1="1385.47" x2="1385.47" y1="101" y2="103" stroke="#8a8a8a" stroke-width="0.7"/><line x1="1388.46" x2="1388.46" y1="101" y2="103" stroke="#8a8a8a" stroke-width="0.7"/><line x1="1391.45" x2="1391.45" y1="99.5" y2="103" stroke="#8a8a8a" stroke-width="0.8"/><line x1="1394.44" x2="1394.44" y1="101" y2="103" stroke="#8a8a8a" stroke-width="0.7"/><line x1="1397.43" x2="1397.43" y1="101" y2="103" stroke="#8a8a8a" stroke-width="0.7"/><line x1="1400.42" x2="1400.42" y1="101" y2="103" stroke="#8a8a8a" stroke-width="0.7"/><line x1="1403.41" x2="1403.41" y1="101" y2="103" stroke="#8a8a8a" stroke-width="0.7"/><line x1="1406.40" x2="1406.40" y1="91" y2="103" stroke="#cfcfcf" stroke-width="0.9"/><line x1="1409.39" x2="1409.39" y1="101" y2="103" stroke="#8a8a8a" stroke-width="0.7"/><line x1="1412.38" x2="1412.38" y1="101" y2="103" stroke="#8a8a8a" stroke-width="0.7"/><line x1="1415.37" x2="1415.37" y1="101" y2="103" stroke="#8a8a8a" stroke-width="0.7"/><line x1="1418.36" x2="1418.36" y1="101" y2="103" stroke="#8a8a8a" stroke-width="0.7"/><line x1="1421.35" x2="1421.35" y1="99.5" y2="103" stroke="#8a8a8a" stroke-width="0.8"/><line x1="1424.34" x2="1424.34" y1="101" y2="103" stroke="#8a8a8a" stroke-width="0.7"/><line x1="1427.33" x2="1427.33" y1="101" y2="103" stroke="#8a8a8a" stroke-width="0.7"/><line x1="1430.32" x2="1430.32" y1="101" y2="103" stroke="#8a8a8a" stroke-width="0.7"/><line x1="1433.31" x2="1433.31" y1="101" y2="103" stroke="#8a8a8a" stroke-width="0.7"/><line x1="1436.30" x2="1436.30" y1="91" y2="103" stroke="#cfcfcf" stroke-width="0.9"/><line x1="1439.29" x2="1439.29" y1="101" y2="103" stroke="#8a8a8a" stroke-width="0.7"/><line x1="48" x2="1440" y1="103" y2="103" stroke="#9a9a9a" stroke-width="0.6"/><line x1="59" x2="61" y1="105.57" y2="105.57" stroke="#8a8a8a" stroke-width="0.7"/><line x1="59" x2="61" y1="108.56" y2="108.56" stroke="#8a8a8a" stroke-width="0.7"/><line x1="55" x2="61" y1="111.55" y2="111.55" stroke="#9a9a9a" stroke-width="0.8"/><line x1="59" x2="61" y1="114.54" y2="114.54" stroke="#8a8a8a" stroke-width="0.7"/><line x1="59" x2="61" y1="117.53" y2="117.53" stroke="#8a8a8a" stroke-width="0.7"/><line x1="59" x2="61" y1="120.52" y2="120.52" stroke="#8a8a8a" stroke-width="0.7"/><line x1="59" x2="61" y1="123.51" y2="123.51" stroke="#8a8a8a" stroke-width="0.7"/><line x1="49" x2="61" y1="126.50" y2="126.50" stroke="#cfcfcf" stroke-width="0.9"/><line x1="59" x2="61" y1="129.49" y2="129.49" stroke="#8a8a8a" stroke-width="0.7"/><line x1="59" x2="61" y1="132.48" y2="132.48" stroke="#8a8a8a" stroke-width="0.7"/><line x1="59" x2="61" y1="135.47" y2="135.47" stroke="#8a8a8a" stroke-width="0.7"/><line x1="59" x2="61" y1="138.46" y2="138.46" stroke="#8a8a8a" stroke-width="0.7"/><line x1="55" x2="61" y1="141.45" y2="141.45" stroke="#9a9a9a" stroke-width="0.8"/><line x1="59" x2="61" y1="144.44" y2="144.44" stroke="#8a8a8a" stroke-width="0.7"/><line x1="59" x2="61" y1="147.43" y2="147.43" stroke="#8a8a8a" stroke-width="0.7"/><line x1="59" x2="61" y1="150.42" y2="150.42" stroke="#8a8a8a" stroke-width="0.7"/><line x1="59" x2="61" y1="153.41" y2="153.41" stroke="#8a8a8a" stroke-width="0.7"/><line x1="49" x2="61" y1="156.40" y2="156.40" stroke="#cfcfcf" stroke-width="0.9"/><line x1="59" x2="61" y1="159.39" y2="159.39" stroke="#8a8a8a" stroke-width="0.7"/><line x1="59" x2="61" y1="162.38" y2="162.38" stroke="#8a8a8a" stroke-width="0.7"/><line x1="59" x2="61" y1="165.37" y2="165.37" stroke="#8a8a8a" stroke-width="0.7"/><line x1="59" x2="61" y1="168.36" y2="168.36" stroke="#8a8a8a" stroke-width="0.7"/><line x1="55" x2="61" y1="171.35" y2="171.35" stroke="#9a9a9a" stroke-width="0.8"/><line x1="59" x2="61" y1="174.34" y2="174.34" stroke="#8a8a8a" stroke-width="0.7"/><line x1="59" x2="61" y1="177.33" y2="177.33" stroke="#8a8a8a" stroke-width="0.7"/><line x1="59" x2="61" y1="180.32" y2="180.32" stroke="#8a8a8a" stroke-width="0.7"/><line x1="59" x2="61" y1="183.31" y2="183.31" stroke="#8a8a8a" stroke-width="0.7"/><line x1="49" x2="61" y1="186.30" y2="186.30" stroke="#cfcfcf" stroke-width="0.9"/><line x1="59" x2="61" y1="189.29" y2="189.29" stroke="#8a8a8a" stroke-width="0.7"/><line x1="59" x2="61" y1="192.28" y2="192.28" stroke="#8a8a8a" stroke-width="0.7"/><line x1="59" x2="61" y1="195.27" y2="195.27" stroke="#8a8a8a" stroke-width="0.7"/><line x1="59" x2="61" y1="198.26" y2="198.26" stroke="#8a8a8a" stroke-width="0.7"/><line x1="55" x2="61" y1="201.25" y2="201.25" stroke="#9a9a9a" stroke-width="0.8"/><line x1="59" x2="61" y1="204.24" y2="204.24" stroke="#8a8a8a" stroke-width="0.7"/><line x1="59" x2="61" y1="207.23" y2="207.23" stroke="#8a8a8a" stroke-width="0.7"/><line x1="59" x2="61" y1="210.22" y2="210.22" stroke="#8a8a8a" stroke-width="0.7"/><line x1="59" x2="61" y1="213.21" y2="213.21" stroke="#8a8a8a" stroke-width="0.7"/><line x1="49" x2="61" y1="216.20" y2="216.20" stroke="#cfcfcf" stroke-width="0.9"/><line x1="59" x2="61" y1="219.19" y2="219.19" stroke="#8a8a8a" stroke-width="0.7"/><line x1="59" x2="61" y1="222.18" y2="222.18" stroke="#8a8a8a" stroke-width="0.7"/><line x1="59" x2="61" y1="225.17" y2="225.17" stroke="#8a8a8a" stroke-width="0.7"/><line x1="59" x2="61" y1="228.16" y2="228.16" stroke="#8a8a8a" stroke-width="0.7"/><line x1="55" x2="61" y1="231.15" y2="231.15" stroke="#9a9a9a" stroke-width="0.8"/><line x1="59" x2="61" y1="234.14" y2="234.14" stroke="#8a8a8a" stroke-width="0.7"/><line x1="59" x2="61" y1="237.13" y2="237.13" stroke="#8a8a8a" stroke-width="0.7"/><line x1="59" x2="61" y1="240.12" y2="240.12" stroke="#8a8a8a" stroke-width="0.7"/><line x1="59" x2="61" y1="243.11" y2="243.11" stroke="#8a8a8a" stroke-width="0.7"/><line x1="49" x2="61" y1="246.10" y2="246.10" stroke="#cfcfcf" stroke-width="0.9"/><line x1="59" x2="61" y1="249.09" y2="249.09" stroke="#8a8a8a" stroke-width="0.7"/><line x1="59" x2="61" y1="252.08" y2="252.08" stroke="#8a8a8a" stroke-width="0.7"/><line x1="59" x2="61" y1="255.07" y2="255.07" stroke="#8a8a8a" stroke-width="0.7"/><line x1="59" x2="61" y1="258.06" y2="258.06" stroke="#8a8a8a" stroke-width="0.7"/><line x1="55" x2="61" y1="261.05" y2="261.05" stroke="#9a9a9a" stroke-width="0.8"/><line x1="59" x2="61" y1="264.04" y2="264.04" stroke="#8a8a8a" stroke-width="0.7"/><line x1="59" x2="61" y1="267.03" y2="267.03" stroke="#8a8a8a" stroke-width="0.7"/><line x1="59" x2="61" y1="270.02" y2="270.02" stroke="#8a8a8a" stroke-width="0.7"/><line x1="59" x2="61" y1="273.01" y2="273.01" stroke="#8a8a8a" stroke-width="0.7"/><line x1="49" x2="61" y1="276.00" y2="276.00" stroke="#cfcfcf" stroke-width="0.9"/><line x1="59" x2="61" y1="278.99" y2="278.99" stroke="#8a8a8a" stroke-width="0.7"/><line x1="59" x2="61" y1="281.98" y2="281.98" stroke="#8a8a8a" stroke-width="0.7"/><line x1="59" x2="61" y1="284.97" y2="284.97" stroke="#8a8a8a" stroke-width="0.7"/><line x1="59" x2="61" y1="287.96" y2="287.96" stroke="#8a8a8a" stroke-width="0.7"/><line x1="55" x2="61" y1="290.95" y2="290.95" stroke="#9a9a9a" stroke-width="0.8"/><line x1="59" x2="61" y1="293.94" y2="293.94" stroke="#8a8a8a" stroke-width="0.7"/><line x1="59" x2="61" y1="296.93" y2="296.93" stroke="#8a8a8a" stroke-width="0.7"/><line x1="59" x2="61" y1="299.92" y2="299.92" stroke="#8a8a8a" stroke-width="0.7"/><line x1="59" x2="61" y1="302.91" y2="302.91" stroke="#8a8a8a" stroke-width="0.7"/><line x1="49" x2="61" y1="305.90" y2="305.90" stroke="#cfcfcf" stroke-width="0.9"/><line x1="59" x2="61" y1="308.89" y2="308.89" stroke="#8a8a8a" stroke-width="0.7"/><line x1="59" x2="61" y1="311.88" y2="311.88" stroke="#8a8a8a" stroke-width="0.7"/><line x1="59" x2="61" y1="314.87" y2="314.87" stroke="#8a8a8a" stroke-width="0.7"/><line x1="59" x2="61" y1="317.86" y2="317.86" stroke="#8a8a8a" stroke-width="0.7"/><line x1="55" x2="61" y1="320.85" y2="320.85" stroke="#9a9a9a" stroke-width="0.8"/><line x1="59" x2="61" y1="323.84" y2="323.84" stroke="#8a8a8a" stroke-width="0.7"/><line x1="59" x2="61" y1="326.83" y2="326.83" stroke="#8a8a8a" stroke-width="0.7"/><line x1="59" x2="61" y1="329.82" y2="329.82" stroke="#8a8a8a" stroke-width="0.7"/><line x1="59" x2="61" y1="332.81" y2="332.81" stroke="#8a8a8a" stroke-width="0.7"/><line x1="49" x2="61" y1="335.80" y2="335.80" stroke="#cfcfcf" stroke-width="0.9"/><line x1="59" x2="61" y1="338.79" y2="338.79" stroke="#8a8a8a" stroke-width="0.7"/><line x1="59" x2="61" y1="341.78" y2="341.78" stroke="#8a8a8a" stroke-width="0.7"/><line x1="59" x2="61" y1="344.77" y2="344.77" stroke="#8a8a8a" stroke-width="0.7"/><line x1="59" x2="61" y1="347.76" y2="347.76" stroke="#8a8a8a" stroke-width="0.7"/><line x1="55" x2="61" y1="350.75" y2="350.75" stroke="#9a9a9a" stroke-width="0.8"/><line x1="59" x2="61" y1="353.74" y2="353.74" stroke="#8a8a8a" stroke-width="0.7"/><line x1="59" x2="61" y1="356.73" y2="356.73" stroke="#8a8a8a" stroke-width="0.7"/><line x1="59" x2="61" y1="359.72" y2="359.72" stroke="#8a8a8a" stroke-width="0.7"/><line x1="59" x2="61" y1="362.71" y2="362.71" stroke="#8a8a8a" stroke-width="0.7"/><line x1="49" x2="61" y1="365.70" y2="365.70" stroke="#cfcfcf" stroke-width="0.9"/><line x1="59" x2="61" y1="368.69" y2="368.69" stroke="#8a8a8a" stroke-width="0.7"/><line x1="59" x2="61" y1="371.68" y2="371.68" stroke="#8a8a8a" stroke-width="0.7"/><line x1="59" x2="61" y1="374.67" y2="374.67" stroke="#8a8a8a" stroke-width="0.7"/><line x1="59" x2="61" y1="377.66" y2="377.66" stroke="#8a8a8a" stroke-width="0.7"/><line x1="55" x2="61" y1="380.65" y2="380.65" stroke="#9a9a9a" stroke-width="0.8"/><line x1="59" x2="61" y1="383.64" y2="383.64" stroke="#8a8a8a" stroke-width="0.7"/><line x1="59" x2="61" y1="386.63" y2="386.63" stroke="#8a8a8a" stroke-width="0.7"/><line x1="59" x2="61" y1="389.62" y2="389.62" stroke="#8a8a8a" stroke-width="0.7"/><line x1="59" x2="61" y1="392.61" y2="392.61" stroke="#8a8a8a" stroke-width="0.7"/><line x1="49" x2="61" y1="395.60" y2="395.60" stroke="#cfcfcf" stroke-width="0.9"/><line x1="59" x2="61" y1="398.59" y2="398.59" stroke="#8a8a8a" stroke-width="0.7"/><line x1="59" x2="61" y1="401.58" y2="401.58" stroke="#8a8a8a" stroke-width="0.7"/><line x1="59" x2="61" y1="404.57" y2="404.57" stroke="#8a8a8a" stroke-width="0.7"/><line x1="59" x2="61" y1="407.56" y2="407.56" stroke="#8a8a8a" stroke-width="0.7"/><line x1="55" x2="61" y1="410.55" y2="410.55" stroke="#9a9a9a" stroke-width="0.8"/><line x1="59" x2="61" y1="413.54" y2="413.54" stroke="#8a8a8a" stroke-width="0.7"/><line x1="59" x2="61" y1="416.53" y2="416.53" stroke="#8a8a8a" stroke-width="0.7"/><line x1="59" x2="61" y1="419.52" y2="419.52" stroke="#8a8a8a" stroke-width="0.7"/><line x1="59" x2="61" y1="422.51" y2="422.51" stroke="#8a8a8a" stroke-width="0.7"/><line x1="49" x2="61" y1="425.50" y2="425.50" stroke="#cfcfcf" stroke-width="0.9"/><line x1="59" x2="61" y1="428.49" y2="428.49" stroke="#8a8a8a" stroke-width="0.7"/><line x1="59" x2="61" y1="431.48" y2="431.48" stroke="#8a8a8a" stroke-width="0.7"/><line x1="59" x2="61" y1="434.47" y2="434.47" stroke="#8a8a8a" stroke-width="0.7"/><line x1="59" x2="61" y1="437.46" y2="437.46" stroke="#8a8a8a" stroke-width="0.7"/><line x1="55" x2="61" y1="440.45" y2="440.45" stroke="#9a9a9a" stroke-width="0.8"/><line x1="59" x2="61" y1="443.44" y2="443.44" stroke="#8a8a8a" stroke-width="0.7"/><line x1="59" x2="61" y1="446.43" y2="446.43" stroke="#8a8a8a" stroke-width="0.7"/><line x1="59" x2="61" y1="449.42" y2="449.42" stroke="#8a8a8a" stroke-width="0.7"/><line x1="59" x2="61" y1="452.41" y2="452.41" stroke="#8a8a8a" stroke-width="0.7"/><line x1="49" x2="61" y1="455.40" y2="455.40" stroke="#cfcfcf" stroke-width="0.9"/><line x1="59" x2="61" y1="458.39" y2="458.39" stroke="#8a8a8a" stroke-width="0.7"/><line x1="59" x2="61" y1="461.38" y2="461.38" stroke="#8a8a8a" stroke-width="0.7"/><line x1="59" x2="61" y1="464.37" y2="464.37" stroke="#8a8a8a" stroke-width="0.7"/><line x1="59" x2="61" y1="467.36" y2="467.36" stroke="#8a8a8a" stroke-width="0.7"/><line x1="55" x2="61" y1="470.35" y2="470.35" stroke="#9a9a9a" stroke-width="0.8"/><line x1="59" x2="61" y1="473.34" y2="473.34" stroke="#8a8a8a" stroke-width="0.7"/><line x1="59" x2="61" y1="476.33" y2="476.33" stroke="#8a8a8a" stroke-width="0.7"/><line x1="59" x2="61" y1="479.32" y2="479.32" stroke="#8a8a8a" stroke-width="0.7"/><line x1="59" x2="61" y1="482.31" y2="482.31" stroke="#8a8a8a" stroke-width="0.7"/><line x1="49" x2="61" y1="485.30" y2="485.30" stroke="#cfcfcf" stroke-width="0.9"/><line x1="59" x2="61" y1="488.29" y2="488.29" stroke="#8a8a8a" stroke-width="0.7"/><line x1="59" x2="61" y1="491.28" y2="491.28" stroke="#8a8a8a" stroke-width="0.7"/><line x1="59" x2="61" y1="494.27" y2="494.27" stroke="#8a8a8a" stroke-width="0.7"/><line x1="59" x2="61" y1="497.26" y2="497.26" stroke="#8a8a8a" stroke-width="0.7"/><line x1="55" x2="61" y1="500.25" y2="500.25" stroke="#9a9a9a" stroke-width="0.8"/><line x1="59" x2="61" y1="503.24" y2="503.24" stroke="#8a8a8a" stroke-width="0.7"/><line x1="59" x2="61" y1="506.23" y2="506.23" stroke="#8a8a8a" stroke-width="0.7"/><line x1="59" x2="61" y1="509.22" y2="509.22" stroke="#8a8a8a" stroke-width="0.7"/><line x1="59" x2="61" y1="512.21" y2="512.21" stroke="#8a8a8a" stroke-width="0.7"/><line x1="49" x2="61" y1="515.20" y2="515.20" stroke="#cfcfcf" stroke-width="0.9"/><line x1="59" x2="61" y1="518.19" y2="518.19" stroke="#8a8a8a" stroke-width="0.7"/><line x1="59" x2="61" y1="521.18" y2="521.18" stroke="#8a8a8a" stroke-width="0.7"/><line x1="59" x2="61" y1="524.17" y2="524.17" stroke="#8a8a8a" stroke-width="0.7"/><line x1="59" x2="61" y1="527.16" y2="527.16" stroke="#8a8a8a" stroke-width="0.7"/><line x1="55" x2="61" y1="530.15" y2="530.15" stroke="#9a9a9a" stroke-width="0.8"/><line x1="59" x2="61" y1="533.14" y2="533.14" stroke="#8a8a8a" stroke-width="0.7"/><line x1="59" x2="61" y1="536.13" y2="536.13" stroke="#8a8a8a" stroke-width="0.7"/><line x1="59" x2="61" y1="539.12" y2="539.12" stroke="#8a8a8a" stroke-width="0.7"/><line x1="59" x2="61" y1="542.11" y2="542.11" stroke="#8a8a8a" stroke-width="0.7"/><line x1="49" x2="61" y1="545.10" y2="545.10" stroke="#cfcfcf" stroke-width="0.9"/><line x1="59" x2="61" y1="548.09" y2="548.09" stroke="#8a8a8a" stroke-width="0.7"/><line x1="59" x2="61" y1="551.08" y2="551.08" stroke="#8a8a8a" stroke-width="0.7"/><line x1="59" x2="61" y1="554.07" y2="554.07" stroke="#8a8a8a" stroke-width="0.7"/><line x1="59" x2="61" y1="557.06" y2="557.06" stroke="#8a8a8a" stroke-width="0.7"/><line x1="55" x2="61" y1="560.05" y2="560.05" stroke="#9a9a9a" stroke-width="0.8"/><line x1="59" x2="61" y1="563.04" y2="563.04" stroke="#8a8a8a" stroke-width="0.7"/><line x1="59" x2="61" y1="566.03" y2="566.03" stroke="#8a8a8a" stroke-width="0.7"/><line x1="59" x2="61" y1="569.02" y2="569.02" stroke="#8a8a8a" stroke-width="0.7"/><line x1="59" x2="61" y1="572.01" y2="572.01" stroke="#8a8a8a" stroke-width="0.7"/><line x1="49" x2="61" y1="575.00" y2="575.00" stroke="#cfcfcf" stroke-width="0.9"/><line x1="59" x2="61" y1="577.99" y2="577.99" stroke="#8a8a8a" stroke-width="0.7"/><line x1="59" x2="61" y1="580.98" y2="580.98" stroke="#8a8a8a" stroke-width="0.7"/><line x1="59" x2="61" y1="583.97" y2="583.97" stroke="#8a8a8a" stroke-width="0.7"/><line x1="59" x2="61" y1="586.96" y2="586.96" stroke="#8a8a8a" stroke-width="0.7"/><line x1="55" x2="61" y1="589.95" y2="589.95" stroke="#9a9a9a" stroke-width="0.8"/><line x1="59" x2="61" y1="592.94" y2="592.94" stroke="#8a8a8a" stroke-width="0.7"/><line x1="59" x2="61" y1="595.93" y2="595.93" stroke="#8a8a8a" stroke-width="0.7"/><line x1="59" x2="61" y1="598.92" y2="598.92" stroke="#8a8a8a" stroke-width="0.7"/><line x1="59" x2="61" y1="601.91" y2="601.91" stroke="#8a8a8a" stroke-width="0.7"/><line x1="49" x2="61" y1="604.90" y2="604.90" stroke="#cfcfcf" stroke-width="0.9"/><line x1="59" x2="61" y1="607.89" y2="607.89" stroke="#8a8a8a" stroke-width="0.7"/><line x1="59" x2="61" y1="610.88" y2="610.88" stroke="#8a8a8a" stroke-width="0.7"/><line x1="59" x2="61" y1="613.87" y2="613.87" stroke="#8a8a8a" stroke-width="0.7"/><line x1="59" x2="61" y1="616.86" y2="616.86" stroke="#8a8a8a" stroke-width="0.7"/><line x1="55" x2="61" y1="619.85" y2="619.85" stroke="#9a9a9a" stroke-width="0.8"/><line x1="59" x2="61" y1="622.84" y2="622.84" stroke="#8a8a8a" stroke-width="0.7"/><line x1="59" x2="61" y1="625.83" y2="625.83" stroke="#8a8a8a" stroke-width="0.7"/><line x1="59" x2="61" y1="628.82" y2="628.82" stroke="#8a8a8a" stroke-width="0.7"/><line x1="59" x2="61" y1="631.81" y2="631.81" stroke="#8a8a8a" stroke-width="0.7"/><line x1="49" x2="61" y1="634.80" y2="634.80" stroke="#cfcfcf" stroke-width="0.9"/><line x1="59" x2="61" y1="637.79" y2="637.79" stroke="#8a8a8a" stroke-width="0.7"/><line x1="59" x2="61" y1="640.78" y2="640.78" stroke="#8a8a8a" stroke-width="0.7"/><line x1="59" x2="61" y1="643.77" y2="643.77" stroke="#8a8a8a" stroke-width="0.7"/><line x1="59" x2="61" y1="646.76" y2="646.76" stroke="#8a8a8a" stroke-width="0.7"/><line x1="55" x2="61" y1="649.75" y2="649.75" stroke="#9a9a9a" stroke-width="0.8"/><line x1="59" x2="61" y1="652.74" y2="652.74" stroke="#8a8a8a" stroke-width="0.7"/><line x1="59" x2="61" y1="655.73" y2="655.73" stroke="#8a8a8a" stroke-width="0.7"/><line x1="59" x2="61" y1="658.72" y2="658.72" stroke="#8a8a8a" stroke-width="0.7"/><line x1="59" x2="61" y1="661.71" y2="661.71" stroke="#8a8a8a" stroke-width="0.7"/><line x1="49" x2="61" y1="664.70" y2="664.70" stroke="#cfcfcf" stroke-width="0.9"/><line x1="59" x2="61" y1="667.69" y2="667.69" stroke="#8a8a8a" stroke-width="0.7"/><line x1="59" x2="61" y1="670.68" y2="670.68" stroke="#8a8a8a" stroke-width="0.7"/><line x1="59" x2="61" y1="673.67" y2="673.67" stroke="#8a8a8a" stroke-width="0.7"/><line x1="59" x2="61" y1="676.66" y2="676.66" stroke="#8a8a8a" stroke-width="0.7"/><line x1="55" x2="61" y1="679.65" y2="679.65" stroke="#9a9a9a" stroke-width="0.8"/><line x1="59" x2="61" y1="682.64" y2="682.64" stroke="#8a8a8a" stroke-width="0.7"/><line x1="59" x2="61" y1="685.63" y2="685.63" stroke="#8a8a8a" stroke-width="0.7"/><line x1="59" x2="61" y1="688.62" y2="688.62" stroke="#8a8a8a" stroke-width="0.7"/><line x1="59" x2="61" y1="691.61" y2="691.61" stroke="#8a8a8a" stroke-width="0.7"/><line x1="49" x2="61" y1="694.60" y2="694.60" stroke="#cfcfcf" stroke-width="0.9"/><line x1="59" x2="61" y1="697.59" y2="697.59" stroke="#8a8a8a" stroke-width="0.7"/><line x1="59" x2="61" y1="700.58" y2="700.58" stroke="#8a8a8a" stroke-width="0.7"/><line x1="59" x2="61" y1="703.57" y2="703.57" stroke="#8a8a8a" stroke-width="0.7"/><line x1="59" x2="61" y1="706.56" y2="706.56" stroke="#8a8a8a" stroke-width="0.7"/><line x1="55" x2="61" y1="709.55" y2="709.55" stroke="#9a9a9a" stroke-width="0.8"/><line x1="59" x2="61" y1="712.54" y2="712.54" stroke="#8a8a8a" stroke-width="0.7"/><line x1="59" x2="61" y1="715.53" y2="715.53" stroke="#8a8a8a" stroke-width="0.7"/><line x1="59" x2="61" y1="718.52" y2="718.52" stroke="#8a8a8a" stroke-width="0.7"/><line x1="59" x2="61" y1="721.51" y2="721.51" stroke="#8a8a8a" stroke-width="0.7"/><line x1="49" x2="61" y1="724.50" y2="724.50" stroke="#cfcfcf" stroke-width="0.9"/><line x1="59" x2="61" y1="727.49" y2="727.49" stroke="#8a8a8a" stroke-width="0.7"/><line x1="59" x2="61" y1="730.48" y2="730.48" stroke="#8a8a8a" stroke-width="0.7"/><line x1="59" x2="61" y1="733.47" y2="733.47" stroke="#8a8a8a" stroke-width="0.7"/><line x1="59" x2="61" y1="736.46" y2="736.46" stroke="#8a8a8a" stroke-width="0.7"/><line x1="55" x2="61" y1="739.45" y2="739.45" stroke="#9a9a9a" stroke-width="0.8"/><line x1="59" x2="61" y1="742.44" y2="742.44" stroke="#8a8a8a" stroke-width="0.7"/><line x1="59" x2="61" y1="745.43" y2="745.43" stroke="#8a8a8a" stroke-width="0.7"/><line x1="59" x2="61" y1="748.42" y2="748.42" stroke="#8a8a8a" stroke-width="0.7"/><line x1="59" x2="61" y1="751.41" y2="751.41" stroke="#8a8a8a" stroke-width="0.7"/><line x1="49" x2="61" y1="754.40" y2="754.40" stroke="#cfcfcf" stroke-width="0.9"/><line x1="59" x2="61" y1="757.39" y2="757.39" stroke="#8a8a8a" stroke-width="0.7"/><line x1="59" x2="61" y1="760.38" y2="760.38" stroke="#8a8a8a" stroke-width="0.7"/><line x1="59" x2="61" y1="763.37" y2="763.37" stroke="#8a8a8a" stroke-width="0.7"/><line x1="59" x2="61" y1="766.36" y2="766.36" stroke="#8a8a8a" stroke-width="0.7"/><line x1="55" x2="61" y1="769.35" y2="769.35" stroke="#9a9a9a" stroke-width="0.8"/><line x1="59" x2="61" y1="772.34" y2="772.34" stroke="#8a8a8a" stroke-width="0.7"/><line x1="59" x2="61" y1="775.33" y2="775.33" stroke="#8a8a8a" stroke-width="0.7"/><line x1="59" x2="61" y1="778.32" y2="778.32" stroke="#8a8a8a" stroke-width="0.7"/><line x1="59" x2="61" y1="781.31" y2="781.31" stroke="#8a8a8a" stroke-width="0.7"/><line x1="49" x2="61" y1="784.30" y2="784.30" stroke="#cfcfcf" stroke-width="0.9"/><line x1="59" x2="61" y1="787.29" y2="787.29" stroke="#8a8a8a" stroke-width="0.7"/><line x1="59" x2="61" y1="790.28" y2="790.28" stroke="#8a8a8a" stroke-width="0.7"/><line x1="59" x2="61" y1="793.27" y2="793.27" stroke="#8a8a8a" stroke-width="0.7"/><line x1="59" x2="61" y1="796.26" y2="796.26" stroke="#8a8a8a" stroke-width="0.7"/><line x1="55" x2="61" y1="799.25" y2="799.25" stroke="#9a9a9a" stroke-width="0.8"/><line x1="59" x2="61" y1="802.24" y2="802.24" stroke="#8a8a8a" stroke-width="0.7"/><line x1="59" x2="61" y1="805.23" y2="805.23" stroke="#8a8a8a" stroke-width="0.7"/><line x1="59" x2="61" y1="808.22" y2="808.22" stroke="#8a8a8a" stroke-width="0.7"/><line x1="59" x2="61" y1="811.21" y2="811.21" stroke="#8a8a8a" stroke-width="0.7"/><line x1="49" x2="61" y1="814.20" y2="814.20" stroke="#cfcfcf" stroke-width="0.9"/><line x1="59" x2="61" y1="817.19" y2="817.19" stroke="#8a8a8a" stroke-width="0.7"/><line x1="59" x2="61" y1="820.18" y2="820.18" stroke="#8a8a8a" stroke-width="0.7"/><line x1="59" x2="61" y1="823.17" y2="823.17" stroke="#8a8a8a" stroke-width="0.7"/><line x1="59" x2="61" y1="826.16" y2="826.16" stroke="#8a8a8a" stroke-width="0.7"/><line x1="55" x2="61" y1="829.15" y2="829.15" stroke="#9a9a9a" stroke-width="0.8"/><line x1="59" x2="61" y1="832.14" y2="832.14" stroke="#8a8a8a" stroke-width="0.7"/><line x1="59" x2="61" y1="835.13" y2="835.13" stroke="#8a8a8a" stroke-width="0.7"/><line x1="59" x2="61" y1="838.12" y2="838.12" stroke="#8a8a8a" stroke-width="0.7"/><line x1="59" x2="61" y1="841.11" y2="841.11" stroke="#8a8a8a" stroke-width="0.7"/><line x1="49" x2="61" y1="844.10" y2="844.10" stroke="#cfcfcf" stroke-width="0.9"/><line x1="59" x2="61" y1="847.09" y2="847.09" stroke="#8a8a8a" stroke-width="0.7"/><line x1="59" x2="61" y1="850.08" y2="850.08" stroke="#8a8a8a" stroke-width="0.7"/><line x1="59" x2="61" y1="853.07" y2="853.07" stroke="#8a8a8a" stroke-width="0.7"/><line x1="59" x2="61" y1="856.06" y2="856.06" stroke="#8a8a8a" stroke-width="0.7"/><line x1="55" x2="61" y1="859.05" y2="859.05" stroke="#9a9a9a" stroke-width="0.8"/><line x1="59" x2="61" y1="862.04" y2="862.04" stroke="#8a8a8a" stroke-width="0.7"/><line x1="59" x2="61" y1="865.03" y2="865.03" stroke="#8a8a8a" stroke-width="0.7"/><line x1="59" x2="61" y1="868.02" y2="868.02" stroke="#8a8a8a" stroke-width="0.7"/><line x1="59" x2="61" y1="871.01" y2="871.01" stroke="#8a8a8a" stroke-width="0.7"/><line x1="49" x2="61" y1="874.00" y2="874.00" stroke="#cfcfcf" stroke-width="0.9"/><line x1="59" x2="61" y1="876.99" y2="876.99" stroke="#8a8a8a" stroke-width="0.7"/><line x1="59" x2="61" y1="879.98" y2="879.98" stroke="#8a8a8a" stroke-width="0.7"/><line x1="59" x2="61" y1="882.97" y2="882.97" stroke="#8a8a8a" stroke-width="0.7"/><line x1="59" x2="61" y1="885.96" y2="885.96" stroke="#8a8a8a" stroke-width="0.7"/><line x1="55" x2="61" y1="888.95" y2="888.95" stroke="#9a9a9a" stroke-width="0.8"/><line x1="59" x2="61" y1="891.94" y2="891.94" stroke="#8a8a8a" stroke-width="0.7"/><line x1="59" x2="61" y1="894.93" y2="894.93" stroke="#8a8a8a" stroke-width="0.7"/><line x1="59" x2="61" y1="897.92" y2="897.92" stroke="#8a8a8a" stroke-width="0.7"/><line x1="59" x2="61" y1="900.91" y2="900.91" stroke="#8a8a8a" stroke-width="0.7"/><line x1="49" x2="61" y1="903.90" y2="903.90" stroke="#cfcfcf" stroke-width="0.9"/><line x1="59" x2="61" y1="906.89" y2="906.89" stroke="#8a8a8a" stroke-width="0.7"/><line x1="59" x2="61" y1="909.88" y2="909.88" stroke="#8a8a8a" stroke-width="0.7"/><line x1="59" x2="61" y1="912.87" y2="912.87" stroke="#8a8a8a" stroke-width="0.7"/><line x1="59" x2="61" y1="915.86" y2="915.86" stroke="#8a8a8a" stroke-width="0.7"/><line x1="55" x2="61" y1="918.85" y2="918.85" stroke="#9a9a9a" stroke-width="0.8"/><line x1="59" x2="61" y1="921.84" y2="921.84" stroke="#8a8a8a" stroke-width="0.7"/><line x1="59" x2="61" y1="924.83" y2="924.83" stroke="#8a8a8a" stroke-width="0.7"/><line x1="59" x2="61" y1="927.82" y2="927.82" stroke="#8a8a8a" stroke-width="0.7"/><line x1="59" x2="61" y1="930.81" y2="930.81" stroke="#8a8a8a" stroke-width="0.7"/><line x1="49" x2="61" y1="933.80" y2="933.80" stroke="#cfcfcf" stroke-width="0.9"/><line x1="59" x2="61" y1="936.79" y2="936.79" stroke="#8a8a8a" stroke-width="0.7"/><line x1="59" x2="61" y1="939.78" y2="939.78" stroke="#8a8a8a" stroke-width="0.7"/><line x1="59" x2="61" y1="942.77" y2="942.77" stroke="#8a8a8a" stroke-width="0.7"/><line x1="59" x2="61" y1="945.76" y2="945.76" stroke="#8a8a8a" stroke-width="0.7"/><line x1="55" x2="61" y1="948.75" y2="948.75" stroke="#9a9a9a" stroke-width="0.8"/><line x1="59" x2="61" y1="951.74" y2="951.74" stroke="#8a8a8a" stroke-width="0.7"/><line x1="59" x2="61" y1="954.73" y2="954.73" stroke="#8a8a8a" stroke-width="0.7"/><line x1="59" x2="61" y1="957.72" y2="957.72" stroke="#8a8a8a" stroke-width="0.7"/><line x1="59" x2="61" y1="960.71" y2="960.71" stroke="#8a8a8a" stroke-width="0.7"/><line x1="49" x2="61" y1="963.70" y2="963.70" stroke="#cfcfcf" stroke-width="0.9"/><line x1="61" x2="61" y1="91" y2="965" stroke="#9a9a9a" stroke-width="0.6"/></svg>
<div class="a" style="left:49px;top:91px;width:12px;height:12px;background:#1e1e1e;border-right:1px solid #777;border-bottom:1px solid #777"></div>
<div class="a" style="left:48.5px;top:103px;width:13px;height:862px;overflow:hidden"><div class="rn" style="left:2.5px;top:-5.6px;width:8px;text-align:center;line-height:8px;font-size:8.5px">1<br>0</div><div class="rn" style="left:2.5px;top:24.3px;width:8px;text-align:center;line-height:8px;font-size:8.5px">0</div><div class="rn" style="left:2.5px;top:54.2px;width:8px;text-align:center;line-height:8px;font-size:8.5px">1<br>0</div><div class="rn" style="left:2.5px;top:84.1px;width:8px;text-align:center;line-height:8px;font-size:8.5px">2<br>0</div><div class="rn" style="left:2.5px;top:114.0px;width:8px;text-align:center;line-height:8px;font-size:8.5px">3<br>0</div><div class="rn" style="left:2.5px;top:143.9px;width:8px;text-align:center;line-height:8px;font-size:8.5px">4<br>0</div><div class="rn" style="left:2.5px;top:173.8px;width:8px;text-align:center;line-height:8px;font-size:8.5px">5<br>0</div><div class="rn" style="left:2.5px;top:203.7px;width:8px;text-align:center;line-height:8px;font-size:8.5px">6<br>0</div><div class="rn" style="left:2.5px;top:233.6px;width:8px;text-align:center;line-height:8px;font-size:8.5px">7<br>0</div><div class="rn" style="left:2.5px;top:263.5px;width:8px;text-align:center;line-height:8px;font-size:8.5px">8<br>0</div><div class="rn" style="left:2.5px;top:293.4px;width:8px;text-align:center;line-height:8px;font-size:8.5px">9<br>0</div><div class="rn" style="left:2.5px;top:323.3px;width:8px;text-align:center;line-height:8px;font-size:8.5px">1<br>0<br>0</div><div class="rn" style="left:2.5px;top:353.2px;width:8px;text-align:center;line-height:8px;font-size:8.5px">1<br>1<br>0</div><div class="rn" style="left:2.5px;top:383.1px;width:8px;text-align:center;line-height:8px;font-size:8.5px">1<br>2<br>0</div><div class="rn" style="left:2.5px;top:413.0px;width:8px;text-align:center;line-height:8px;font-size:8.5px">1<br>3<br>0</div><div class="rn" style="left:2.5px;top:442.9px;width:8px;text-align:center;line-height:8px;font-size:8.5px">1<br>4<br>0</div><div class="rn" style="left:2.5px;top:472.8px;width:8px;text-align:center;line-height:8px;font-size:8.5px">1<br>5<br>0</div><div class="rn" style="left:2.5px;top:502.7px;width:8px;text-align:center;line-height:8px;font-size:8.5px">1<br>6<br>0</div><div class="rn" style="left:2.5px;top:532.6px;width:8px;text-align:center;line-height:8px;font-size:8.5px">1<br>7<br>0</div><div class="rn" style="left:2.5px;top:562.5px;width:8px;text-align:center;line-height:8px;font-size:8.5px">1<br>8<br>0</div><div class="rn" style="left:2.5px;top:592.4px;width:8px;text-align:center;line-height:8px;font-size:8.5px">1<br>9<br>0</div><div class="rn" style="left:2.5px;top:622.3px;width:8px;text-align:center;line-height:8px;font-size:8.5px">2<br>0<br>0</div><div class="rn" style="left:2.5px;top:652.2px;width:8px;text-align:center;line-height:8px;font-size:8.5px">2<br>1<br>0</div><div class="rn" style="left:2.5px;top:682.1px;width:8px;text-align:center;line-height:8px;font-size:8.5px">2<br>2<br>0</div><div class="rn" style="left:2.5px;top:712.0px;width:8px;text-align:center;line-height:8px;font-size:8.5px">2<br>3<br>0</div><div class="rn" style="left:2.5px;top:741.9px;width:8px;text-align:center;line-height:8px;font-size:8.5px">2<br>4<br>0</div><div class="rn" style="left:2.5px;top:771.8px;width:8px;text-align:center;line-height:8px;font-size:8.5px">2<br>5<br>0</div><div class="rn" style="left:2.5px;top:801.7px;width:8px;text-align:center;line-height:8px;font-size:8.5px">2<br>6<br>0</div><div class="rn" style="left:2.5px;top:831.6px;width:8px;text-align:center;line-height:8px;font-size:8.5px">2<br>7<br>0</div><div class="rn" style="left:2.5px;top:861.5px;width:8px;text-align:center;line-height:8px;font-size:8.5px">2<br>8<br>0</div></div>
<div class="rn" style="left:62.1px;top:91.5px;font-size:9.6px">70</div><div class="rn" style="left:92.0px;top:91.5px;font-size:9.6px">60</div><div class="rn" style="left:121.9px;top:91.5px;font-size:9.6px">50</div><div class="rn" style="left:151.8px;top:91.5px;font-size:9.6px">40</div><div class="rn" style="left:181.7px;top:91.5px;font-size:9.6px">30</div><div class="rn" style="left:211.6px;top:91.5px;font-size:9.6px">20</div><div class="rn" style="left:241.5px;top:91.5px;font-size:9.6px">10</div><div class="rn" style="left:271.4px;top:91.5px;font-size:9.6px">0</div><div class="rn" style="left:301.3px;top:91.5px;font-size:9.6px">10</div><div class="rn" style="left:331.2px;top:91.5px;font-size:9.6px">20</div><div class="rn" style="left:361.1px;top:91.5px;font-size:9.6px">30</div><div class="rn" style="left:391.0px;top:91.5px;font-size:9.6px">40</div><div class="rn" style="left:420.9px;top:91.5px;font-size:9.6px">50</div><div class="rn" style="left:450.8px;top:91.5px;font-size:9.6px">60</div><div class="rn" style="left:480.7px;top:91.5px;font-size:9.6px">70</div><div class="rn" style="left:510.6px;top:91.5px;font-size:9.6px">80</div><div class="rn" style="left:540.5px;top:91.5px;font-size:9.6px">90</div><div class="rn" style="left:570.4px;top:91.5px;font-size:9.6px">100</div><div class="rn" style="left:600.3px;top:91.5px;font-size:9.6px">110</div><div class="rn" style="left:630.2px;top:91.5px;font-size:9.6px">120</div><div class="rn" style="left:660.1px;top:91.5px;font-size:9.6px">130</div><div class="rn" style="left:690.0px;top:91.5px;font-size:9.6px">140</div><div class="rn" style="left:719.9px;top:91.5px;font-size:9.6px">150</div><div class="rn" style="left:749.8px;top:91.5px;font-size:9.6px">160</div><div class="rn" style="left:779.7px;top:91.5px;font-size:9.6px">170</div><div class="rn" style="left:809.6px;top:91.5px;font-size:9.6px">180</div><div class="rn" style="left:839.5px;top:91.5px;font-size:9.6px">190</div><div class="rn" style="left:869.4px;top:91.5px;font-size:9.6px">200</div><div class="rn" style="left:899.3px;top:91.5px;font-size:9.6px">210</div><div class="rn" style="left:929.2px;top:91.5px;font-size:9.6px">220</div><div class="rn" style="left:959.1px;top:91.5px;font-size:9.6px">230</div><div class="rn" style="left:989.0px;top:91.5px;font-size:9.6px">240</div><div class="rn" style="left:1018.9px;top:91.5px;font-size:9.6px">250</div><div class="rn" style="left:1048.8px;top:91.5px;font-size:9.6px">260</div><div class="rn" style="left:1078.7px;top:91.5px;font-size:9.6px">270</div><div class="rn" style="left:1108.6px;top:91.5px;font-size:9.6px">280</div><div class="rn" style="left:1138.5px;top:91.5px;font-size:9.6px">290</div><div class="rn" style="left:1168.4px;top:91.5px;font-size:9.6px">300</div><div class="rn" style="left:1198.3px;top:91.5px;font-size:9.6px">310</div><div class="rn" style="left:1228.2px;top:91.5px;font-size:9.6px">320</div><div class="rn" style="left:1258.1px;top:91.5px;font-size:9.6px">330</div><div class="rn" style="left:1288.0px;top:91.5px;font-size:9.6px">340</div><div class="rn" style="left:1317.9px;top:91.5px;font-size:9.6px">350</div><div class="rn" style="left:1347.8px;top:91.5px;font-size:9.6px">360</div><div class="rn" style="left:1377.7px;top:91.5px;font-size:9.6px">370</div><div class="rn" style="left:1407.6px;top:91.5px;font-size:9.6px">380</div><div class="rn" style="left:1437.5px;top:91.5px;font-size:9.6px">390</div>
</body></html>
